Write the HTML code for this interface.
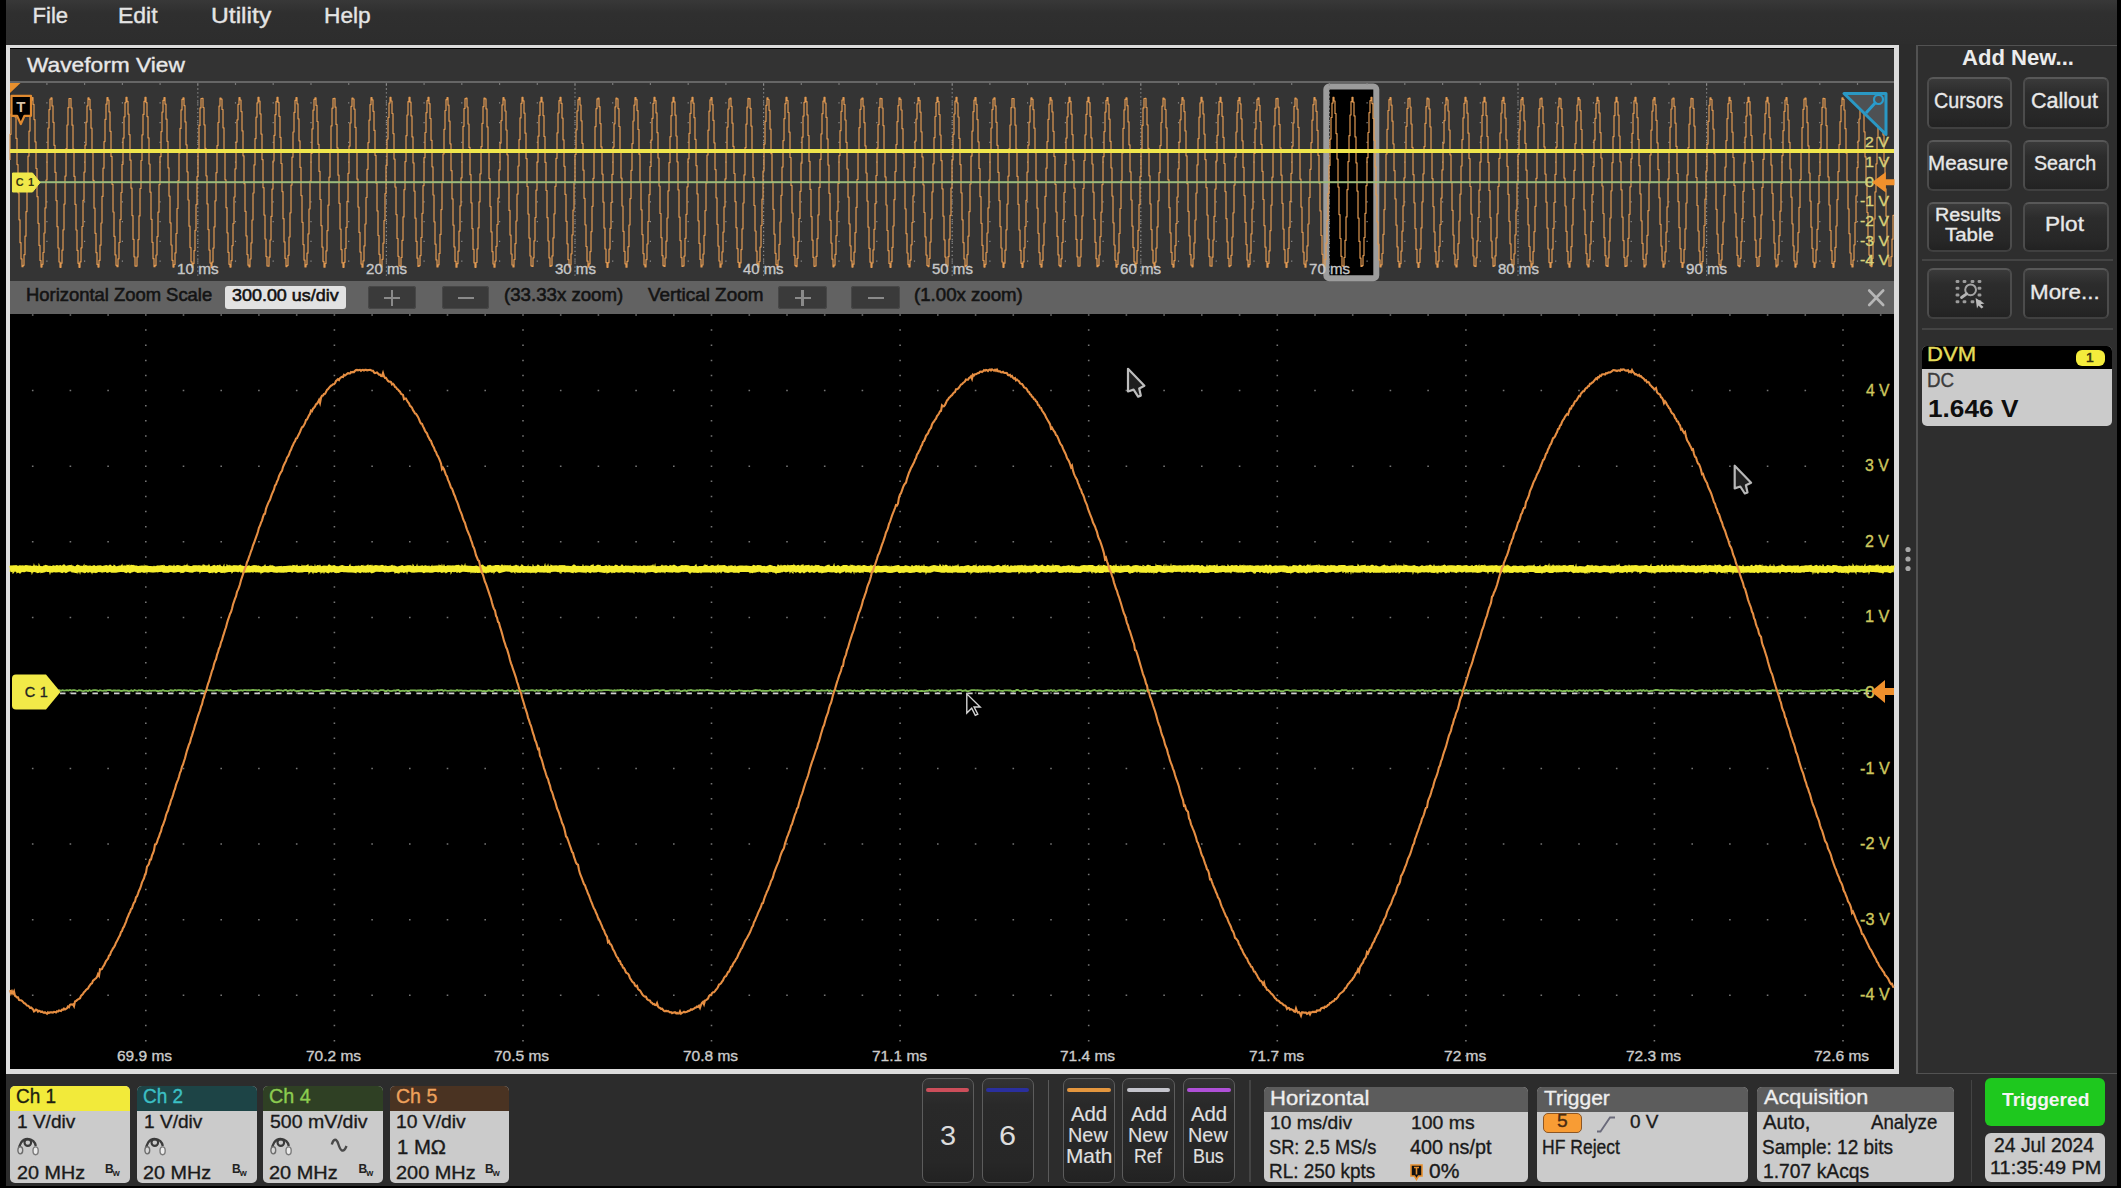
<!DOCTYPE html><html><head><meta charset="utf-8"><style>html,body{margin:0;padding:0;width:2121px;height:1188px;overflow:hidden;background:#000;font-family:'Liberation Sans', sans-serif;}.t{position:absolute;white-space:nowrap;line-height:1;transform-origin:0 0;}.b{position:absolute;box-sizing:border-box;}</style></head><body><div style="position:absolute;left:5.5px;top:0px;width:2111.5px;height:1185.5px;background:#2c2c2c"></div><div style="position:absolute;left:5.5px;top:0px;width:2111.5px;height:44px;background:linear-gradient(#383838,#2f2f2f 30%,#2d2d2d)"></div><div class="t" style="left:32.50px;top:4.59px;font-size:22.09px;color:#e4e4e4;font-weight:400;transform:scaleX(1.0000);-webkit-text-stroke:0.35px #e4e4e4;">File</div><div class="t" style="left:118.46px;top:4.59px;font-size:22.09px;color:#e4e4e4;font-weight:400;transform:scaleX(1.0405);-webkit-text-stroke:0.35px #e4e4e4;">Edit</div><div class="t" style="left:210.63px;top:4.59px;font-size:22.09px;color:#e4e4e4;font-weight:400;transform:scaleX(1.1162);-webkit-text-stroke:0.35px #e4e4e4;">Utility</div><div class="t" style="left:323.58px;top:4.59px;font-size:22.09px;color:#e4e4e4;font-weight:400;transform:scaleX(1.0296);-webkit-text-stroke:0.35px #e4e4e4;">Help</div><div style="position:absolute;left:6px;top:45px;width:1893px;height:1029px;box-sizing:border-box;border:solid #dcdcdc;border-width:3.5px 5px 5px 4px;background:#000"></div><div style="position:absolute;left:10px;top:48.5px;width:1884px;height:33px;background:#333333"></div><div style="position:absolute;left:10px;top:81px;width:1884px;height:2.5px;background:#666"></div><div style="position:absolute;left:10px;top:281px;width:1884px;height:33px;background:#626262"></div><div class="t" style="left:26.67px;top:56.31px;font-size:19.48px;color:#e8e8e8;font-weight:400;transform:scaleX(1.1667);-webkit-text-stroke:0.35px #e8e8e8;">Waveform View</div><svg width="2121" height="1188" style="position:absolute;left:0;top:0"><rect x="10" y="83" width="1884" height="198" fill="#343434"/><rect x="1326.3" y="86.5" width="50" height="191.7" rx="3" fill="#000" stroke="#9c9c9c" stroke-width="6"/><path d="M197.2 85.0h1.2M197.2 89.0h1.2M197.2 92.9h1.2M197.2 96.9h1.2M197.2 100.8h1.2M197.2 104.8h1.2M197.2 108.8h1.2M197.2 112.7h1.2M197.2 116.7h1.2M197.2 120.6h1.2M197.2 124.6h1.2M197.2 128.6h1.2M197.2 132.5h1.2M197.2 136.5h1.2M197.2 140.4h1.2M197.2 144.4h1.2M197.2 148.4h1.2M197.2 152.3h1.2M197.2 156.3h1.2M197.2 160.2h1.2M197.2 164.2h1.2M197.2 168.2h1.2M197.2 172.1h1.2M197.2 176.1h1.2M197.2 180.0h1.2M197.2 184.0h1.2M197.2 188.0h1.2M197.2 191.9h1.2M197.2 195.9h1.2M197.2 199.8h1.2M197.2 203.8h1.2M197.2 207.8h1.2M197.2 211.7h1.2M197.2 215.7h1.2M197.2 219.6h1.2M197.2 223.6h1.2M197.2 227.6h1.2M197.2 231.5h1.2M197.2 235.5h1.2M197.2 239.4h1.2M197.2 243.4h1.2M197.2 247.4h1.2M197.2 251.3h1.2M197.2 255.3h1.2M197.2 259.2h1.2M197.2 263.2h1.2M197.2 267.2h1.2M197.2 271.1h1.2M197.2 275.1h1.2M385.8 85.0h1.2M385.8 89.0h1.2M385.8 92.9h1.2M385.8 96.9h1.2M385.8 100.8h1.2M385.8 104.8h1.2M385.8 108.8h1.2M385.8 112.7h1.2M385.8 116.7h1.2M385.8 120.6h1.2M385.8 124.6h1.2M385.8 128.6h1.2M385.8 132.5h1.2M385.8 136.5h1.2M385.8 140.4h1.2M385.8 144.4h1.2M385.8 148.4h1.2M385.8 152.3h1.2M385.8 156.3h1.2M385.8 160.2h1.2M385.8 164.2h1.2M385.8 168.2h1.2M385.8 172.1h1.2M385.8 176.1h1.2M385.8 180.0h1.2M385.8 184.0h1.2M385.8 188.0h1.2M385.8 191.9h1.2M385.8 195.9h1.2M385.8 199.8h1.2M385.8 203.8h1.2M385.8 207.8h1.2M385.8 211.7h1.2M385.8 215.7h1.2M385.8 219.6h1.2M385.8 223.6h1.2M385.8 227.6h1.2M385.8 231.5h1.2M385.8 235.5h1.2M385.8 239.4h1.2M385.8 243.4h1.2M385.8 247.4h1.2M385.8 251.3h1.2M385.8 255.3h1.2M385.8 259.2h1.2M385.8 263.2h1.2M385.8 267.2h1.2M385.8 271.1h1.2M385.8 275.1h1.2M574.4 85.0h1.2M574.4 89.0h1.2M574.4 92.9h1.2M574.4 96.9h1.2M574.4 100.8h1.2M574.4 104.8h1.2M574.4 108.8h1.2M574.4 112.7h1.2M574.4 116.7h1.2M574.4 120.6h1.2M574.4 124.6h1.2M574.4 128.6h1.2M574.4 132.5h1.2M574.4 136.5h1.2M574.4 140.4h1.2M574.4 144.4h1.2M574.4 148.4h1.2M574.4 152.3h1.2M574.4 156.3h1.2M574.4 160.2h1.2M574.4 164.2h1.2M574.4 168.2h1.2M574.4 172.1h1.2M574.4 176.1h1.2M574.4 180.0h1.2M574.4 184.0h1.2M574.4 188.0h1.2M574.4 191.9h1.2M574.4 195.9h1.2M574.4 199.8h1.2M574.4 203.8h1.2M574.4 207.8h1.2M574.4 211.7h1.2M574.4 215.7h1.2M574.4 219.6h1.2M574.4 223.6h1.2M574.4 227.6h1.2M574.4 231.5h1.2M574.4 235.5h1.2M574.4 239.4h1.2M574.4 243.4h1.2M574.4 247.4h1.2M574.4 251.3h1.2M574.4 255.3h1.2M574.4 259.2h1.2M574.4 263.2h1.2M574.4 267.2h1.2M574.4 271.1h1.2M574.4 275.1h1.2M763.0 85.0h1.2M763.0 89.0h1.2M763.0 92.9h1.2M763.0 96.9h1.2M763.0 100.8h1.2M763.0 104.8h1.2M763.0 108.8h1.2M763.0 112.7h1.2M763.0 116.7h1.2M763.0 120.6h1.2M763.0 124.6h1.2M763.0 128.6h1.2M763.0 132.5h1.2M763.0 136.5h1.2M763.0 140.4h1.2M763.0 144.4h1.2M763.0 148.4h1.2M763.0 152.3h1.2M763.0 156.3h1.2M763.0 160.2h1.2M763.0 164.2h1.2M763.0 168.2h1.2M763.0 172.1h1.2M763.0 176.1h1.2M763.0 180.0h1.2M763.0 184.0h1.2M763.0 188.0h1.2M763.0 191.9h1.2M763.0 195.9h1.2M763.0 199.8h1.2M763.0 203.8h1.2M763.0 207.8h1.2M763.0 211.7h1.2M763.0 215.7h1.2M763.0 219.6h1.2M763.0 223.6h1.2M763.0 227.6h1.2M763.0 231.5h1.2M763.0 235.5h1.2M763.0 239.4h1.2M763.0 243.4h1.2M763.0 247.4h1.2M763.0 251.3h1.2M763.0 255.3h1.2M763.0 259.2h1.2M763.0 263.2h1.2M763.0 267.2h1.2M763.0 271.1h1.2M763.0 275.1h1.2M951.6 85.0h1.2M951.6 89.0h1.2M951.6 92.9h1.2M951.6 96.9h1.2M951.6 100.8h1.2M951.6 104.8h1.2M951.6 108.8h1.2M951.6 112.7h1.2M951.6 116.7h1.2M951.6 120.6h1.2M951.6 124.6h1.2M951.6 128.6h1.2M951.6 132.5h1.2M951.6 136.5h1.2M951.6 140.4h1.2M951.6 144.4h1.2M951.6 148.4h1.2M951.6 152.3h1.2M951.6 156.3h1.2M951.6 160.2h1.2M951.6 164.2h1.2M951.6 168.2h1.2M951.6 172.1h1.2M951.6 176.1h1.2M951.6 180.0h1.2M951.6 184.0h1.2M951.6 188.0h1.2M951.6 191.9h1.2M951.6 195.9h1.2M951.6 199.8h1.2M951.6 203.8h1.2M951.6 207.8h1.2M951.6 211.7h1.2M951.6 215.7h1.2M951.6 219.6h1.2M951.6 223.6h1.2M951.6 227.6h1.2M951.6 231.5h1.2M951.6 235.5h1.2M951.6 239.4h1.2M951.6 243.4h1.2M951.6 247.4h1.2M951.6 251.3h1.2M951.6 255.3h1.2M951.6 259.2h1.2M951.6 263.2h1.2M951.6 267.2h1.2M951.6 271.1h1.2M951.6 275.1h1.2M1140.2 85.0h1.2M1140.2 89.0h1.2M1140.2 92.9h1.2M1140.2 96.9h1.2M1140.2 100.8h1.2M1140.2 104.8h1.2M1140.2 108.8h1.2M1140.2 112.7h1.2M1140.2 116.7h1.2M1140.2 120.6h1.2M1140.2 124.6h1.2M1140.2 128.6h1.2M1140.2 132.5h1.2M1140.2 136.5h1.2M1140.2 140.4h1.2M1140.2 144.4h1.2M1140.2 148.4h1.2M1140.2 152.3h1.2M1140.2 156.3h1.2M1140.2 160.2h1.2M1140.2 164.2h1.2M1140.2 168.2h1.2M1140.2 172.1h1.2M1140.2 176.1h1.2M1140.2 180.0h1.2M1140.2 184.0h1.2M1140.2 188.0h1.2M1140.2 191.9h1.2M1140.2 195.9h1.2M1140.2 199.8h1.2M1140.2 203.8h1.2M1140.2 207.8h1.2M1140.2 211.7h1.2M1140.2 215.7h1.2M1140.2 219.6h1.2M1140.2 223.6h1.2M1140.2 227.6h1.2M1140.2 231.5h1.2M1140.2 235.5h1.2M1140.2 239.4h1.2M1140.2 243.4h1.2M1140.2 247.4h1.2M1140.2 251.3h1.2M1140.2 255.3h1.2M1140.2 259.2h1.2M1140.2 263.2h1.2M1140.2 267.2h1.2M1140.2 271.1h1.2M1140.2 275.1h1.2M1328.8 85.0h1.2M1328.8 89.0h1.2M1328.8 92.9h1.2M1328.8 96.9h1.2M1328.8 100.8h1.2M1328.8 104.8h1.2M1328.8 108.8h1.2M1328.8 112.7h1.2M1328.8 116.7h1.2M1328.8 120.6h1.2M1328.8 124.6h1.2M1328.8 128.6h1.2M1328.8 132.5h1.2M1328.8 136.5h1.2M1328.8 140.4h1.2M1328.8 144.4h1.2M1328.8 148.4h1.2M1328.8 152.3h1.2M1328.8 156.3h1.2M1328.8 160.2h1.2M1328.8 164.2h1.2M1328.8 168.2h1.2M1328.8 172.1h1.2M1328.8 176.1h1.2M1328.8 180.0h1.2M1328.8 184.0h1.2M1328.8 188.0h1.2M1328.8 191.9h1.2M1328.8 195.9h1.2M1328.8 199.8h1.2M1328.8 203.8h1.2M1328.8 207.8h1.2M1328.8 211.7h1.2M1328.8 215.7h1.2M1328.8 219.6h1.2M1328.8 223.6h1.2M1328.8 227.6h1.2M1328.8 231.5h1.2M1328.8 235.5h1.2M1328.8 239.4h1.2M1328.8 243.4h1.2M1328.8 247.4h1.2M1328.8 251.3h1.2M1328.8 255.3h1.2M1328.8 259.2h1.2M1328.8 263.2h1.2M1328.8 267.2h1.2M1328.8 271.1h1.2M1328.8 275.1h1.2M1517.4 85.0h1.2M1517.4 89.0h1.2M1517.4 92.9h1.2M1517.4 96.9h1.2M1517.4 100.8h1.2M1517.4 104.8h1.2M1517.4 108.8h1.2M1517.4 112.7h1.2M1517.4 116.7h1.2M1517.4 120.6h1.2M1517.4 124.6h1.2M1517.4 128.6h1.2M1517.4 132.5h1.2M1517.4 136.5h1.2M1517.4 140.4h1.2M1517.4 144.4h1.2M1517.4 148.4h1.2M1517.4 152.3h1.2M1517.4 156.3h1.2M1517.4 160.2h1.2M1517.4 164.2h1.2M1517.4 168.2h1.2M1517.4 172.1h1.2M1517.4 176.1h1.2M1517.4 180.0h1.2M1517.4 184.0h1.2M1517.4 188.0h1.2M1517.4 191.9h1.2M1517.4 195.9h1.2M1517.4 199.8h1.2M1517.4 203.8h1.2M1517.4 207.8h1.2M1517.4 211.7h1.2M1517.4 215.7h1.2M1517.4 219.6h1.2M1517.4 223.6h1.2M1517.4 227.6h1.2M1517.4 231.5h1.2M1517.4 235.5h1.2M1517.4 239.4h1.2M1517.4 243.4h1.2M1517.4 247.4h1.2M1517.4 251.3h1.2M1517.4 255.3h1.2M1517.4 259.2h1.2M1517.4 263.2h1.2M1517.4 267.2h1.2M1517.4 271.1h1.2M1517.4 275.1h1.2M1706.0 85.0h1.2M1706.0 89.0h1.2M1706.0 92.9h1.2M1706.0 96.9h1.2M1706.0 100.8h1.2M1706.0 104.8h1.2M1706.0 108.8h1.2M1706.0 112.7h1.2M1706.0 116.7h1.2M1706.0 120.6h1.2M1706.0 124.6h1.2M1706.0 128.6h1.2M1706.0 132.5h1.2M1706.0 136.5h1.2M1706.0 140.4h1.2M1706.0 144.4h1.2M1706.0 148.4h1.2M1706.0 152.3h1.2M1706.0 156.3h1.2M1706.0 160.2h1.2M1706.0 164.2h1.2M1706.0 168.2h1.2M1706.0 172.1h1.2M1706.0 176.1h1.2M1706.0 180.0h1.2M1706.0 184.0h1.2M1706.0 188.0h1.2M1706.0 191.9h1.2M1706.0 195.9h1.2M1706.0 199.8h1.2M1706.0 203.8h1.2M1706.0 207.8h1.2M1706.0 211.7h1.2M1706.0 215.7h1.2M1706.0 219.6h1.2M1706.0 223.6h1.2M1706.0 227.6h1.2M1706.0 231.5h1.2M1706.0 235.5h1.2M1706.0 239.4h1.2M1706.0 243.4h1.2M1706.0 247.4h1.2M1706.0 251.3h1.2M1706.0 255.3h1.2M1706.0 259.2h1.2M1706.0 263.2h1.2M1706.0 267.2h1.2M1706.0 271.1h1.2M1706.0 275.1h1.2M46.3 84.0h1.2M84.0 84.0h1.2M121.8 84.0h1.2M159.5 84.0h1.2M197.2 84.0h1.2M234.9 84.0h1.2M272.6 84.0h1.2M310.4 84.0h1.2M348.1 84.0h1.2M385.8 84.0h1.2M423.5 84.0h1.2M461.2 84.0h1.2M499.0 84.0h1.2M536.7 84.0h1.2M574.4 84.0h1.2M612.1 84.0h1.2M649.8 84.0h1.2M687.6 84.0h1.2M725.3 84.0h1.2M763.0 84.0h1.2M800.7 84.0h1.2M838.4 84.0h1.2M876.2 84.0h1.2M913.9 84.0h1.2M951.6 84.0h1.2M989.3 84.0h1.2M1027.0 84.0h1.2M1064.8 84.0h1.2M1102.5 84.0h1.2M1140.2 84.0h1.2M1177.9 84.0h1.2M1215.6 84.0h1.2M1253.4 84.0h1.2M1291.1 84.0h1.2M1328.8 84.0h1.2M1366.5 84.0h1.2M1404.2 84.0h1.2M1442.0 84.0h1.2M1479.7 84.0h1.2M1517.4 84.0h1.2M1555.1 84.0h1.2M1592.8 84.0h1.2M1630.6 84.0h1.2M1668.3 84.0h1.2M1706.0 84.0h1.2M1743.7 84.0h1.2M1781.4 84.0h1.2M1819.2 84.0h1.2M1856.9 84.0h1.2M46.3 102.8h1.2M84.0 102.8h1.2M121.8 102.8h1.2M159.5 102.8h1.2M197.2 102.8h1.2M234.9 102.8h1.2M272.6 102.8h1.2M310.4 102.8h1.2M348.1 102.8h1.2M385.8 102.8h1.2M423.5 102.8h1.2M461.2 102.8h1.2M499.0 102.8h1.2M536.7 102.8h1.2M574.4 102.8h1.2M612.1 102.8h1.2M649.8 102.8h1.2M687.6 102.8h1.2M725.3 102.8h1.2M763.0 102.8h1.2M800.7 102.8h1.2M838.4 102.8h1.2M876.2 102.8h1.2M913.9 102.8h1.2M951.6 102.8h1.2M989.3 102.8h1.2M1027.0 102.8h1.2M1064.8 102.8h1.2M1102.5 102.8h1.2M1140.2 102.8h1.2M1177.9 102.8h1.2M1215.6 102.8h1.2M1253.4 102.8h1.2M1291.1 102.8h1.2M1328.8 102.8h1.2M1366.5 102.8h1.2M1404.2 102.8h1.2M1442.0 102.8h1.2M1479.7 102.8h1.2M1517.4 102.8h1.2M1555.1 102.8h1.2M1592.8 102.8h1.2M1630.6 102.8h1.2M1668.3 102.8h1.2M1706.0 102.8h1.2M1743.7 102.8h1.2M1781.4 102.8h1.2M1819.2 102.8h1.2M1856.9 102.8h1.2M46.3 122.6h1.2M84.0 122.6h1.2M121.8 122.6h1.2M159.5 122.6h1.2M197.2 122.6h1.2M234.9 122.6h1.2M272.6 122.6h1.2M310.4 122.6h1.2M348.1 122.6h1.2M385.8 122.6h1.2M423.5 122.6h1.2M461.2 122.6h1.2M499.0 122.6h1.2M536.7 122.6h1.2M574.4 122.6h1.2M612.1 122.6h1.2M649.8 122.6h1.2M687.6 122.6h1.2M725.3 122.6h1.2M763.0 122.6h1.2M800.7 122.6h1.2M838.4 122.6h1.2M876.2 122.6h1.2M913.9 122.6h1.2M951.6 122.6h1.2M989.3 122.6h1.2M1027.0 122.6h1.2M1064.8 122.6h1.2M1102.5 122.6h1.2M1140.2 122.6h1.2M1177.9 122.6h1.2M1215.6 122.6h1.2M1253.4 122.6h1.2M1291.1 122.6h1.2M1328.8 122.6h1.2M1366.5 122.6h1.2M1404.2 122.6h1.2M1442.0 122.6h1.2M1479.7 122.6h1.2M1517.4 122.6h1.2M1555.1 122.6h1.2M1592.8 122.6h1.2M1630.6 122.6h1.2M1668.3 122.6h1.2M1706.0 122.6h1.2M1743.7 122.6h1.2M1781.4 122.6h1.2M1819.2 122.6h1.2M1856.9 122.6h1.2M46.3 142.4h1.2M84.0 142.4h1.2M121.8 142.4h1.2M159.5 142.4h1.2M197.2 142.4h1.2M234.9 142.4h1.2M272.6 142.4h1.2M310.4 142.4h1.2M348.1 142.4h1.2M385.8 142.4h1.2M423.5 142.4h1.2M461.2 142.4h1.2M499.0 142.4h1.2M536.7 142.4h1.2M574.4 142.4h1.2M612.1 142.4h1.2M649.8 142.4h1.2M687.6 142.4h1.2M725.3 142.4h1.2M763.0 142.4h1.2M800.7 142.4h1.2M838.4 142.4h1.2M876.2 142.4h1.2M913.9 142.4h1.2M951.6 142.4h1.2M989.3 142.4h1.2M1027.0 142.4h1.2M1064.8 142.4h1.2M1102.5 142.4h1.2M1140.2 142.4h1.2M1177.9 142.4h1.2M1215.6 142.4h1.2M1253.4 142.4h1.2M1291.1 142.4h1.2M1328.8 142.4h1.2M1366.5 142.4h1.2M1404.2 142.4h1.2M1442.0 142.4h1.2M1479.7 142.4h1.2M1517.4 142.4h1.2M1555.1 142.4h1.2M1592.8 142.4h1.2M1630.6 142.4h1.2M1668.3 142.4h1.2M1706.0 142.4h1.2M1743.7 142.4h1.2M1781.4 142.4h1.2M1819.2 142.4h1.2M1856.9 142.4h1.2M46.3 162.2h1.2M84.0 162.2h1.2M121.8 162.2h1.2M159.5 162.2h1.2M197.2 162.2h1.2M234.9 162.2h1.2M272.6 162.2h1.2M310.4 162.2h1.2M348.1 162.2h1.2M385.8 162.2h1.2M423.5 162.2h1.2M461.2 162.2h1.2M499.0 162.2h1.2M536.7 162.2h1.2M574.4 162.2h1.2M612.1 162.2h1.2M649.8 162.2h1.2M687.6 162.2h1.2M725.3 162.2h1.2M763.0 162.2h1.2M800.7 162.2h1.2M838.4 162.2h1.2M876.2 162.2h1.2M913.9 162.2h1.2M951.6 162.2h1.2M989.3 162.2h1.2M1027.0 162.2h1.2M1064.8 162.2h1.2M1102.5 162.2h1.2M1140.2 162.2h1.2M1177.9 162.2h1.2M1215.6 162.2h1.2M1253.4 162.2h1.2M1291.1 162.2h1.2M1328.8 162.2h1.2M1366.5 162.2h1.2M1404.2 162.2h1.2M1442.0 162.2h1.2M1479.7 162.2h1.2M1517.4 162.2h1.2M1555.1 162.2h1.2M1592.8 162.2h1.2M1630.6 162.2h1.2M1668.3 162.2h1.2M1706.0 162.2h1.2M1743.7 162.2h1.2M1781.4 162.2h1.2M1819.2 162.2h1.2M1856.9 162.2h1.2M46.3 182.0h1.2M84.0 182.0h1.2M121.8 182.0h1.2M159.5 182.0h1.2M197.2 182.0h1.2M234.9 182.0h1.2M272.6 182.0h1.2M310.4 182.0h1.2M348.1 182.0h1.2M385.8 182.0h1.2M423.5 182.0h1.2M461.2 182.0h1.2M499.0 182.0h1.2M536.7 182.0h1.2M574.4 182.0h1.2M612.1 182.0h1.2M649.8 182.0h1.2M687.6 182.0h1.2M725.3 182.0h1.2M763.0 182.0h1.2M800.7 182.0h1.2M838.4 182.0h1.2M876.2 182.0h1.2M913.9 182.0h1.2M951.6 182.0h1.2M989.3 182.0h1.2M1027.0 182.0h1.2M1064.8 182.0h1.2M1102.5 182.0h1.2M1140.2 182.0h1.2M1177.9 182.0h1.2M1215.6 182.0h1.2M1253.4 182.0h1.2M1291.1 182.0h1.2M1328.8 182.0h1.2M1366.5 182.0h1.2M1404.2 182.0h1.2M1442.0 182.0h1.2M1479.7 182.0h1.2M1517.4 182.0h1.2M1555.1 182.0h1.2M1592.8 182.0h1.2M1630.6 182.0h1.2M1668.3 182.0h1.2M1706.0 182.0h1.2M1743.7 182.0h1.2M1781.4 182.0h1.2M1819.2 182.0h1.2M1856.9 182.0h1.2M46.3 201.8h1.2M84.0 201.8h1.2M121.8 201.8h1.2M159.5 201.8h1.2M197.2 201.8h1.2M234.9 201.8h1.2M272.6 201.8h1.2M310.4 201.8h1.2M348.1 201.8h1.2M385.8 201.8h1.2M423.5 201.8h1.2M461.2 201.8h1.2M499.0 201.8h1.2M536.7 201.8h1.2M574.4 201.8h1.2M612.1 201.8h1.2M649.8 201.8h1.2M687.6 201.8h1.2M725.3 201.8h1.2M763.0 201.8h1.2M800.7 201.8h1.2M838.4 201.8h1.2M876.2 201.8h1.2M913.9 201.8h1.2M951.6 201.8h1.2M989.3 201.8h1.2M1027.0 201.8h1.2M1064.8 201.8h1.2M1102.5 201.8h1.2M1140.2 201.8h1.2M1177.9 201.8h1.2M1215.6 201.8h1.2M1253.4 201.8h1.2M1291.1 201.8h1.2M1328.8 201.8h1.2M1366.5 201.8h1.2M1404.2 201.8h1.2M1442.0 201.8h1.2M1479.7 201.8h1.2M1517.4 201.8h1.2M1555.1 201.8h1.2M1592.8 201.8h1.2M1630.6 201.8h1.2M1668.3 201.8h1.2M1706.0 201.8h1.2M1743.7 201.8h1.2M1781.4 201.8h1.2M1819.2 201.8h1.2M1856.9 201.8h1.2M46.3 221.6h1.2M84.0 221.6h1.2M121.8 221.6h1.2M159.5 221.6h1.2M197.2 221.6h1.2M234.9 221.6h1.2M272.6 221.6h1.2M310.4 221.6h1.2M348.1 221.6h1.2M385.8 221.6h1.2M423.5 221.6h1.2M461.2 221.6h1.2M499.0 221.6h1.2M536.7 221.6h1.2M574.4 221.6h1.2M612.1 221.6h1.2M649.8 221.6h1.2M687.6 221.6h1.2M725.3 221.6h1.2M763.0 221.6h1.2M800.7 221.6h1.2M838.4 221.6h1.2M876.2 221.6h1.2M913.9 221.6h1.2M951.6 221.6h1.2M989.3 221.6h1.2M1027.0 221.6h1.2M1064.8 221.6h1.2M1102.5 221.6h1.2M1140.2 221.6h1.2M1177.9 221.6h1.2M1215.6 221.6h1.2M1253.4 221.6h1.2M1291.1 221.6h1.2M1328.8 221.6h1.2M1366.5 221.6h1.2M1404.2 221.6h1.2M1442.0 221.6h1.2M1479.7 221.6h1.2M1517.4 221.6h1.2M1555.1 221.6h1.2M1592.8 221.6h1.2M1630.6 221.6h1.2M1668.3 221.6h1.2M1706.0 221.6h1.2M1743.7 221.6h1.2M1781.4 221.6h1.2M1819.2 221.6h1.2M1856.9 221.6h1.2M46.3 241.4h1.2M84.0 241.4h1.2M121.8 241.4h1.2M159.5 241.4h1.2M197.2 241.4h1.2M234.9 241.4h1.2M272.6 241.4h1.2M310.4 241.4h1.2M348.1 241.4h1.2M385.8 241.4h1.2M423.5 241.4h1.2M461.2 241.4h1.2M499.0 241.4h1.2M536.7 241.4h1.2M574.4 241.4h1.2M612.1 241.4h1.2M649.8 241.4h1.2M687.6 241.4h1.2M725.3 241.4h1.2M763.0 241.4h1.2M800.7 241.4h1.2M838.4 241.4h1.2M876.2 241.4h1.2M913.9 241.4h1.2M951.6 241.4h1.2M989.3 241.4h1.2M1027.0 241.4h1.2M1064.8 241.4h1.2M1102.5 241.4h1.2M1140.2 241.4h1.2M1177.9 241.4h1.2M1215.6 241.4h1.2M1253.4 241.4h1.2M1291.1 241.4h1.2M1328.8 241.4h1.2M1366.5 241.4h1.2M1404.2 241.4h1.2M1442.0 241.4h1.2M1479.7 241.4h1.2M1517.4 241.4h1.2M1555.1 241.4h1.2M1592.8 241.4h1.2M1630.6 241.4h1.2M1668.3 241.4h1.2M1706.0 241.4h1.2M1743.7 241.4h1.2M1781.4 241.4h1.2M1819.2 241.4h1.2M1856.9 241.4h1.2M46.3 261.2h1.2M84.0 261.2h1.2M121.8 261.2h1.2M159.5 261.2h1.2M197.2 261.2h1.2M234.9 261.2h1.2M272.6 261.2h1.2M310.4 261.2h1.2M348.1 261.2h1.2M385.8 261.2h1.2M423.5 261.2h1.2M461.2 261.2h1.2M499.0 261.2h1.2M536.7 261.2h1.2M574.4 261.2h1.2M612.1 261.2h1.2M649.8 261.2h1.2M687.6 261.2h1.2M725.3 261.2h1.2M763.0 261.2h1.2M800.7 261.2h1.2M838.4 261.2h1.2M876.2 261.2h1.2M913.9 261.2h1.2M951.6 261.2h1.2M989.3 261.2h1.2M1027.0 261.2h1.2M1064.8 261.2h1.2M1102.5 261.2h1.2M1140.2 261.2h1.2M1177.9 261.2h1.2M1215.6 261.2h1.2M1253.4 261.2h1.2M1291.1 261.2h1.2M1328.8 261.2h1.2M1366.5 261.2h1.2M1404.2 261.2h1.2M1442.0 261.2h1.2M1479.7 261.2h1.2M1517.4 261.2h1.2M1555.1 261.2h1.2M1592.8 261.2h1.2M1630.6 261.2h1.2M1668.3 261.2h1.2M1706.0 261.2h1.2M1743.7 261.2h1.2M1781.4 261.2h1.2M1819.2 261.2h1.2M1856.9 261.2h1.2" stroke="#8c8c8c" stroke-width="1.3" fill="none"/><path d="M10 159.9V134.3H11V114.0H12V101.2H13V97.3H14V102.8H15V117.0H16V138.4H17V164.6H18V192.8H19V219.8H20V242.7H21V258.9H22V266.7H23V265.3H24V254.7H25V236.2H26V211.7H27V184.0H28V156.1H29V131.1H30V111.7H31V100.1H32V97.5H33V104.3H34V119.6H35V141.8H36V168.5H37V196.7H38V223.3H39V245.4H40V260.5H41V267.1H42V264.3H43V252.5H44V233.0H45V207.9H46V180.0H47V152.4H48V128.0H49V109.6H50V99.2H51V97.9H52V105.9H53V122.3H54V145.3H55V172.4H56V200.6H57V226.7H58V248.0H59V262.0H60V267.3H61V263.2H62V250.2H63V229.8H64V204.1H65V176.1H66V148.7H67V125.0H68V107.6H69V98.5H70V98.5H71V107.8H72V125.2H73V149.0H74V176.4H75V204.4H76V230.0H77V250.4H78V263.3H79V267.3H80V261.9H81V247.8H82V226.5H83V200.3H84V172.1H85V145.1H86V122.1H87V105.8H88V97.9H89V99.3H90V109.7H91V128.2H92V152.6H93V180.3H94V208.2H95V233.3H96V252.7H97V264.4H98V267.1H99V260.4H100V245.2H101V223.0H102V196.4H103V168.2H104V141.6H105V119.4H106V104.2H107V97.5H108V100.2H109V111.9H110V131.3H111V156.4H112V184.3H113V212.0H114V236.4H115V254.9H116V265.3H117V266.7H118V258.8H119V242.5H120V219.5H121V192.5H122V164.3H123V138.1H124V116.8H125V102.7H126V97.3H127V101.3H128V114.2H129V134.6H130V160.2H131V188.2H132V215.6H133V239.4H134V256.8H135V266.1H136V266.1H137V257.0H138V239.6H139V215.9H140V188.5H141V160.5H142V134.8H143V114.4H144V101.4H145V97.3H146V102.6H147V116.6H148V137.9H149V164.0H150V192.2H151V219.3H152V242.3H153V258.7H154V266.7H155V265.4H156V255.0H157V236.6H158V212.2H159V184.6H160V156.7H161V131.6H162V112.1H163V100.3H164V97.5H165V104.1H166V119.2H167V141.3H168V167.9H169V196.1H170V222.8H171V245.0H172V260.3H173V267.1H174V264.5H175V252.9H176V233.5H177V208.5H178V180.6H179V152.9H180V128.4H181V109.9H182V99.3H183V97.9H184V105.7H185V121.9H186V144.8H187V171.8H188V200.0H189V226.2H190V247.6H191V261.8H192V267.3H193V263.4H194V250.6H195V230.3H196V204.7H197V176.6H198V149.2H199V125.4H200V107.9H201V98.5H202V98.4H203V107.5H204V124.8H205V148.4H206V175.8H207V203.9H208V229.6H209V250.1H210V263.1H211V267.3H212V262.1H213V248.1H214V226.9H215V200.8H216V172.7H217V145.6H218V122.5H219V106.1H220V98.0H221V99.1H222V109.5H223V127.8H224V152.1H225V179.8H226V207.7H227V232.8H228V252.4H229V264.3H230V267.1H231V260.7H232V245.6H233V223.5H234V197.0H235V168.8H236V142.1H237V119.8H238V104.4H239V97.6H240V100.0H241V111.6H242V130.9H243V155.8H244V183.7H245V211.4H246V235.9H247V254.6H248V265.2H249V266.8H250V259.0H251V242.9H252V220.0H253V193.0H254V164.9H255V138.6H256V117.2H257V102.9H258V97.3H259V101.1H260V113.9H261V134.1H262V159.6H263V187.7H264V215.1H265V239.0H266V256.6H267V266.0H268V266.2H269V257.2H270V240.0H271V216.4H272V189.1H273V161.0H274V135.3H275V114.7H276V101.6H277V97.3H278V102.4H279V116.3H280V137.4H281V163.5H282V191.6H283V218.7H284V241.9H285V258.4H286V266.6H287V265.5H288V255.3H289V237.0H290V212.8H291V185.1H292V157.2H293V132.0H294V112.4H295V100.4H296V97.5H297V103.8H298V118.8H299V140.8H300V167.4H301V195.6H302V222.3H303V244.6H304V260.1H305V267.0H306V264.6H307V253.2H308V233.9H309V209.0H310V181.2H311V153.4H312V128.9H313V110.2H314V99.4H315V97.8H316V105.4H317V121.5H318V144.3H319V171.3H320V199.5H321V225.7H322V247.2H323V261.6H324V267.2H325V263.5H326V250.9H327V230.7H328V205.2H329V177.2H330V149.7H331V125.9H332V108.2H333V98.6H334V98.3H335V107.2H336V124.4H337V147.9H338V175.2H339V203.3H340V229.1H341V249.7H342V262.9H343V267.3H344V262.3H345V248.5H346V227.4H347V201.4H348V173.3H349V146.1H350V123.0H351V106.3H352V98.0H353V99.0H354V109.2H355V127.4H356V151.6H357V179.2H358V207.1H359V232.4H360V252.1H361V264.1H362V267.2H363V260.9H364V245.9H365V224.0H366V197.5H367V169.3H368V142.6H369V120.2H370V104.6H371V97.6H372V99.9H373V111.3H374V130.4H375V155.3H376V183.1H377V210.9H378V235.5H379V254.3H380V265.1H381V266.8H382V259.3H383V243.2H384V220.5H385V193.6H386V165.4H387V139.1H388V117.5H389V103.1H390V97.4H391V101.0H392V113.5H393V133.6H394V159.1H395V187.1H396V214.6H397V238.5H398V256.3H399V265.9H400V266.3H401V257.5H402V240.4H403V216.9H404V189.7H405V161.6H406V135.7H407V115.0H408V101.7H409V97.3H410V102.2H411V115.9H412V136.9H413V162.9H414V191.1H415V218.2H416V241.4H417V258.2H418V266.5H419V265.6H420V255.6H421V237.5H422V213.3H423V185.7H424V157.7H425V132.5H426V112.7H427V100.6H428V97.4H429V103.6H430V118.5H431V140.3H432V166.8H433V195.0H434V221.8H435V244.2H436V259.9H437V267.0H438V264.8H439V253.5H440V234.4H441V209.6H442V181.7H443V154.0H444V129.3H445V110.5H446V99.6H447V97.7H448V105.2H449V121.2H450V143.8H451V170.7H452V198.9H453V225.2H454V246.9H455V261.4H456V267.2H457V263.7H458V251.2H459V231.2H460V205.8H461V177.8H462V150.3H463V126.3H464V108.5H465V98.7H466V98.2H467V107.0H468V124.0H469V147.4H470V174.7H471V202.8H472V228.6H473V249.4H474V262.8H475V267.3H476V262.5H477V248.9H478V227.9H479V201.9H480V173.8H481V146.6H482V123.4H483V106.6H484V98.1H485V98.9H486V108.9H487V126.9H488V151.1H489V178.6H490V206.6H491V231.9H492V251.7H493V264.0H494V267.2H495V261.1H496V246.3H497V224.5H498V198.1H499V169.9H500V143.1H501V120.6H502V104.9H503V97.7H504V99.8H505V111.0H506V130.0H507V154.8H508V182.6H509V210.4H510V235.1H511V254.0H512V265.0H513V266.9H514V259.5H515V243.6H516V221.0H517V194.2H518V166.0H519V139.6H520V117.9H521V103.3H522V97.4H523V100.8H524V113.2H525V133.2H526V158.6H527V186.5H528V214.1H529V238.1H530V256.0H531V265.8H532V266.4H533V257.8H534V240.8H535V217.5H536V190.2H537V162.1H538V136.2H539V115.4H540V101.9H541V97.3H542V102.0H543V115.6H544V136.5H545V162.4H546V190.5H547V217.7H548V241.0H549V257.9H550V266.4H551V265.7H552V255.9H553V237.9H554V213.8H555V186.3H556V158.3H557V132.9H558V113.0H559V100.7H560V97.4H561V103.4H562V118.1H563V139.8H564V166.3H565V194.4H566V221.3H567V243.8H568V259.6H569V266.9H570V264.9H571V253.8H572V234.8H573V210.1H574V182.3H575V154.5H576V129.8H577V110.8H578V99.7H579V97.7H580V105.0H581V120.8H582V143.3H583V170.2H584V198.3H585V224.8H586V246.5H587V261.2H588V267.2H589V263.9H590V251.6H591V231.7H592V206.3H593V178.3H594V150.8H595V126.7H596V108.7H597V98.9H598V98.2H599V106.7H600V123.6H601V146.9H602V174.1H603V202.2H604V228.1H605V249.0H606V262.6H607V267.3H608V262.7H609V249.2H610V228.4H611V202.5H612V174.4H613V147.1H614V123.8H615V106.8H616V98.2H617V98.8H618V108.6H619V126.5H620V150.5H621V178.1H622V206.0H623V231.4H624V251.4H625V263.8H626V267.2H627V261.3H628V246.7H629V225.0H630V198.6H631V170.4H632V143.6H633V121.0H634V105.1H635V97.7H636V99.6H637V110.6H638V129.5H639V154.2H640V182.0H641V209.8H642V234.6H643V253.6H644V264.8H645V266.9H646V259.7H647V244.0H648V221.5H649V194.7H650V166.5H651V140.1H652V118.3H653V103.5H654V97.4H655V100.6H656V112.9H657V132.7H658V158.0H659V186.0H660V213.5H661V237.7H662V255.7H663V265.7H664V266.5H665V258.0H666V241.2H667V218.0H668V190.8H669V162.7H670V136.7H671V115.7H672V102.1H673V97.3H674V101.8H675V115.2H676V136.0H677V161.8H678V189.9H679V217.2H680V240.6H681V257.6H682V266.4H683V265.9H684V256.1H685V238.3H686V214.3H687V186.8H688V158.8H689V133.4H690V113.4H691V100.9H692V97.4H693V103.2H694V117.7H695V139.4H696V165.7H697V193.9H698V220.8H699V243.4H700V259.4H701V266.9H702V265.0H703V254.1H704V235.3H705V210.6H706V182.9H707V155.0H708V130.2H709V111.1H710V99.8H711V97.6H712V104.7H713V120.4H714V142.8H715V169.6H716V197.8H717V224.3H718V246.1H719V261.0H720V267.2H721V264.0H722V251.9H723V232.1H724V206.9H725V178.9H726V151.3H727V127.1H728V109.0H729V99.0H730V98.1H731V106.4H732V123.2H733V146.4H734V173.5H735V201.7H736V227.7H737V248.7H738V262.4H739V267.3H740V262.9H741V249.6H742V228.9H743V203.0H744V174.9H745V147.7H746V124.2H747V107.1H748V98.3H749V98.7H750V108.3H751V126.1H752V150.0H753V177.5H754V205.5H755V231.0H756V251.1H757V263.6H758V267.2H759V261.5H760V247.1H761V225.5H762V199.2H763V171.0H764V144.1H765V121.4H766V105.3H767V97.8H768V99.5H769V110.3H770V129.1H771V153.7H772V181.5H773V209.3H774V234.2H775V253.3H776V264.7H777V267.0H778V260.0H779V244.4H780V222.0H781V195.3H782V167.1H783V140.6H784V118.7H785V103.7H786V97.4H787V100.5H788V112.5H789V132.2H790V157.5H791V185.4H792V213.0H793V237.2H794V255.4H795V265.6H796V266.6H797V258.3H798V241.6H799V218.5H800V191.3H801V163.2H802V137.2H803V116.1H804V102.3H805V97.3H806V101.7H807V114.9H808V135.5H809V161.3H810V189.4H811V216.7H812V240.2H813V257.4H814V266.3H815V266.0H816V256.4H817V238.7H818V214.9H819V187.4H820V159.4H821V133.9H822V113.7H823V101.1H824V97.4H825V103.0H826V117.4H827V138.9H828V165.1H829V193.3H830V220.3H831V243.1H832V259.2H833V266.8H834V265.2H835V254.4H836V235.7H837V211.2H838V183.4H839V155.6H840V130.7H841V111.4H842V100.0H843V97.6H844V104.5H845V120.0H846V142.3H847V169.0H848V197.2H849V223.8H850V245.8H851V260.8H852V267.1H853V264.2H854V252.2H855V232.6H856V207.4H857V179.5H858V151.8H859V127.6H860V109.3H861V99.1H862V98.0H863V106.2H864V122.7H865V145.9H866V173.0H867V201.1H868V227.2H869V248.3H870V262.2H871V267.3H872V263.0H873V249.9H874V229.3H875V203.6H876V175.5H877V148.2H878V124.6H879V107.4H880V98.4H881V98.6H882V108.0H883V125.6H884V149.5H885V176.9H886V205.0H887V230.5H888V250.7H889V263.5H890V267.3H891V261.7H892V247.4H893V226.0H894V199.7H895V171.6H896V144.6H897V121.7H898V105.6H899V97.8H900V99.4H901V110.0H902V128.7H903V153.2H904V180.9H905V208.8H906V233.7H907V253.0H908V264.6H909V267.0H910V260.2H911V244.8H912V222.5H913V195.8H914V167.6H915V141.1H916V119.0H917V103.9H918V97.5H919V100.3H920V112.2H921V131.8H922V156.9H923V184.8H924V212.5H925V236.8H926V255.1H927V265.5H928V266.6H929V258.5H930V242.1H931V219.0H932V191.9H933V163.8H934V137.7H935V116.5H936V102.5H937V97.3H938V101.5H939V114.5H940V135.0H941V160.7H942V188.8H943V216.2H944V239.8H945V257.1H946V266.2H947V266.1H948V256.7H949V239.2H950V215.4H951V188.0H952V159.9H953V134.3H954V114.0H955V101.2H956V97.3H957V102.8H958V117.0H959V138.4H960V164.6H961V192.8H962V219.8H963V242.7H964V258.9H965V266.7H966V265.3H967V254.7H968V236.2H969V211.7H970V184.0H971V156.1H972V131.1H973V111.7H974V100.1H975V97.5H976V104.3H977V119.6H978V141.8H979V168.5H980V196.7H981V223.3H982V245.4H983V260.5H984V267.1H985V264.3H986V252.5H987V233.0H988V207.9H989V180.0H990V152.4H991V128.0H992V109.6H993V99.2H994V97.9H995V105.9H996V122.3H997V145.3H998V172.4H999V200.6H1000V226.7H1001V248.0H1002V262.0H1003V267.3H1004V263.2H1005V250.2H1006V229.8H1007V204.1H1008V176.1H1009V148.7H1010V125.0H1011V107.6H1012V98.5H1013V98.5H1014V107.8H1015V125.2H1016V149.0H1017V176.4H1018V204.4H1019V230.0H1020V250.4H1021V263.3H1022V267.3H1023V261.9H1024V247.8H1025V226.5H1026V200.3H1027V172.1H1028V145.1H1029V122.1H1030V105.8H1031V97.9H1032V99.3H1033V109.7H1034V128.2H1035V152.6H1036V180.3H1037V208.2H1038V233.3H1039V252.7H1040V264.4H1041V267.1H1042V260.4H1043V245.2H1044V223.0H1045V196.4H1046V168.2H1047V141.6H1048V119.4H1049V104.2H1050V97.5H1051V100.2H1052V111.9H1053V131.3H1054V156.4H1055V184.3H1056V212.0H1057V236.4H1058V254.9H1059V265.3H1060V266.7H1061V258.8H1062V242.5H1063V219.5H1064V192.5H1065V164.3H1066V138.1H1067V116.8H1068V102.7H1069V97.3H1070V101.3H1071V114.2H1072V134.6H1073V160.2H1074V188.2H1075V215.6H1076V239.4H1077V256.8H1078V266.1H1079V266.1H1080V257.0H1081V239.6H1082V215.9H1083V188.5H1084V160.5H1085V134.8H1086V114.4H1087V101.4H1088V97.3H1089V102.6H1090V116.6H1091V137.9H1092V164.0H1093V192.2H1094V219.3H1095V242.3H1096V258.7H1097V266.7H1098V265.4H1099V255.0H1100V236.6H1101V212.2H1102V184.6H1103V156.7H1104V131.6H1105V112.1H1106V100.3H1107V97.5H1108V104.1H1109V119.2H1110V141.3H1111V167.9H1112V196.1H1113V222.8H1114V245.0H1115V260.3H1116V267.1H1117V264.5H1118V252.9H1119V233.5H1120V208.5H1121V180.6H1122V152.9H1123V128.4H1124V109.9H1125V99.3H1126V97.9H1127V105.7H1128V121.9H1129V144.8H1130V171.8H1131V200.0H1132V226.2H1133V247.6H1134V261.8H1135V267.3H1136V263.4H1137V250.6H1138V230.3H1139V204.7H1140V176.6H1141V149.2H1142V125.4H1143V107.9H1144V98.5H1145V98.4H1146V107.5H1147V124.8H1148V148.4H1149V175.8H1150V203.9H1151V229.6H1152V250.1H1153V263.1H1154V267.3H1155V262.1H1156V248.1H1157V226.9H1158V200.8H1159V172.7H1160V145.6H1161V122.5H1162V106.1H1163V98.0H1164V99.1H1165V109.5H1166V127.8H1167V152.1H1168V179.8H1169V207.7H1170V232.8H1171V252.4H1172V264.3H1173V267.1H1174V260.7H1175V245.6H1176V223.5H1177V197.0H1178V168.8H1179V142.1H1180V119.8H1181V104.4H1182V97.6H1183V100.0H1184V111.6H1185V130.9H1186V155.8H1187V183.7H1188V211.4H1189V235.9H1190V254.6H1191V265.2H1192V266.8H1193V259.0H1194V242.9H1195V220.0H1196V193.0H1197V164.9H1198V138.6H1199V117.2H1200V102.9H1201V97.3H1202V101.1H1203V113.9H1204V134.1H1205V159.6H1206V187.7H1207V215.1H1208V239.0H1209V256.6H1210V266.0H1211V266.2H1212V257.2H1213V240.0H1214V216.4H1215V189.1H1216V161.0H1217V135.3H1218V114.7H1219V101.6H1220V97.3H1221V102.4H1222V116.3H1223V137.4H1224V163.5H1225V191.6H1226V218.7H1227V241.9H1228V258.4H1229V266.6H1230V265.5H1231V255.3H1232V237.0H1233V212.8H1234V185.1H1235V157.2H1236V132.0H1237V112.4H1238V100.4H1239V97.5H1240V103.8H1241V118.8H1242V140.8H1243V167.4H1244V195.6H1245V222.3H1246V244.6H1247V260.1H1248V267.0H1249V264.6H1250V253.2H1251V233.9H1252V209.0H1253V181.2H1254V153.4H1255V128.9H1256V110.2H1257V99.4H1258V97.8H1259V105.4H1260V121.5H1261V144.3H1262V171.3H1263V199.5H1264V225.7H1265V247.2H1266V261.6H1267V267.2H1268V263.5H1269V250.9H1270V230.7H1271V205.2H1272V177.2H1273V149.7H1274V125.9H1275V108.2H1276V98.6H1277V98.3H1278V107.2H1279V124.4H1280V147.9H1281V175.2H1282V203.3H1283V229.1H1284V249.7H1285V262.9H1286V267.3H1287V262.3H1288V248.5H1289V227.4H1290V201.4H1291V173.3H1292V146.1H1293V123.0H1294V106.3H1295V98.0H1296V99.0H1297V109.2H1298V127.4H1299V151.6H1300V179.2H1301V207.1H1302V232.4H1303V252.1H1304V264.1H1305V267.2H1306V260.9H1307V245.9H1308V224.0H1309V197.5H1310V169.3H1311V142.6H1312V120.2H1313V104.6H1314V97.6H1315V99.9H1316V111.3H1317V130.4H1318V155.3H1319V183.1H1320V210.9H1321V235.5H1322V254.3H1323V265.1H1324V266.8H1325V259.3H1326V243.2H1327V220.5H1328V193.6H1329V165.4H1330V139.1H1331V117.5H1332V103.1H1333V97.4H1334V101.0H1335V113.5H1336V133.6H1337V159.1H1338V187.1H1339V214.6H1340V238.5H1341V256.3H1342V265.9H1343V266.3H1344V257.5H1345V240.4H1346V216.9H1347V189.7H1348V161.6H1349V135.7H1350V115.0H1351V101.7H1352V97.3H1353V102.2H1354V115.9H1355V136.9H1356V162.9H1357V191.1H1358V218.2H1359V241.4H1360V258.2H1361V266.5H1362V265.6H1363V255.6H1364V237.5H1365V213.3H1366V185.7H1367V157.7H1368V132.5H1369V112.7H1370V100.6H1371V97.4H1372V103.6H1373V118.5H1374V140.3H1375V166.8H1376V195.0H1377V221.8H1378V244.2H1379V259.9H1380V267.0H1381V264.8H1382V253.5H1383V234.4H1384V209.6H1385V181.7H1386V154.0H1387V129.3H1388V110.5H1389V99.6H1390V97.7H1391V105.2H1392V121.2H1393V143.8H1394V170.7H1395V198.9H1396V225.2H1397V246.9H1398V261.4H1399V267.2H1400V263.7H1401V251.2H1402V231.2H1403V205.8H1404V177.8H1405V150.3H1406V126.3H1407V108.5H1408V98.7H1409V98.2H1410V107.0H1411V124.0H1412V147.4H1413V174.7H1414V202.8H1415V228.6H1416V249.4H1417V262.8H1418V267.3H1419V262.5H1420V248.9H1421V227.9H1422V201.9H1423V173.8H1424V146.6H1425V123.4H1426V106.6H1427V98.1H1428V98.9H1429V108.9H1430V126.9H1431V151.1H1432V178.6H1433V206.6H1434V231.9H1435V251.7H1436V264.0H1437V267.2H1438V261.1H1439V246.3H1440V224.5H1441V198.1H1442V169.9H1443V143.1H1444V120.6H1445V104.9H1446V97.7H1447V99.8H1448V111.0H1449V130.0H1450V154.8H1451V182.6H1452V210.4H1453V235.1H1454V254.0H1455V265.0H1456V266.9H1457V259.5H1458V243.6H1459V221.0H1460V194.2H1461V166.0H1462V139.6H1463V117.9H1464V103.3H1465V97.4H1466V100.8H1467V113.2H1468V133.2H1469V158.6H1470V186.5H1471V214.1H1472V238.1H1473V256.0H1474V265.8H1475V266.4H1476V257.8H1477V240.8H1478V217.5H1479V190.2H1480V162.1H1481V136.2H1482V115.4H1483V101.9H1484V97.3H1485V102.0H1486V115.6H1487V136.5H1488V162.4H1489V190.5H1490V217.7H1491V241.0H1492V257.9H1493V266.4H1494V265.7H1495V255.9H1496V237.9H1497V213.8H1498V186.3H1499V158.3H1500V132.9H1501V113.0H1502V100.7H1503V97.4H1504V103.4H1505V118.1H1506V139.8H1507V166.3H1508V194.4H1509V221.3H1510V243.8H1511V259.6H1512V266.9H1513V264.9H1514V253.8H1515V234.8H1516V210.1H1517V182.3H1518V154.5H1519V129.8H1520V110.8H1521V99.7H1522V97.7H1523V105.0H1524V120.8H1525V143.3H1526V170.2H1527V198.3H1528V224.8H1529V246.5H1530V261.2H1531V267.2H1532V263.9H1533V251.6H1534V231.7H1535V206.3H1536V178.3H1537V150.8H1538V126.7H1539V108.7H1540V98.9H1541V98.2H1542V106.7H1543V123.6H1544V146.9H1545V174.1H1546V202.2H1547V228.1H1548V249.0H1549V262.6H1550V267.3H1551V262.7H1552V249.2H1553V228.4H1554V202.5H1555V174.4H1556V147.1H1557V123.8H1558V106.8H1559V98.2H1560V98.8H1561V108.6H1562V126.5H1563V150.5H1564V178.1H1565V206.0H1566V231.4H1567V251.4H1568V263.8H1569V267.2H1570V261.3H1571V246.7H1572V225.0H1573V198.6H1574V170.4H1575V143.6H1576V121.0H1577V105.1H1578V97.7H1579V99.6H1580V110.6H1581V129.5H1582V154.2H1583V182.0H1584V209.8H1585V234.6H1586V253.6H1587V264.8H1588V266.9H1589V259.7H1590V244.0H1591V221.5H1592V194.7H1593V166.5H1594V140.1H1595V118.3H1596V103.5H1597V97.4H1598V100.6H1599V112.9H1600V132.7H1601V158.0H1602V186.0H1603V213.5H1604V237.7H1605V255.7H1606V265.7H1607V266.5H1608V258.0H1609V241.2H1610V218.0H1611V190.8H1612V162.7H1613V136.7H1614V115.7H1615V102.1H1616V97.3H1617V101.8H1618V115.2H1619V136.0H1620V161.8H1621V189.9H1622V217.2H1623V240.6H1624V257.6H1625V266.4H1626V265.9H1627V256.1H1628V238.3H1629V214.3H1630V186.8H1631V158.8H1632V133.4H1633V113.4H1634V100.9H1635V97.4H1636V103.2H1637V117.7H1638V139.4H1639V165.7H1640V193.9H1641V220.8H1642V243.4H1643V259.4H1644V266.9H1645V265.0H1646V254.1H1647V235.3H1648V210.6H1649V182.9H1650V155.0H1651V130.2H1652V111.1H1653V99.8H1654V97.6H1655V104.7H1656V120.4H1657V142.8H1658V169.6H1659V197.8H1660V224.3H1661V246.1H1662V261.0H1663V267.2H1664V264.0H1665V251.9H1666V232.1H1667V206.9H1668V178.9H1669V151.3H1670V127.1H1671V109.0H1672V99.0H1673V98.1H1674V106.4H1675V123.2H1676V146.4H1677V173.5H1678V201.7H1679V227.7H1680V248.7H1681V262.4H1682V267.3H1683V262.9H1684V249.6H1685V228.9H1686V203.0H1687V174.9H1688V147.7H1689V124.2H1690V107.1H1691V98.3H1692V98.7H1693V108.3H1694V126.1H1695V150.0H1696V177.5H1697V205.5H1698V231.0H1699V251.1H1700V263.6H1701V267.2H1702V261.5H1703V247.1H1704V225.5H1705V199.2H1706V171.0H1707V144.1H1708V121.4H1709V105.3H1710V97.8H1711V99.5H1712V110.3H1713V129.1H1714V153.7H1715V181.5H1716V209.3H1717V234.2H1718V253.3H1719V264.7H1720V267.0H1721V260.0H1722V244.4H1723V222.0H1724V195.3H1725V167.1H1726V140.6H1727V118.7H1728V103.7H1729V97.4H1730V100.5H1731V112.5H1732V132.2H1733V157.5H1734V185.4H1735V213.0H1736V237.2H1737V255.4H1738V265.6H1739V266.6H1740V258.3H1741V241.6H1742V218.5H1743V191.3H1744V163.2H1745V137.2H1746V116.1H1747V102.3H1748V97.3H1749V101.7H1750V114.9H1751V135.5H1752V161.3H1753V189.4H1754V216.7H1755V240.2H1756V257.4H1757V266.3H1758V266.0H1759V256.4H1760V238.7H1761V214.9H1762V187.4H1763V159.4H1764V133.9H1765V113.7H1766V101.1H1767V97.4H1768V103.0H1769V117.4H1770V138.9H1771V165.1H1772V193.3H1773V220.3H1774V243.1H1775V259.2H1776V266.8H1777V265.2H1778V254.4H1779V235.7H1780V211.2H1781V183.4H1782V155.6H1783V130.7H1784V111.4H1785V100.0H1786V97.6H1787V104.5H1788V120.0H1789V142.3H1790V169.0H1791V197.2H1792V223.8H1793V245.8H1794V260.8H1795V267.1H1796V264.2H1797V252.2H1798V232.6H1799V207.4H1800V179.5H1801V151.8H1802V127.6H1803V109.3H1804V99.1H1805V98.0H1806V106.2H1807V122.7H1808V145.9H1809V173.0H1810V201.1H1811V227.2H1812V248.3H1813V262.2H1814V267.3H1815V263.0H1816V249.9H1817V229.3H1818V203.6H1819V175.5H1820V148.2H1821V124.6H1822V107.4H1823V98.4H1824V98.6H1825V108.0H1826V125.6H1827V149.5H1828V176.9H1829V205.0H1830V230.5H1831V250.7H1832V263.5H1833V267.3H1834V261.7H1835V247.4H1836V226.0H1837V199.7H1838V171.6H1839V144.6H1840V121.7H1841V105.6H1842V97.8H1843V99.4H1844V110.0H1845V128.7H1846V153.2H1847V180.9H1848V208.8H1849V233.7H1850V253.0H1851V264.6H1852V267.0H1853V260.2H1854V244.8H1855V222.5H1856V195.8H1857V167.6H1858V141.1H1859V119.0H1860V103.9H1861V97.5H1862V100.3H1863V112.2H1864V131.8H1865V156.9H1866V184.8H1867V212.5H1868V236.8H1869V255.1H1870V265.5H1871V266.6H1872V258.5H1873V242.1H1874V219.0H1875V191.9H1876V163.8H1877V137.7H1878V116.5H1879V102.5H1880V97.3H1881V101.5H1882V114.5H1883V135.0H1884V160.7H1885V188.8H1886V216.2H1887V239.8H1888V257.1H1889V266.2H1890V266.1H1891V256.7H1892V239.2H1893V215.4H1894" fill="none" stroke="#e29a52" stroke-width="1.2" stroke-linejoin="round"/><rect x="10" y="149" width="1884" height="4" fill="#efe54c"/><rect x="38" y="181.2" width="1834" height="2" fill="#9cbc7c"/><path d="M145.0 315.0h1.6M145.0 330.1h1.6M145.0 345.2h1.6M145.0 360.4h1.6M145.0 375.5h1.6M145.0 390.6h1.6M145.0 405.7h1.6M145.0 420.8h1.6M145.0 435.9h1.6M145.0 451.1h1.6M145.0 466.2h1.6M145.0 481.3h1.6M145.0 496.4h1.6M145.0 511.5h1.6M145.0 526.7h1.6M145.0 541.8h1.6M145.0 556.9h1.6M145.0 572.0h1.6M145.0 587.1h1.6M145.0 602.2h1.6M145.0 617.4h1.6M145.0 632.5h1.6M145.0 647.6h1.6M145.0 662.7h1.6M145.0 677.8h1.6M145.0 693.0h1.6M145.0 708.1h1.6M145.0 723.2h1.6M145.0 738.3h1.6M145.0 753.4h1.6M145.0 768.5h1.6M145.0 783.7h1.6M145.0 798.8h1.6M145.0 813.9h1.6M145.0 829.0h1.6M145.0 844.1h1.6M145.0 859.2h1.6M145.0 874.4h1.6M145.0 889.5h1.6M145.0 904.6h1.6M145.0 919.7h1.6M145.0 934.8h1.6M145.0 950.0h1.6M145.0 965.1h1.6M145.0 980.2h1.6M145.0 995.3h1.6M145.0 1010.4h1.6M145.0 1025.5h1.6M145.0 1040.7h1.6M145.0 1055.8h1.6M333.6 315.0h1.6M333.6 330.1h1.6M333.6 345.2h1.6M333.6 360.4h1.6M333.6 375.5h1.6M333.6 390.6h1.6M333.6 405.7h1.6M333.6 420.8h1.6M333.6 435.9h1.6M333.6 451.1h1.6M333.6 466.2h1.6M333.6 481.3h1.6M333.6 496.4h1.6M333.6 511.5h1.6M333.6 526.7h1.6M333.6 541.8h1.6M333.6 556.9h1.6M333.6 572.0h1.6M333.6 587.1h1.6M333.6 602.2h1.6M333.6 617.4h1.6M333.6 632.5h1.6M333.6 647.6h1.6M333.6 662.7h1.6M333.6 677.8h1.6M333.6 693.0h1.6M333.6 708.1h1.6M333.6 723.2h1.6M333.6 738.3h1.6M333.6 753.4h1.6M333.6 768.5h1.6M333.6 783.7h1.6M333.6 798.8h1.6M333.6 813.9h1.6M333.6 829.0h1.6M333.6 844.1h1.6M333.6 859.2h1.6M333.6 874.4h1.6M333.6 889.5h1.6M333.6 904.6h1.6M333.6 919.7h1.6M333.6 934.8h1.6M333.6 950.0h1.6M333.6 965.1h1.6M333.6 980.2h1.6M333.6 995.3h1.6M333.6 1010.4h1.6M333.6 1025.5h1.6M333.6 1040.7h1.6M333.6 1055.8h1.6M522.2 315.0h1.6M522.2 330.1h1.6M522.2 345.2h1.6M522.2 360.4h1.6M522.2 375.5h1.6M522.2 390.6h1.6M522.2 405.7h1.6M522.2 420.8h1.6M522.2 435.9h1.6M522.2 451.1h1.6M522.2 466.2h1.6M522.2 481.3h1.6M522.2 496.4h1.6M522.2 511.5h1.6M522.2 526.7h1.6M522.2 541.8h1.6M522.2 556.9h1.6M522.2 572.0h1.6M522.2 587.1h1.6M522.2 602.2h1.6M522.2 617.4h1.6M522.2 632.5h1.6M522.2 647.6h1.6M522.2 662.7h1.6M522.2 677.8h1.6M522.2 693.0h1.6M522.2 708.1h1.6M522.2 723.2h1.6M522.2 738.3h1.6M522.2 753.4h1.6M522.2 768.5h1.6M522.2 783.7h1.6M522.2 798.8h1.6M522.2 813.9h1.6M522.2 829.0h1.6M522.2 844.1h1.6M522.2 859.2h1.6M522.2 874.4h1.6M522.2 889.5h1.6M522.2 904.6h1.6M522.2 919.7h1.6M522.2 934.8h1.6M522.2 950.0h1.6M522.2 965.1h1.6M522.2 980.2h1.6M522.2 995.3h1.6M522.2 1010.4h1.6M522.2 1025.5h1.6M522.2 1040.7h1.6M522.2 1055.8h1.6M710.7 315.0h1.6M710.7 330.1h1.6M710.7 345.2h1.6M710.7 360.4h1.6M710.7 375.5h1.6M710.7 390.6h1.6M710.7 405.7h1.6M710.7 420.8h1.6M710.7 435.9h1.6M710.7 451.1h1.6M710.7 466.2h1.6M710.7 481.3h1.6M710.7 496.4h1.6M710.7 511.5h1.6M710.7 526.7h1.6M710.7 541.8h1.6M710.7 556.9h1.6M710.7 572.0h1.6M710.7 587.1h1.6M710.7 602.2h1.6M710.7 617.4h1.6M710.7 632.5h1.6M710.7 647.6h1.6M710.7 662.7h1.6M710.7 677.8h1.6M710.7 693.0h1.6M710.7 708.1h1.6M710.7 723.2h1.6M710.7 738.3h1.6M710.7 753.4h1.6M710.7 768.5h1.6M710.7 783.7h1.6M710.7 798.8h1.6M710.7 813.9h1.6M710.7 829.0h1.6M710.7 844.1h1.6M710.7 859.2h1.6M710.7 874.4h1.6M710.7 889.5h1.6M710.7 904.6h1.6M710.7 919.7h1.6M710.7 934.8h1.6M710.7 950.0h1.6M710.7 965.1h1.6M710.7 980.2h1.6M710.7 995.3h1.6M710.7 1010.4h1.6M710.7 1025.5h1.6M710.7 1040.7h1.6M710.7 1055.8h1.6M899.3 315.0h1.6M899.3 330.1h1.6M899.3 345.2h1.6M899.3 360.4h1.6M899.3 375.5h1.6M899.3 390.6h1.6M899.3 405.7h1.6M899.3 420.8h1.6M899.3 435.9h1.6M899.3 451.1h1.6M899.3 466.2h1.6M899.3 481.3h1.6M899.3 496.4h1.6M899.3 511.5h1.6M899.3 526.7h1.6M899.3 541.8h1.6M899.3 556.9h1.6M899.3 572.0h1.6M899.3 587.1h1.6M899.3 602.2h1.6M899.3 617.4h1.6M899.3 632.5h1.6M899.3 647.6h1.6M899.3 662.7h1.6M899.3 677.8h1.6M899.3 693.0h1.6M899.3 708.1h1.6M899.3 723.2h1.6M899.3 738.3h1.6M899.3 753.4h1.6M899.3 768.5h1.6M899.3 783.7h1.6M899.3 798.8h1.6M899.3 813.9h1.6M899.3 829.0h1.6M899.3 844.1h1.6M899.3 859.2h1.6M899.3 874.4h1.6M899.3 889.5h1.6M899.3 904.6h1.6M899.3 919.7h1.6M899.3 934.8h1.6M899.3 950.0h1.6M899.3 965.1h1.6M899.3 980.2h1.6M899.3 995.3h1.6M899.3 1010.4h1.6M899.3 1025.5h1.6M899.3 1040.7h1.6M899.3 1055.8h1.6M1087.9 315.0h1.6M1087.9 330.1h1.6M1087.9 345.2h1.6M1087.9 360.4h1.6M1087.9 375.5h1.6M1087.9 390.6h1.6M1087.9 405.7h1.6M1087.9 420.8h1.6M1087.9 435.9h1.6M1087.9 451.1h1.6M1087.9 466.2h1.6M1087.9 481.3h1.6M1087.9 496.4h1.6M1087.9 511.5h1.6M1087.9 526.7h1.6M1087.9 541.8h1.6M1087.9 556.9h1.6M1087.9 572.0h1.6M1087.9 587.1h1.6M1087.9 602.2h1.6M1087.9 617.4h1.6M1087.9 632.5h1.6M1087.9 647.6h1.6M1087.9 662.7h1.6M1087.9 677.8h1.6M1087.9 693.0h1.6M1087.9 708.1h1.6M1087.9 723.2h1.6M1087.9 738.3h1.6M1087.9 753.4h1.6M1087.9 768.5h1.6M1087.9 783.7h1.6M1087.9 798.8h1.6M1087.9 813.9h1.6M1087.9 829.0h1.6M1087.9 844.1h1.6M1087.9 859.2h1.6M1087.9 874.4h1.6M1087.9 889.5h1.6M1087.9 904.6h1.6M1087.9 919.7h1.6M1087.9 934.8h1.6M1087.9 950.0h1.6M1087.9 965.1h1.6M1087.9 980.2h1.6M1087.9 995.3h1.6M1087.9 1010.4h1.6M1087.9 1025.5h1.6M1087.9 1040.7h1.6M1087.9 1055.8h1.6M1276.5 315.0h1.6M1276.5 330.1h1.6M1276.5 345.2h1.6M1276.5 360.4h1.6M1276.5 375.5h1.6M1276.5 390.6h1.6M1276.5 405.7h1.6M1276.5 420.8h1.6M1276.5 435.9h1.6M1276.5 451.1h1.6M1276.5 466.2h1.6M1276.5 481.3h1.6M1276.5 496.4h1.6M1276.5 511.5h1.6M1276.5 526.7h1.6M1276.5 541.8h1.6M1276.5 556.9h1.6M1276.5 572.0h1.6M1276.5 587.1h1.6M1276.5 602.2h1.6M1276.5 617.4h1.6M1276.5 632.5h1.6M1276.5 647.6h1.6M1276.5 662.7h1.6M1276.5 677.8h1.6M1276.5 693.0h1.6M1276.5 708.1h1.6M1276.5 723.2h1.6M1276.5 738.3h1.6M1276.5 753.4h1.6M1276.5 768.5h1.6M1276.5 783.7h1.6M1276.5 798.8h1.6M1276.5 813.9h1.6M1276.5 829.0h1.6M1276.5 844.1h1.6M1276.5 859.2h1.6M1276.5 874.4h1.6M1276.5 889.5h1.6M1276.5 904.6h1.6M1276.5 919.7h1.6M1276.5 934.8h1.6M1276.5 950.0h1.6M1276.5 965.1h1.6M1276.5 980.2h1.6M1276.5 995.3h1.6M1276.5 1010.4h1.6M1276.5 1025.5h1.6M1276.5 1040.7h1.6M1276.5 1055.8h1.6M1465.1 315.0h1.6M1465.1 330.1h1.6M1465.1 345.2h1.6M1465.1 360.4h1.6M1465.1 375.5h1.6M1465.1 390.6h1.6M1465.1 405.7h1.6M1465.1 420.8h1.6M1465.1 435.9h1.6M1465.1 451.1h1.6M1465.1 466.2h1.6M1465.1 481.3h1.6M1465.1 496.4h1.6M1465.1 511.5h1.6M1465.1 526.7h1.6M1465.1 541.8h1.6M1465.1 556.9h1.6M1465.1 572.0h1.6M1465.1 587.1h1.6M1465.1 602.2h1.6M1465.1 617.4h1.6M1465.1 632.5h1.6M1465.1 647.6h1.6M1465.1 662.7h1.6M1465.1 677.8h1.6M1465.1 693.0h1.6M1465.1 708.1h1.6M1465.1 723.2h1.6M1465.1 738.3h1.6M1465.1 753.4h1.6M1465.1 768.5h1.6M1465.1 783.7h1.6M1465.1 798.8h1.6M1465.1 813.9h1.6M1465.1 829.0h1.6M1465.1 844.1h1.6M1465.1 859.2h1.6M1465.1 874.4h1.6M1465.1 889.5h1.6M1465.1 904.6h1.6M1465.1 919.7h1.6M1465.1 934.8h1.6M1465.1 950.0h1.6M1465.1 965.1h1.6M1465.1 980.2h1.6M1465.1 995.3h1.6M1465.1 1010.4h1.6M1465.1 1025.5h1.6M1465.1 1040.7h1.6M1465.1 1055.8h1.6M1653.6 315.0h1.6M1653.6 330.1h1.6M1653.6 345.2h1.6M1653.6 360.4h1.6M1653.6 375.5h1.6M1653.6 390.6h1.6M1653.6 405.7h1.6M1653.6 420.8h1.6M1653.6 435.9h1.6M1653.6 451.1h1.6M1653.6 466.2h1.6M1653.6 481.3h1.6M1653.6 496.4h1.6M1653.6 511.5h1.6M1653.6 526.7h1.6M1653.6 541.8h1.6M1653.6 556.9h1.6M1653.6 572.0h1.6M1653.6 587.1h1.6M1653.6 602.2h1.6M1653.6 617.4h1.6M1653.6 632.5h1.6M1653.6 647.6h1.6M1653.6 662.7h1.6M1653.6 677.8h1.6M1653.6 693.0h1.6M1653.6 708.1h1.6M1653.6 723.2h1.6M1653.6 738.3h1.6M1653.6 753.4h1.6M1653.6 768.5h1.6M1653.6 783.7h1.6M1653.6 798.8h1.6M1653.6 813.9h1.6M1653.6 829.0h1.6M1653.6 844.1h1.6M1653.6 859.2h1.6M1653.6 874.4h1.6M1653.6 889.5h1.6M1653.6 904.6h1.6M1653.6 919.7h1.6M1653.6 934.8h1.6M1653.6 950.0h1.6M1653.6 965.1h1.6M1653.6 980.2h1.6M1653.6 995.3h1.6M1653.6 1010.4h1.6M1653.6 1025.5h1.6M1653.6 1040.7h1.6M1653.6 1055.8h1.6M1842.2 315.0h1.6M1842.2 330.1h1.6M1842.2 345.2h1.6M1842.2 360.4h1.6M1842.2 375.5h1.6M1842.2 390.6h1.6M1842.2 405.7h1.6M1842.2 420.8h1.6M1842.2 435.9h1.6M1842.2 451.1h1.6M1842.2 466.2h1.6M1842.2 481.3h1.6M1842.2 496.4h1.6M1842.2 511.5h1.6M1842.2 526.7h1.6M1842.2 541.8h1.6M1842.2 556.9h1.6M1842.2 572.0h1.6M1842.2 587.1h1.6M1842.2 602.2h1.6M1842.2 617.4h1.6M1842.2 632.5h1.6M1842.2 647.6h1.6M1842.2 662.7h1.6M1842.2 677.8h1.6M1842.2 693.0h1.6M1842.2 708.1h1.6M1842.2 723.2h1.6M1842.2 738.3h1.6M1842.2 753.4h1.6M1842.2 768.5h1.6M1842.2 783.7h1.6M1842.2 798.8h1.6M1842.2 813.9h1.6M1842.2 829.0h1.6M1842.2 844.1h1.6M1842.2 859.2h1.6M1842.2 874.4h1.6M1842.2 889.5h1.6M1842.2 904.6h1.6M1842.2 919.7h1.6M1842.2 934.8h1.6M1842.2 950.0h1.6M1842.2 965.1h1.6M1842.2 980.2h1.6M1842.2 995.3h1.6M1842.2 1010.4h1.6M1842.2 1025.5h1.6M1842.2 1040.7h1.6M1842.2 1055.8h1.6M31.9 315.0h1.6M69.6 315.0h1.6M107.3 315.0h1.6M145.0 315.0h1.6M182.7 315.0h1.6M220.4 315.0h1.6M258.1 315.0h1.6M295.9 315.0h1.6M333.6 315.0h1.6M371.3 315.0h1.6M409.0 315.0h1.6M446.7 315.0h1.6M484.4 315.0h1.6M522.2 315.0h1.6M559.9 315.0h1.6M597.6 315.0h1.6M635.3 315.0h1.6M673.0 315.0h1.6M710.7 315.0h1.6M748.5 315.0h1.6M786.2 315.0h1.6M823.9 315.0h1.6M861.6 315.0h1.6M899.3 315.0h1.6M937.0 315.0h1.6M974.8 315.0h1.6M1012.5 315.0h1.6M1050.2 315.0h1.6M1087.9 315.0h1.6M1125.6 315.0h1.6M1163.3 315.0h1.6M1201.0 315.0h1.6M1238.8 315.0h1.6M1276.5 315.0h1.6M1314.2 315.0h1.6M1351.9 315.0h1.6M1389.6 315.0h1.6M1427.3 315.0h1.6M1465.1 315.0h1.6M1502.8 315.0h1.6M1540.5 315.0h1.6M1578.2 315.0h1.6M1615.9 315.0h1.6M1653.6 315.0h1.6M1691.4 315.0h1.6M1729.1 315.0h1.6M1766.8 315.0h1.6M1804.5 315.0h1.6M1842.2 315.0h1.6M1879.9 315.0h1.6M31.9 390.6h1.6M69.6 390.6h1.6M107.3 390.6h1.6M145.0 390.6h1.6M182.7 390.6h1.6M220.4 390.6h1.6M258.1 390.6h1.6M295.9 390.6h1.6M333.6 390.6h1.6M371.3 390.6h1.6M409.0 390.6h1.6M446.7 390.6h1.6M484.4 390.6h1.6M522.2 390.6h1.6M559.9 390.6h1.6M597.6 390.6h1.6M635.3 390.6h1.6M673.0 390.6h1.6M710.7 390.6h1.6M748.5 390.6h1.6M786.2 390.6h1.6M823.9 390.6h1.6M861.6 390.6h1.6M899.3 390.6h1.6M937.0 390.6h1.6M974.8 390.6h1.6M1012.5 390.6h1.6M1050.2 390.6h1.6M1087.9 390.6h1.6M1125.6 390.6h1.6M1163.3 390.6h1.6M1201.0 390.6h1.6M1238.8 390.6h1.6M1276.5 390.6h1.6M1314.2 390.6h1.6M1351.9 390.6h1.6M1389.6 390.6h1.6M1427.3 390.6h1.6M1465.1 390.6h1.6M1502.8 390.6h1.6M1540.5 390.6h1.6M1578.2 390.6h1.6M1615.9 390.6h1.6M1653.6 390.6h1.6M1691.4 390.6h1.6M1729.1 390.6h1.6M1766.8 390.6h1.6M1804.5 390.6h1.6M1842.2 390.6h1.6M1879.9 390.6h1.6M31.9 466.2h1.6M69.6 466.2h1.6M107.3 466.2h1.6M145.0 466.2h1.6M182.7 466.2h1.6M220.4 466.2h1.6M258.1 466.2h1.6M295.9 466.2h1.6M333.6 466.2h1.6M371.3 466.2h1.6M409.0 466.2h1.6M446.7 466.2h1.6M484.4 466.2h1.6M522.2 466.2h1.6M559.9 466.2h1.6M597.6 466.2h1.6M635.3 466.2h1.6M673.0 466.2h1.6M710.7 466.2h1.6M748.5 466.2h1.6M786.2 466.2h1.6M823.9 466.2h1.6M861.6 466.2h1.6M899.3 466.2h1.6M937.0 466.2h1.6M974.8 466.2h1.6M1012.5 466.2h1.6M1050.2 466.2h1.6M1087.9 466.2h1.6M1125.6 466.2h1.6M1163.3 466.2h1.6M1201.0 466.2h1.6M1238.8 466.2h1.6M1276.5 466.2h1.6M1314.2 466.2h1.6M1351.9 466.2h1.6M1389.6 466.2h1.6M1427.3 466.2h1.6M1465.1 466.2h1.6M1502.8 466.2h1.6M1540.5 466.2h1.6M1578.2 466.2h1.6M1615.9 466.2h1.6M1653.6 466.2h1.6M1691.4 466.2h1.6M1729.1 466.2h1.6M1766.8 466.2h1.6M1804.5 466.2h1.6M1842.2 466.2h1.6M1879.9 466.2h1.6M31.9 541.8h1.6M69.6 541.8h1.6M107.3 541.8h1.6M145.0 541.8h1.6M182.7 541.8h1.6M220.4 541.8h1.6M258.1 541.8h1.6M295.9 541.8h1.6M333.6 541.8h1.6M371.3 541.8h1.6M409.0 541.8h1.6M446.7 541.8h1.6M484.4 541.8h1.6M522.2 541.8h1.6M559.9 541.8h1.6M597.6 541.8h1.6M635.3 541.8h1.6M673.0 541.8h1.6M710.7 541.8h1.6M748.5 541.8h1.6M786.2 541.8h1.6M823.9 541.8h1.6M861.6 541.8h1.6M899.3 541.8h1.6M937.0 541.8h1.6M974.8 541.8h1.6M1012.5 541.8h1.6M1050.2 541.8h1.6M1087.9 541.8h1.6M1125.6 541.8h1.6M1163.3 541.8h1.6M1201.0 541.8h1.6M1238.8 541.8h1.6M1276.5 541.8h1.6M1314.2 541.8h1.6M1351.9 541.8h1.6M1389.6 541.8h1.6M1427.3 541.8h1.6M1465.1 541.8h1.6M1502.8 541.8h1.6M1540.5 541.8h1.6M1578.2 541.8h1.6M1615.9 541.8h1.6M1653.6 541.8h1.6M1691.4 541.8h1.6M1729.1 541.8h1.6M1766.8 541.8h1.6M1804.5 541.8h1.6M1842.2 541.8h1.6M1879.9 541.8h1.6M31.9 617.4h1.6M69.6 617.4h1.6M107.3 617.4h1.6M145.0 617.4h1.6M182.7 617.4h1.6M220.4 617.4h1.6M258.1 617.4h1.6M295.9 617.4h1.6M333.6 617.4h1.6M371.3 617.4h1.6M409.0 617.4h1.6M446.7 617.4h1.6M484.4 617.4h1.6M522.2 617.4h1.6M559.9 617.4h1.6M597.6 617.4h1.6M635.3 617.4h1.6M673.0 617.4h1.6M710.7 617.4h1.6M748.5 617.4h1.6M786.2 617.4h1.6M823.9 617.4h1.6M861.6 617.4h1.6M899.3 617.4h1.6M937.0 617.4h1.6M974.8 617.4h1.6M1012.5 617.4h1.6M1050.2 617.4h1.6M1087.9 617.4h1.6M1125.6 617.4h1.6M1163.3 617.4h1.6M1201.0 617.4h1.6M1238.8 617.4h1.6M1276.5 617.4h1.6M1314.2 617.4h1.6M1351.9 617.4h1.6M1389.6 617.4h1.6M1427.3 617.4h1.6M1465.1 617.4h1.6M1502.8 617.4h1.6M1540.5 617.4h1.6M1578.2 617.4h1.6M1615.9 617.4h1.6M1653.6 617.4h1.6M1691.4 617.4h1.6M1729.1 617.4h1.6M1766.8 617.4h1.6M1804.5 617.4h1.6M1842.2 617.4h1.6M1879.9 617.4h1.6M31.9 693.0h1.6M69.6 693.0h1.6M107.3 693.0h1.6M145.0 693.0h1.6M182.7 693.0h1.6M220.4 693.0h1.6M258.1 693.0h1.6M295.9 693.0h1.6M333.6 693.0h1.6M371.3 693.0h1.6M409.0 693.0h1.6M446.7 693.0h1.6M484.4 693.0h1.6M522.2 693.0h1.6M559.9 693.0h1.6M597.6 693.0h1.6M635.3 693.0h1.6M673.0 693.0h1.6M710.7 693.0h1.6M748.5 693.0h1.6M786.2 693.0h1.6M823.9 693.0h1.6M861.6 693.0h1.6M899.3 693.0h1.6M937.0 693.0h1.6M974.8 693.0h1.6M1012.5 693.0h1.6M1050.2 693.0h1.6M1087.9 693.0h1.6M1125.6 693.0h1.6M1163.3 693.0h1.6M1201.0 693.0h1.6M1238.8 693.0h1.6M1276.5 693.0h1.6M1314.2 693.0h1.6M1351.9 693.0h1.6M1389.6 693.0h1.6M1427.3 693.0h1.6M1465.1 693.0h1.6M1502.8 693.0h1.6M1540.5 693.0h1.6M1578.2 693.0h1.6M1615.9 693.0h1.6M1653.6 693.0h1.6M1691.4 693.0h1.6M1729.1 693.0h1.6M1766.8 693.0h1.6M1804.5 693.0h1.6M1842.2 693.0h1.6M1879.9 693.0h1.6M31.9 768.5h1.6M69.6 768.5h1.6M107.3 768.5h1.6M145.0 768.5h1.6M182.7 768.5h1.6M220.4 768.5h1.6M258.1 768.5h1.6M295.9 768.5h1.6M333.6 768.5h1.6M371.3 768.5h1.6M409.0 768.5h1.6M446.7 768.5h1.6M484.4 768.5h1.6M522.2 768.5h1.6M559.9 768.5h1.6M597.6 768.5h1.6M635.3 768.5h1.6M673.0 768.5h1.6M710.7 768.5h1.6M748.5 768.5h1.6M786.2 768.5h1.6M823.9 768.5h1.6M861.6 768.5h1.6M899.3 768.5h1.6M937.0 768.5h1.6M974.8 768.5h1.6M1012.5 768.5h1.6M1050.2 768.5h1.6M1087.9 768.5h1.6M1125.6 768.5h1.6M1163.3 768.5h1.6M1201.0 768.5h1.6M1238.8 768.5h1.6M1276.5 768.5h1.6M1314.2 768.5h1.6M1351.9 768.5h1.6M1389.6 768.5h1.6M1427.3 768.5h1.6M1465.1 768.5h1.6M1502.8 768.5h1.6M1540.5 768.5h1.6M1578.2 768.5h1.6M1615.9 768.5h1.6M1653.6 768.5h1.6M1691.4 768.5h1.6M1729.1 768.5h1.6M1766.8 768.5h1.6M1804.5 768.5h1.6M1842.2 768.5h1.6M1879.9 768.5h1.6M31.9 844.1h1.6M69.6 844.1h1.6M107.3 844.1h1.6M145.0 844.1h1.6M182.7 844.1h1.6M220.4 844.1h1.6M258.1 844.1h1.6M295.9 844.1h1.6M333.6 844.1h1.6M371.3 844.1h1.6M409.0 844.1h1.6M446.7 844.1h1.6M484.4 844.1h1.6M522.2 844.1h1.6M559.9 844.1h1.6M597.6 844.1h1.6M635.3 844.1h1.6M673.0 844.1h1.6M710.7 844.1h1.6M748.5 844.1h1.6M786.2 844.1h1.6M823.9 844.1h1.6M861.6 844.1h1.6M899.3 844.1h1.6M937.0 844.1h1.6M974.8 844.1h1.6M1012.5 844.1h1.6M1050.2 844.1h1.6M1087.9 844.1h1.6M1125.6 844.1h1.6M1163.3 844.1h1.6M1201.0 844.1h1.6M1238.8 844.1h1.6M1276.5 844.1h1.6M1314.2 844.1h1.6M1351.9 844.1h1.6M1389.6 844.1h1.6M1427.3 844.1h1.6M1465.1 844.1h1.6M1502.8 844.1h1.6M1540.5 844.1h1.6M1578.2 844.1h1.6M1615.9 844.1h1.6M1653.6 844.1h1.6M1691.4 844.1h1.6M1729.1 844.1h1.6M1766.8 844.1h1.6M1804.5 844.1h1.6M1842.2 844.1h1.6M1879.9 844.1h1.6M31.9 919.7h1.6M69.6 919.7h1.6M107.3 919.7h1.6M145.0 919.7h1.6M182.7 919.7h1.6M220.4 919.7h1.6M258.1 919.7h1.6M295.9 919.7h1.6M333.6 919.7h1.6M371.3 919.7h1.6M409.0 919.7h1.6M446.7 919.7h1.6M484.4 919.7h1.6M522.2 919.7h1.6M559.9 919.7h1.6M597.6 919.7h1.6M635.3 919.7h1.6M673.0 919.7h1.6M710.7 919.7h1.6M748.5 919.7h1.6M786.2 919.7h1.6M823.9 919.7h1.6M861.6 919.7h1.6M899.3 919.7h1.6M937.0 919.7h1.6M974.8 919.7h1.6M1012.5 919.7h1.6M1050.2 919.7h1.6M1087.9 919.7h1.6M1125.6 919.7h1.6M1163.3 919.7h1.6M1201.0 919.7h1.6M1238.8 919.7h1.6M1276.5 919.7h1.6M1314.2 919.7h1.6M1351.9 919.7h1.6M1389.6 919.7h1.6M1427.3 919.7h1.6M1465.1 919.7h1.6M1502.8 919.7h1.6M1540.5 919.7h1.6M1578.2 919.7h1.6M1615.9 919.7h1.6M1653.6 919.7h1.6M1691.4 919.7h1.6M1729.1 919.7h1.6M1766.8 919.7h1.6M1804.5 919.7h1.6M1842.2 919.7h1.6M1879.9 919.7h1.6M31.9 995.3h1.6M69.6 995.3h1.6M107.3 995.3h1.6M145.0 995.3h1.6M182.7 995.3h1.6M220.4 995.3h1.6M258.1 995.3h1.6M295.9 995.3h1.6M333.6 995.3h1.6M371.3 995.3h1.6M409.0 995.3h1.6M446.7 995.3h1.6M484.4 995.3h1.6M522.2 995.3h1.6M559.9 995.3h1.6M597.6 995.3h1.6M635.3 995.3h1.6M673.0 995.3h1.6M710.7 995.3h1.6M748.5 995.3h1.6M786.2 995.3h1.6M823.9 995.3h1.6M861.6 995.3h1.6M899.3 995.3h1.6M937.0 995.3h1.6M974.8 995.3h1.6M1012.5 995.3h1.6M1050.2 995.3h1.6M1087.9 995.3h1.6M1125.6 995.3h1.6M1163.3 995.3h1.6M1201.0 995.3h1.6M1238.8 995.3h1.6M1276.5 995.3h1.6M1314.2 995.3h1.6M1351.9 995.3h1.6M1389.6 995.3h1.6M1427.3 995.3h1.6M1465.1 995.3h1.6M1502.8 995.3h1.6M1540.5 995.3h1.6M1578.2 995.3h1.6M1615.9 995.3h1.6M1653.6 995.3h1.6M1691.4 995.3h1.6M1729.1 995.3h1.6M1766.8 995.3h1.6M1804.5 995.3h1.6M1842.2 995.3h1.6M1879.9 995.3h1.6" stroke="#747474" stroke-width="1.5" fill="none"/><line x1="60" y1="693.3" x2="1870" y2="693.3" stroke="#d0d0d0" stroke-width="1.8" stroke-dasharray="5.5 5.3"/><polyline points="58.0,690.4 59.5,690.2 61.0,690.8 62.5,690.1 64.0,690.6 65.5,690.4 67.0,690.1 68.5,690.6 70.0,690.0 71.5,690.5 73.0,690.1 74.5,690.1 76.0,690.5 77.5,691.0 79.0,690.1 80.5,690.3 82.0,690.8 83.5,691.1 85.0,690.7 86.5,690.5 88.0,691.2 89.5,690.1 91.0,691.0 92.5,690.3 94.0,690.2 95.5,690.1 97.0,690.4 98.5,691.0 100.0,690.2 101.5,690.7 103.0,690.8 104.5,690.4 106.0,690.7 107.5,690.1 109.0,690.1 110.5,690.2 112.0,690.8 113.5,690.5 115.0,690.4 116.5,690.7 118.0,690.5 119.5,690.4 121.0,691.0 122.5,690.8 124.0,690.3 125.5,690.7 127.0,690.6 128.5,691.1 130.0,690.9 131.5,690.3 133.0,691.2 134.5,690.1 136.0,690.5 137.5,690.9 139.0,690.2 140.5,690.6 142.0,690.0 143.5,690.8 145.0,690.9 146.5,690.7 148.0,691.1 149.5,690.4 151.0,690.8 152.5,690.7 154.0,690.7 155.5,690.5 157.0,691.0 158.5,691.1 160.0,690.6 161.5,690.8 163.0,690.1 164.5,690.8 166.0,690.8 167.5,691.2 169.0,691.0 170.5,690.3 172.0,690.5 173.5,690.8 175.0,690.0 176.5,690.6 178.0,690.2 179.5,690.1 181.0,690.1 182.5,690.9 184.0,690.2 185.5,690.3 187.0,690.5 188.5,691.0 190.0,690.1 191.5,690.5 193.0,690.7 194.5,691.1 196.0,691.0 197.5,691.0 199.0,690.3 200.5,690.5 202.0,690.4 203.5,691.1 205.0,691.1 206.5,690.2 208.0,690.2 209.5,690.3 211.0,690.3 212.5,690.6 214.0,690.7 215.5,690.3 217.0,690.0 218.5,690.5 220.0,690.4 221.5,690.7 223.0,691.1 224.5,690.8 226.0,690.6 227.5,690.7 229.0,690.8 230.5,690.1 232.0,691.1 233.5,690.9 235.0,691.0 236.5,691.0 238.0,690.5 239.5,690.5 241.0,690.1 242.5,690.8 244.0,690.1 245.5,690.1 247.0,690.3 248.5,690.2 250.0,690.4 251.5,690.1 253.0,690.0 254.5,690.2 256.0,690.1 257.5,690.4 259.0,690.0 260.5,691.0 262.0,690.7 263.5,690.2 265.0,690.3 266.5,690.4 268.0,690.4 269.5,690.1 271.0,691.0 272.5,691.2 274.0,690.6 275.5,690.6 277.0,690.1 278.5,690.1 280.0,690.4 281.5,690.3 283.0,691.0 284.5,690.2 286.0,690.0 287.5,691.1 289.0,690.6 290.5,690.2 292.0,690.7 293.5,690.0 295.0,690.6 296.5,691.2 298.0,691.0 299.5,690.8 301.0,690.3 302.5,690.4 304.0,690.2 305.5,690.9 307.0,690.6 308.5,690.9 310.0,690.4 311.5,690.3 313.0,691.0 314.5,691.2 316.0,691.0 317.5,691.0 319.0,691.0 320.5,690.9 322.0,690.3 323.5,690.6 325.0,690.4 326.5,690.0 328.0,690.0 329.5,690.3 331.0,690.3 332.5,690.8 334.0,691.1 335.5,690.5 337.0,691.1 338.5,691.2 340.0,691.1 341.5,690.4 343.0,690.3 344.5,690.3 346.0,690.2 347.5,690.2 349.0,690.7 350.5,691.1 352.0,691.0 353.5,690.6 355.0,690.8 356.5,691.0 358.0,690.1 359.5,690.8 361.0,691.1 362.5,690.9 364.0,690.9 365.5,690.6 367.0,690.2 368.5,690.9 370.0,690.4 371.5,691.0 373.0,691.2 374.5,690.5 376.0,690.5 377.5,691.1 379.0,690.9 380.5,690.2 382.0,690.2 383.5,690.2 385.0,691.1 386.5,691.0 388.0,690.2 389.5,691.0 391.0,691.2 392.5,690.8 394.0,690.4 395.5,690.7 397.0,690.2 398.5,690.0 400.0,691.2 401.5,690.8 403.0,690.6 404.5,691.1 406.0,690.5 407.5,691.0 409.0,691.0 410.5,690.3 412.0,690.3 413.5,690.4 415.0,690.3 416.5,690.7 418.0,690.3 419.5,690.5 421.0,690.2 422.5,691.1 424.0,690.4 425.5,690.5 427.0,690.7 428.5,691.1 430.0,690.5 431.5,691.1 433.0,690.6 434.5,690.6 436.0,690.6 437.5,690.0 439.0,690.5 440.5,690.2 442.0,690.0 443.5,691.0 445.0,690.2 446.5,690.6 448.0,690.9 449.5,690.7 451.0,690.4 452.5,690.6 454.0,690.7 455.5,690.9 457.0,690.1 458.5,690.7 460.0,690.3 461.5,690.3 463.0,690.9 464.5,690.6 466.0,690.7 467.5,690.9 469.0,691.1 470.5,690.5 472.0,690.7 473.5,690.6 475.0,690.6 476.5,690.8 478.0,690.5 479.5,690.6 481.0,690.6 482.5,691.1 484.0,690.8 485.5,691.1 487.0,691.1 488.5,690.3 490.0,690.7 491.5,691.1 493.0,691.0 494.5,690.2 496.0,690.1 497.5,690.5 499.0,690.1 500.5,690.3 502.0,690.1 503.5,690.8 505.0,690.9 506.5,691.1 508.0,690.2 509.5,690.9 511.0,690.8 512.5,690.2 514.0,691.1 515.5,691.2 517.0,690.3 518.5,691.1 520.0,690.5 521.5,690.6 523.0,691.2 524.5,691.0 526.0,690.2 527.5,690.5 529.0,690.6 530.5,690.4 532.0,690.2 533.5,690.4 535.0,690.9 536.5,690.0 538.0,690.7 539.5,690.5 541.0,690.0 542.5,690.4 544.0,690.7 545.5,690.6 547.0,690.1 548.5,691.2 550.0,690.9 551.5,691.2 553.0,690.1 554.5,690.3 556.0,690.0 557.5,690.9 559.0,690.3 560.5,690.2 562.0,690.5 563.5,691.1 565.0,691.0 566.5,690.3 568.0,690.2 569.5,691.1 571.0,690.7 572.5,690.8 574.0,690.1 575.5,690.1 577.0,690.8 578.5,690.5 580.0,690.1 581.5,691.1 583.0,690.8 584.5,691.0 586.0,690.1 587.5,691.0 589.0,690.1 590.5,691.0 592.0,690.5 593.5,690.4 595.0,690.7 596.5,691.1 598.0,690.3 599.5,690.2 601.0,690.6 602.5,690.3 604.0,690.1 605.5,690.2 607.0,690.1 608.5,690.2 610.0,690.4 611.5,690.4 613.0,690.9 614.5,690.3 616.0,690.6 617.5,690.2 619.0,690.4 620.5,690.0 622.0,690.3 623.5,690.0 625.0,690.9 626.5,690.7 628.0,690.2 629.5,690.6 631.0,691.1 632.5,690.1 634.0,691.0 635.5,690.5 637.0,690.6 638.5,691.0 640.0,690.5 641.5,690.6 643.0,690.8 644.5,691.2 646.0,690.4 647.5,691.0 649.0,690.8 650.5,690.8 652.0,690.5 653.5,690.4 655.0,690.1 656.5,690.2 658.0,690.1 659.5,690.9 661.0,690.3 662.5,690.2 664.0,690.1 665.5,691.0 667.0,691.0 668.5,690.8 670.0,690.3 671.5,690.3 673.0,690.4 674.5,690.6 676.0,690.2 677.5,690.5 679.0,690.3 680.5,691.2 682.0,691.2 683.5,690.7 685.0,690.3 686.5,691.2 688.0,690.4 689.5,690.4 691.0,690.0 692.5,690.5 694.0,690.6 695.5,690.6 697.0,690.2 698.5,690.6 700.0,690.0 701.5,690.3 703.0,690.1 704.5,690.5 706.0,690.1 707.5,690.0 709.0,690.4 710.5,690.3 712.0,690.7 713.5,690.6 715.0,690.9 716.5,690.8 718.0,690.9 719.5,691.1 721.0,690.5 722.5,690.4 724.0,691.2 725.5,690.2 727.0,690.9 728.5,690.8 730.0,690.1 731.5,691.0 733.0,691.1 734.5,690.8 736.0,690.9 737.5,691.0 739.0,690.2 740.5,690.6 742.0,690.6 743.5,691.0 745.0,691.0 746.5,691.0 748.0,690.7 749.5,691.1 751.0,690.8 752.5,690.8 754.0,690.3 755.5,690.0 757.0,690.2 758.5,690.4 760.0,690.1 761.5,691.0 763.0,690.7 764.5,690.8 766.0,690.8 767.5,690.8 769.0,690.6 770.5,690.0 772.0,691.0 773.5,690.9 775.0,690.6 776.5,690.6 778.0,690.8 779.5,690.1 781.0,690.9 782.5,690.3 784.0,690.1 785.5,690.3 787.0,690.9 788.5,690.2 790.0,690.9 791.5,691.2 793.0,690.6 794.5,690.5 796.0,690.6 797.5,690.8 799.0,690.9 800.5,690.7 802.0,690.8 803.5,690.1 805.0,690.2 806.5,690.3 808.0,690.9 809.5,690.4 811.0,690.7 812.5,690.0 814.0,690.1 815.5,690.3 817.0,690.8 818.5,690.8 820.0,690.8 821.5,690.3 823.0,690.6 824.5,690.6 826.0,690.6 827.5,690.1 829.0,691.1 830.5,690.2 832.0,691.2 833.5,691.1 835.0,690.0 836.5,690.6 838.0,691.0 839.5,691.2 841.0,690.5 842.5,690.3 844.0,690.3 845.5,691.1 847.0,690.3 848.5,690.7 850.0,690.2 851.5,690.6 853.0,691.1 854.5,690.2 856.0,691.0 857.5,690.6 859.0,691.1 860.5,690.8 862.0,690.3 863.5,691.1 865.0,690.6 866.5,690.0 868.0,690.0 869.5,690.6 871.0,690.5 872.5,690.4 874.0,690.2 875.5,690.4 877.0,690.4 878.5,691.0 880.0,690.0 881.5,690.9 883.0,691.0 884.5,690.1 886.0,691.1 887.5,690.9 889.0,691.1 890.5,690.3 892.0,690.4 893.5,690.5 895.0,691.2 896.5,690.7 898.0,690.4 899.5,690.5 901.0,690.3 902.5,690.1 904.0,690.1 905.5,691.0 907.0,690.3 908.5,691.1 910.0,690.3 911.5,690.3 913.0,690.6 914.5,690.2 916.0,690.4 917.5,691.1 919.0,691.1 920.5,691.0 922.0,690.8 923.5,691.1 925.0,691.1 926.5,690.7 928.0,690.9 929.5,690.1 931.0,690.9 932.5,690.5 934.0,690.9 935.5,690.8 937.0,690.3 938.5,690.1 940.0,691.1 941.5,690.2 943.0,690.6 944.5,690.4 946.0,690.4 947.5,690.9 949.0,691.2 950.5,690.3 952.0,690.8 953.5,690.4 955.0,690.7 956.5,690.5 958.0,690.2 959.5,690.2 961.0,690.2 962.5,691.1 964.0,690.6 965.5,690.3 967.0,691.1 968.5,691.2 970.0,690.5 971.5,690.2 973.0,690.2 974.5,690.1 976.0,690.4 977.5,690.1 979.0,690.3 980.5,690.3 982.0,690.7 983.5,691.1 985.0,690.9 986.5,690.5 988.0,690.5 989.5,690.6 991.0,690.5 992.5,690.4 994.0,690.1 995.5,690.3 997.0,691.2 998.5,690.2 1000.0,690.6 1001.5,690.8 1003.0,691.0 1004.5,690.3 1006.0,690.3 1007.5,690.3 1009.0,690.5 1010.5,690.5 1012.0,691.1 1013.5,691.0 1015.0,691.0 1016.5,690.0 1018.0,690.0 1019.5,690.9 1021.0,691.1 1022.5,690.6 1024.0,690.7 1025.5,690.0 1027.0,690.5 1028.5,691.1 1030.0,691.0 1031.5,691.0 1033.0,691.2 1034.5,690.3 1036.0,690.1 1037.5,690.2 1039.0,690.6 1040.5,690.8 1042.0,691.1 1043.5,690.9 1045.0,690.8 1046.5,690.9 1048.0,690.5 1049.5,690.7 1051.0,690.0 1052.5,690.9 1054.0,690.3 1055.5,691.1 1057.0,690.8 1058.5,690.4 1060.0,690.2 1061.5,690.3 1063.0,690.8 1064.5,690.8 1066.0,690.1 1067.5,690.1 1069.0,690.6 1070.5,690.7 1072.0,690.5 1073.5,690.3 1075.0,690.7 1076.5,690.0 1078.0,690.4 1079.5,690.6 1081.0,691.2 1082.5,690.8 1084.0,691.1 1085.5,690.6 1087.0,690.3 1088.5,690.3 1090.0,691.2 1091.5,690.8 1093.0,690.4 1094.5,690.0 1096.0,690.6 1097.5,690.8 1099.0,690.5 1100.5,690.3 1102.0,690.8 1103.5,691.1 1105.0,690.3 1106.5,690.0 1108.0,690.4 1109.5,690.5 1111.0,690.8 1112.5,690.2 1114.0,691.0 1115.5,690.9 1117.0,690.6 1118.5,690.2 1120.0,691.2 1121.5,690.4 1123.0,691.0 1124.5,690.3 1126.0,690.3 1127.5,690.9 1129.0,690.4 1130.5,691.1 1132.0,690.6 1133.5,690.2 1135.0,690.3 1136.5,690.5 1138.0,690.8 1139.5,691.1 1141.0,690.2 1142.5,690.5 1144.0,690.3 1145.5,691.2 1147.0,690.2 1148.5,690.1 1150.0,690.1 1151.5,690.5 1153.0,691.1 1154.5,691.1 1156.0,690.9 1157.5,691.2 1159.0,691.1 1160.5,690.4 1162.0,690.2 1163.5,691.1 1165.0,690.9 1166.5,690.0 1168.0,690.8 1169.5,690.5 1171.0,690.4 1172.5,690.4 1174.0,690.2 1175.5,690.0 1177.0,690.3 1178.5,690.4 1180.0,691.1 1181.5,690.1 1183.0,691.2 1184.5,690.2 1186.0,690.4 1187.5,691.0 1189.0,691.0 1190.5,690.5 1192.0,690.1 1193.5,690.6 1195.0,690.4 1196.5,691.1 1198.0,690.2 1199.5,690.4 1201.0,691.1 1202.5,690.0 1204.0,690.5 1205.5,691.0 1207.0,690.9 1208.5,690.0 1210.0,690.0 1211.5,690.1 1213.0,691.1 1214.5,690.3 1216.0,690.9 1217.5,691.1 1219.0,690.4 1220.5,690.3 1222.0,691.1 1223.5,690.7 1225.0,690.3 1226.5,690.9 1228.0,690.4 1229.5,690.3 1231.0,690.0 1232.5,690.9 1234.0,691.1 1235.5,690.8 1237.0,691.1 1238.5,690.0 1240.0,690.3 1241.5,690.6 1243.0,691.1 1244.5,691.1 1246.0,690.5 1247.5,690.3 1249.0,690.5 1250.5,690.6 1252.0,691.1 1253.5,690.2 1255.0,691.0 1256.5,690.9 1258.0,691.0 1259.5,690.9 1261.0,690.7 1262.5,690.4 1264.0,690.4 1265.5,690.4 1267.0,690.9 1268.5,690.1 1270.0,690.2 1271.5,690.9 1273.0,690.3 1274.5,690.1 1276.0,690.0 1277.5,690.7 1279.0,690.4 1280.5,691.2 1282.0,691.1 1283.5,691.2 1285.0,690.3 1286.5,690.1 1288.0,690.1 1289.5,690.6 1291.0,690.9 1292.5,690.5 1294.0,690.3 1295.5,690.5 1297.0,690.7 1298.5,690.8 1300.0,690.9 1301.5,691.0 1303.0,690.8 1304.5,690.1 1306.0,691.0 1307.5,690.4 1309.0,690.7 1310.5,690.4 1312.0,690.9 1313.5,690.2 1315.0,690.3 1316.5,690.3 1318.0,690.2 1319.5,691.1 1321.0,690.7 1322.5,690.4 1324.0,690.5 1325.5,691.2 1327.0,690.6 1328.5,690.3 1330.0,691.0 1331.5,690.8 1333.0,691.2 1334.5,690.1 1336.0,690.6 1337.5,691.0 1339.0,691.0 1340.5,691.1 1342.0,690.0 1343.5,690.4 1345.0,690.1 1346.5,690.2 1348.0,691.2 1349.5,690.7 1351.0,691.1 1352.5,690.4 1354.0,691.0 1355.5,690.5 1357.0,690.3 1358.5,690.9 1360.0,691.1 1361.5,690.1 1363.0,690.7 1364.5,690.7 1366.0,690.3 1367.5,690.4 1369.0,690.2 1370.5,690.2 1372.0,690.3 1373.5,690.7 1375.0,690.8 1376.5,690.2 1378.0,690.0 1379.5,690.4 1381.0,690.8 1382.5,690.2 1384.0,690.4 1385.5,690.2 1387.0,691.0 1388.5,690.7 1390.0,690.1 1391.5,690.1 1393.0,690.5 1394.5,690.7 1396.0,690.8 1397.5,690.1 1399.0,690.2 1400.5,690.8 1402.0,690.5 1403.5,690.3 1405.0,690.4 1406.5,691.1 1408.0,690.4 1409.5,690.7 1411.0,690.4 1412.5,690.5 1414.0,691.0 1415.5,691.2 1417.0,690.4 1418.5,690.2 1420.0,690.9 1421.5,690.2 1423.0,690.0 1424.5,691.1 1426.0,690.5 1427.5,691.0 1429.0,690.5 1430.5,691.1 1432.0,690.6 1433.5,690.2 1435.0,690.0 1436.5,690.7 1438.0,690.8 1439.5,691.1 1441.0,690.1 1442.5,690.7 1444.0,690.4 1445.5,690.6 1447.0,690.2 1448.5,690.3 1450.0,690.6 1451.5,691.1 1453.0,690.1 1454.5,690.6 1456.0,691.0 1457.5,691.2 1459.0,690.2 1460.5,690.2 1462.0,691.1 1463.5,691.2 1465.0,690.6 1466.5,690.1 1468.0,691.1 1469.5,690.5 1471.0,691.1 1472.5,690.7 1474.0,691.0 1475.5,690.2 1477.0,690.9 1478.5,690.3 1480.0,690.5 1481.5,691.0 1483.0,691.0 1484.5,690.2 1486.0,690.3 1487.5,690.5 1489.0,690.6 1490.5,690.5 1492.0,690.1 1493.5,690.3 1495.0,690.9 1496.5,691.1 1498.0,690.0 1499.5,690.7 1501.0,690.9 1502.5,690.0 1504.0,691.0 1505.5,690.1 1507.0,690.7 1508.5,690.7 1510.0,690.8 1511.5,690.4 1513.0,690.5 1514.5,690.7 1516.0,690.5 1517.5,690.8 1519.0,690.5 1520.5,690.5 1522.0,690.0 1523.5,690.7 1525.0,690.6 1526.5,690.3 1528.0,690.9 1529.5,690.9 1531.0,690.5 1532.5,690.2 1534.0,690.6 1535.5,690.1 1537.0,690.2 1538.5,690.5 1540.0,690.1 1541.5,690.5 1543.0,690.6 1544.5,690.0 1546.0,690.8 1547.5,690.1 1549.0,690.9 1550.5,690.9 1552.0,690.6 1553.5,690.1 1555.0,690.6 1556.5,690.5 1558.0,691.1 1559.5,690.2 1561.0,691.0 1562.5,691.2 1564.0,690.9 1565.5,691.0 1567.0,690.2 1568.5,691.2 1570.0,690.6 1571.5,691.1 1573.0,691.1 1574.5,690.2 1576.0,690.9 1577.5,691.1 1579.0,690.1 1580.5,690.4 1582.0,690.9 1583.5,690.2 1585.0,691.1 1586.5,690.3 1588.0,691.0 1589.5,690.2 1591.0,690.6 1592.5,691.1 1594.0,690.2 1595.5,690.3 1597.0,690.6 1598.5,690.4 1600.0,690.0 1601.5,690.2 1603.0,690.2 1604.5,691.1 1606.0,690.8 1607.5,691.1 1609.0,690.2 1610.5,690.9 1612.0,690.1 1613.5,690.6 1615.0,690.8 1616.5,690.4 1618.0,691.0 1619.5,690.7 1621.0,690.7 1622.5,691.1 1624.0,690.1 1625.5,691.2 1627.0,690.8 1628.5,690.5 1630.0,691.0 1631.5,690.3 1633.0,691.2 1634.5,690.7 1636.0,690.4 1637.5,690.9 1639.0,690.5 1640.5,690.2 1642.0,690.9 1643.5,690.1 1645.0,691.0 1646.5,690.3 1648.0,690.8 1649.5,691.2 1651.0,690.7 1652.5,690.8 1654.0,690.4 1655.5,690.0 1657.0,690.0 1658.5,690.2 1660.0,690.7 1661.5,690.5 1663.0,690.6 1664.5,691.1 1666.0,690.2 1667.5,690.3 1669.0,690.8 1670.5,690.0 1672.0,690.0 1673.5,690.4 1675.0,690.1 1676.5,690.4 1678.0,690.3 1679.5,690.7 1681.0,690.7 1682.5,690.2 1684.0,690.7 1685.5,690.6 1687.0,690.2 1688.5,691.1 1690.0,690.3 1691.5,690.2 1693.0,690.1 1694.5,690.8 1696.0,691.0 1697.5,690.9 1699.0,690.5 1700.5,690.3 1702.0,690.0 1703.5,690.8 1705.0,690.7 1706.5,690.4 1708.0,690.8 1709.5,690.5 1711.0,691.1 1712.5,690.9 1714.0,690.3 1715.5,691.1 1717.0,690.1 1718.5,690.6 1720.0,690.5 1721.5,690.3 1723.0,690.1 1724.5,690.9 1726.0,690.0 1727.5,690.7 1729.0,691.1 1730.5,690.2 1732.0,690.2 1733.5,690.7 1735.0,690.6 1736.5,690.8 1738.0,691.0 1739.5,690.2 1741.0,690.4 1742.5,690.4 1744.0,690.1 1745.5,691.1 1747.0,690.9 1748.5,690.9 1750.0,690.0 1751.5,691.0 1753.0,690.9 1754.5,690.6 1756.0,690.9 1757.5,690.5 1759.0,690.3 1760.5,690.1 1762.0,690.3 1763.5,690.0 1765.0,690.4 1766.5,690.9 1768.0,690.8 1769.5,691.0 1771.0,690.9 1772.5,690.3 1774.0,690.7 1775.5,690.5 1777.0,690.9 1778.5,690.6 1780.0,690.3 1781.5,690.8 1783.0,691.2 1784.5,690.3 1786.0,691.1 1787.5,690.0 1789.0,690.3 1790.5,690.3 1792.0,690.9 1793.5,691.1 1795.0,690.9 1796.5,690.4 1798.0,691.1 1799.5,690.4 1801.0,690.3 1802.5,691.1 1804.0,690.8 1805.5,690.8 1807.0,690.8 1808.5,691.2 1810.0,690.6 1811.5,691.0 1813.0,690.8 1814.5,691.0 1816.0,690.5 1817.5,690.9 1819.0,690.7 1820.5,690.4 1822.0,690.3 1823.5,690.7 1825.0,690.1 1826.5,691.1 1828.0,690.2 1829.5,690.0 1831.0,690.1 1832.5,691.1 1834.0,690.4 1835.5,690.2 1837.0,690.0 1838.5,690.0 1840.0,690.8 1841.5,690.8 1843.0,690.8 1844.5,690.9 1846.0,690.1 1847.5,690.7 1849.0,690.4 1850.5,691.0 1852.0,691.0 1853.5,691.1 1855.0,690.1 1856.5,691.0 1858.0,691.1 1859.5,691.1 1861.0,690.1 1862.5,690.2 1864.0,690.1 1865.5,690.0 1867.0,691.0 1868.5,691.0 1870.0,690.8 1871.5,691.0" fill="none" stroke="#7eba52" stroke-width="1.8"/><polyline points="10,569.2 12,568.7 14,568.4 16,568.4 18,569.4 20,568.5 22,568.7 24,568.9 26,568.2 28,568.6 30,568.7 32,569.3 34,568.8 36,568.7 38,569.7 40,569.0 42,569.6 44,569.2 46,568.2 48,568.9 50,568.9 52,569.4 54,568.8 56,569.3 58,569.1 60,568.5 62,569.6 64,568.3 66,569.5 68,568.5 70,568.2 72,568.5 74,569.4 76,569.8 78,568.2 80,569.0 82,569.0 84,569.5 86,568.5 88,569.0 90,568.8 92,569.5 94,568.6 96,569.7 98,568.7 100,568.5 102,569.3 104,569.0 106,568.4 108,569.2 110,568.3 112,569.5 114,569.3 116,569.5 118,569.2 120,568.8 122,568.8 124,568.8 126,569.6 128,568.3 130,569.6 132,568.2 134,568.5 136,568.6 138,569.6 140,569.0 142,568.8 144,569.6 146,568.6 148,568.9 150,569.1 152,569.4 154,569.4 156,569.2 158,568.8 160,568.7 162,568.4 164,569.5 166,569.3 168,569.4 170,568.5 172,568.9 174,569.4 176,569.1 178,568.4 180,568.9 182,569.6 184,568.6 186,568.5 188,568.7 190,569.3 192,569.5 194,568.4 196,568.4 198,568.6 200,568.7 202,569.0 204,568.5 206,568.7 208,568.5 210,569.8 212,569.4 214,568.4 216,569.7 218,568.4 220,568.8 222,569.8 224,569.5 226,569.4 228,568.9 230,568.5 232,569.2 234,568.4 236,568.5 238,568.8 240,568.3 242,568.8 244,569.5 246,569.3 248,569.0 250,569.2 252,568.9 254,568.4 256,569.2 258,568.8 260,569.4 262,569.7 264,568.9 266,569.1 268,569.4 270,568.9 272,568.6 274,569.4 276,569.6 278,569.4 280,569.3 282,569.6 284,569.3 286,569.2 288,568.9 290,568.7 292,569.2 294,568.4 296,568.9 298,569.5 300,569.3 302,569.2 304,568.6 306,568.9 308,568.9 310,569.2 312,568.9 314,569.3 316,569.7 318,568.5 320,569.2 322,569.4 324,568.8 326,569.0 328,569.8 330,568.3 332,569.1 334,568.5 336,569.5 338,569.7 340,569.0 342,568.4 344,569.1 346,569.1 348,569.3 350,569.0 352,569.2 354,569.5 356,569.0 358,568.9 360,569.7 362,568.5 364,569.3 366,568.8 368,569.4 370,568.4 372,569.8 374,568.8 376,568.3 378,568.6 380,568.8 382,568.2 384,568.9 386,568.9 388,569.3 390,568.8 392,568.6 394,568.6 396,569.4 398,569.7 400,569.0 402,568.6 404,569.5 406,568.8 408,568.5 410,568.4 412,569.4 414,569.5 416,569.2 418,569.0 420,569.1 422,568.6 424,569.7 426,568.8 428,569.2 430,569.5 432,569.5 434,568.9 436,568.7 438,569.1 440,568.4 442,569.5 444,568.8 446,569.6 448,568.6 450,568.8 452,568.6 454,568.9 456,568.5 458,568.2 460,569.4 462,568.6 464,568.6 466,568.7 468,569.0 470,568.9 472,569.2 474,569.3 476,568.8 478,569.7 480,569.6 482,568.3 484,569.5 486,569.6 488,569.5 490,568.4 492,569.5 494,569.2 496,568.2 498,568.2 500,569.7 502,569.2 504,568.6 506,568.4 508,568.4 510,568.6 512,569.4 514,568.8 516,568.4 518,569.6 520,569.5 522,568.5 524,569.6 526,569.2 528,569.5 530,569.3 532,569.6 534,569.5 536,569.5 538,568.5 540,569.3 542,569.0 544,569.4 546,568.9 548,569.6 550,569.1 552,568.6 554,568.6 556,568.4 558,569.0 560,568.3 562,568.9 564,568.4 566,569.0 568,569.0 570,569.1 572,569.6 574,568.2 576,569.5 578,568.9 580,569.1 582,569.3 584,569.5 586,568.8 588,568.9 590,569.7 592,568.3 594,569.2 596,569.2 598,568.2 600,569.2 602,569.3 604,569.7 606,568.7 608,569.8 610,569.0 612,569.0 614,569.6 616,568.3 618,569.3 620,569.2 622,568.7 624,569.6 626,568.8 628,569.0 630,569.0 632,569.4 634,568.5 636,568.9 638,568.9 640,569.1 642,569.5 644,568.7 646,569.5 648,568.8 650,569.0 652,568.6 654,569.0 656,569.8 658,569.2 660,569.5 662,568.7 664,568.7 666,568.7 668,569.1 670,569.2 672,569.5 674,568.3 676,569.4 678,569.6 680,569.1 682,568.3 684,568.7 686,568.2 688,568.5 690,569.7 692,569.2 694,569.3 696,569.5 698,569.7 700,569.2 702,569.2 704,569.2 706,569.3 708,569.2 710,569.3 712,568.5 714,569.3 716,568.9 718,569.4 720,568.4 722,568.5 724,568.3 726,569.4 728,569.7 730,569.2 732,568.8 734,569.5 736,569.5 738,569.1 740,568.6 742,568.7 744,568.9 746,568.7 748,568.9 750,569.2 752,569.7 754,568.3 756,569.1 758,568.3 760,568.4 762,569.5 764,569.1 766,569.7 768,568.9 770,568.2 772,568.8 774,569.1 776,569.7 778,569.8 780,569.0 782,568.9 784,568.4 786,569.2 788,568.5 790,568.4 792,568.2 794,568.2 796,569.3 798,568.4 800,569.7 802,568.3 804,569.6 806,568.4 808,568.2 810,569.4 812,568.6 814,569.4 816,568.5 818,568.3 820,569.4 822,569.3 824,569.6 826,569.4 828,568.3 830,569.2 832,569.3 834,568.9 836,569.7 838,568.6 840,569.7 842,569.3 844,568.2 846,568.2 848,569.2 850,569.5 852,568.3 854,568.7 856,569.4 858,568.5 860,569.6 862,569.0 864,568.3 866,568.8 868,569.1 870,568.9 872,569.3 874,568.4 876,569.5 878,568.8 880,569.2 882,569.2 884,568.9 886,568.8 888,569.5 890,569.7 892,569.5 894,569.1 896,568.7 898,568.3 900,569.8 902,569.3 904,569.5 906,568.7 908,569.2 910,569.8 912,569.5 914,569.2 916,568.7 918,568.9 920,569.6 922,568.8 924,569.3 926,569.2 928,569.6 930,569.5 932,568.7 934,568.2 936,568.6 938,568.9 940,569.1 942,569.5 944,569.6 946,568.3 948,569.5 950,569.5 952,569.6 954,569.1 956,568.6 958,569.6 960,569.5 962,569.3 964,569.7 966,568.8 968,568.3 970,569.1 972,569.5 974,568.5 976,569.4 978,569.7 980,568.6 982,569.2 984,569.3 986,568.9 988,568.5 990,568.6 992,569.4 994,569.5 996,568.9 998,568.3 1000,569.5 1002,569.4 1004,568.6 1006,569.1 1008,569.6 1010,569.6 1012,569.0 1014,569.0 1016,569.1 1018,568.5 1020,568.5 1022,568.5 1024,569.3 1026,568.8 1028,569.1 1030,568.8 1032,569.0 1034,568.4 1036,568.3 1038,569.8 1040,568.8 1042,568.4 1044,569.2 1046,569.5 1048,568.4 1050,569.2 1052,568.8 1054,569.0 1056,568.2 1058,568.3 1060,569.8 1062,569.6 1064,569.0 1066,569.1 1068,568.6 1070,569.4 1072,568.9 1074,569.7 1076,569.4 1078,569.5 1080,569.7 1082,568.6 1084,568.3 1086,568.5 1088,568.5 1090,568.3 1092,568.3 1094,569.1 1096,569.6 1098,568.9 1100,569.7 1102,569.7 1104,568.3 1106,569.2 1108,568.8 1110,568.4 1112,569.7 1114,568.6 1116,569.1 1118,569.2 1120,569.7 1122,569.3 1124,568.8 1126,568.9 1128,568.5 1130,569.7 1132,569.8 1134,568.6 1136,568.3 1138,568.6 1140,568.8 1142,569.6 1144,569.6 1146,569.5 1148,568.3 1150,569.5 1152,569.3 1154,569.2 1156,569.8 1158,568.3 1160,568.4 1162,569.4 1164,569.7 1166,569.3 1168,568.7 1170,569.1 1172,569.4 1174,568.4 1176,568.7 1178,568.6 1180,568.4 1182,569.0 1184,568.5 1186,568.6 1188,568.4 1190,569.3 1192,568.2 1194,569.3 1196,568.5 1198,568.3 1200,569.7 1202,568.6 1204,569.7 1206,569.6 1208,569.6 1210,568.4 1212,568.9 1214,568.4 1216,569.7 1218,569.5 1220,569.2 1222,568.9 1224,568.7 1226,569.5 1228,569.0 1230,569.2 1232,568.4 1234,568.6 1236,568.3 1238,569.3 1240,569.1 1242,568.4 1244,569.6 1246,568.6 1248,568.9 1250,568.4 1252,568.6 1254,569.5 1256,568.7 1258,568.5 1260,569.0 1262,568.7 1264,569.6 1266,568.4 1268,569.8 1270,568.3 1272,569.6 1274,569.3 1276,568.5 1278,569.0 1280,568.7 1282,568.6 1284,568.5 1286,568.8 1288,569.8 1290,569.8 1292,569.7 1294,568.4 1296,568.7 1298,569.6 1300,568.3 1302,569.4 1304,568.7 1306,569.8 1308,568.2 1310,569.5 1312,568.7 1314,568.4 1316,568.2 1318,569.5 1320,569.0 1322,568.5 1324,568.9 1326,569.7 1328,568.5 1330,569.1 1332,568.4 1334,568.5 1336,569.4 1338,569.3 1340,568.5 1342,568.3 1344,568.3 1346,569.2 1348,569.0 1350,568.6 1352,568.5 1354,569.2 1356,569.3 1358,569.5 1360,569.1 1362,568.5 1364,568.3 1366,569.4 1368,568.9 1370,569.4 1372,568.3 1374,569.5 1376,568.7 1378,569.5 1380,569.6 1382,569.0 1384,568.2 1386,569.7 1388,569.0 1390,569.6 1392,568.6 1394,568.5 1396,569.5 1398,568.8 1400,568.5 1402,568.8 1404,569.2 1406,568.2 1408,569.0 1410,568.9 1412,569.0 1414,568.4 1416,569.3 1418,569.5 1420,569.6 1422,568.7 1424,569.3 1426,568.8 1428,569.4 1430,568.3 1432,569.6 1434,569.7 1436,569.0 1438,569.0 1440,569.0 1442,569.1 1444,568.2 1446,569.7 1448,568.6 1450,568.5 1452,568.4 1454,568.6 1456,569.5 1458,568.2 1460,568.4 1462,569.3 1464,568.5 1466,568.2 1468,569.2 1470,569.1 1472,569.0 1474,569.3 1476,568.4 1478,569.6 1480,569.3 1482,568.3 1484,568.4 1486,569.0 1488,569.0 1490,568.6 1492,568.4 1494,568.8 1496,568.4 1498,569.1 1500,569.6 1502,568.4 1504,569.1 1506,569.4 1508,568.5 1510,569.5 1512,569.7 1514,568.8 1516,568.9 1518,569.5 1520,569.0 1522,568.8 1524,569.7 1526,569.4 1528,568.7 1530,568.6 1532,568.7 1534,568.9 1536,569.8 1538,569.5 1540,569.7 1542,569.5 1544,569.6 1546,568.3 1548,569.0 1550,569.7 1552,569.7 1554,568.6 1556,568.9 1558,569.2 1560,568.8 1562,569.0 1564,568.3 1566,568.9 1568,569.0 1570,568.2 1572,568.4 1574,569.8 1576,569.4 1578,569.7 1580,569.2 1582,569.5 1584,569.6 1586,569.6 1588,568.3 1590,569.2 1592,568.6 1594,569.3 1596,568.6 1598,569.1 1600,569.7 1602,569.2 1604,568.6 1606,569.0 1608,568.9 1610,569.7 1612,568.7 1614,568.7 1616,569.2 1618,568.4 1620,569.2 1622,569.7 1624,569.0 1626,568.6 1628,568.9 1630,569.1 1632,568.4 1634,568.4 1636,568.4 1638,568.7 1640,568.9 1642,568.7 1644,568.6 1646,568.3 1648,569.1 1650,569.5 1652,569.2 1654,569.1 1656,569.2 1658,568.5 1660,569.3 1662,568.9 1664,569.1 1666,569.2 1668,569.0 1670,568.7 1672,568.6 1674,568.6 1676,569.0 1678,568.8 1680,569.1 1682,568.2 1684,568.8 1686,569.6 1688,568.6 1690,569.1 1692,569.0 1694,568.7 1696,569.8 1698,568.7 1700,569.4 1702,568.5 1704,568.3 1706,569.6 1708,568.9 1710,568.3 1712,568.8 1714,568.9 1716,569.4 1718,568.4 1720,568.6 1722,569.7 1724,569.4 1726,568.4 1728,568.7 1730,568.8 1732,569.3 1734,569.2 1736,569.6 1738,569.5 1740,569.0 1742,569.4 1744,569.4 1746,569.4 1748,569.0 1750,569.5 1752,569.3 1754,569.7 1756,568.4 1758,569.6 1760,568.2 1762,569.4 1764,569.1 1766,569.0 1768,569.7 1770,569.1 1772,568.9 1774,569.5 1776,569.6 1778,569.2 1780,568.8 1782,568.9 1784,568.9 1786,569.4 1788,568.7 1790,568.8 1792,569.1 1794,568.8 1796,568.7 1798,569.5 1800,569.6 1802,569.0 1804,568.9 1806,568.5 1808,568.7 1810,568.4 1812,569.1 1814,569.1 1816,568.3 1818,569.7 1820,568.7 1822,569.5 1824,569.5 1826,569.7 1828,568.5 1830,568.9 1832,569.7 1834,568.2 1836,568.3 1838,569.1 1840,569.0 1842,569.7 1844,569.4 1846,569.1 1848,569.8 1850,569.0 1852,569.0 1854,569.3 1856,568.8 1858,568.8 1860,569.2 1862,568.8 1864,569.7 1866,569.3 1868,569.0 1870,568.4 1872,568.8 1874,568.8 1876,569.1 1878,569.1 1880,569.6 1882,569.7 1884,569.0 1886,568.9 1888,569.2 1890,569.8 1892,568.7 1894,569.0" fill="none" stroke="#f6ee2c" stroke-width="6.4"/><polyline points="10,571.7 11,566.2 12,567.5 13,573.0 14,571.7 15,569.1 16,565.7 17,572.3 18,570.6 19,571.7 20,573.1 21,572.3 22,568.3 23,566.1 24,567.2 25,569.1 26,569.0 27,566.4 28,566.3 29,570.1 30,569.9 31,567.8 32,573.1 33,570.1 34,565.2 35,568.3 36,571.4 37,567.4 38,570.6 39,564.8 40,567.4 41,571.9 42,569.7 43,570.4 44,566.5 45,569.0 46,569.4 47,567.0 48,570.2 49,569.3 50,573.2 51,569.6 52,568.3 53,565.8 54,566.1 55,571.2 56,565.7 57,565.6 58,566.2 59,569.2 60,571.7 61,569.9 62,571.6 63,565.3 64,564.9 65,571.3 66,567.5 67,570.8 68,567.8 69,566.2 70,567.0 71,565.6 72,572.4 73,569.7 74,567.7 75,568.6 76,568.0 77,565.3 78,572.3 79,569.7 80,572.9 81,568.5 82,570.0 83,566.9 84,565.2 85,572.6 86,572.0 87,567.4 88,572.4 89,571.7 90,567.4 91,569.9 92,572.9 93,569.0 94,572.8 95,566.8 96,568.1 97,570.8 98,566.7 99,567.4 100,572.2 101,568.9 102,571.5 103,566.8 104,566.3 105,567.8 106,566.4 107,573.0 108,567.2 109,569.5 110,565.8 111,569.3 112,568.0 113,568.2 114,565.3 115,565.8 116,571.7 117,567.8 118,566.9 119,566.4 120,567.2 121,566.8 122,565.1 123,570.4 124,567.7 125,566.1 126,570.7 127,565.6 128,567.1 129,571.8 130,565.9 131,568.5 132,571.8 133,571.6 134,566.1 135,567.8 136,570.9 137,568.0 138,572.9 139,566.5 140,572.8 141,569.0 142,566.7 143,568.6 144,565.9 145,570.7 146,567.0 147,572.4 148,569.7 149,567.9 150,566.9 151,569.9 152,566.6 153,572.1 154,565.8 155,569.1 156,569.4 157,567.1 158,571.3 159,568.0 160,570.3 161,569.6 162,567.4 163,568.1 164,565.5 165,566.3 166,571.9 167,567.5 168,570.4 169,565.7 170,569.5 171,567.8 172,569.0 173,567.3 174,565.4 175,567.4 176,566.7 177,565.9 178,570.8 179,567.2 180,568.2 181,572.4 182,571.3 183,572.2 184,572.0 185,565.9 186,567.1 187,565.0 188,570.5 189,570.4 190,567.8 191,568.3 192,570.3 193,570.7 194,566.9 195,571.9 196,567.8 197,570.1 198,566.3 199,565.8 200,572.5 201,571.0 202,570.8 203,565.1 204,565.1 205,566.2 206,566.5 207,567.3 208,568.0 209,565.1 210,567.4 211,570.2 212,566.3 213,571.9 214,569.6 215,570.8 216,566.9 217,568.5 218,570.5 219,567.7 220,564.8 221,571.8 222,571.3 223,567.2 224,565.2 225,572.0 226,569.9 227,565.2 228,566.9 229,565.7 230,571.4 231,566.6 232,572.5 233,571.1 234,565.5 235,570.6 236,568.1 237,571.1 238,571.8 239,567.2 240,565.6 241,572.7 242,568.4 243,572.6 244,570.6 245,571.0 246,571.8 247,570.1 248,568.6 249,565.3 250,570.7 251,568.4 252,569.1 253,572.6 254,565.9 255,571.2 256,565.2 257,570.7 258,571.6 259,567.0 260,569.4 261,572.9 262,570.2 263,569.4 264,566.9 265,565.3 266,567.8 267,568.3 268,566.5 269,567.4 270,565.9 271,570.7 272,570.4 273,566.8 274,566.8 275,569.1 276,568.5 277,572.7 278,567.8 279,567.3 280,572.2 281,566.0 282,569.5 283,567.6 284,571.6 285,569.4 286,571.2 287,566.2 288,570.4 289,569.8 290,568.7 291,571.2 292,571.8 293,565.8 294,567.2 295,567.8 296,566.5 297,565.3 298,567.2 299,566.5 300,570.7 301,568.6 302,565.7 303,567.5 304,568.7 305,567.8 306,566.2 307,565.4 308,564.9 309,573.1 310,571.1 311,565.5 312,570.8 313,573.0 314,569.5 315,565.7 316,568.9 317,568.4 318,566.4 319,569.4 320,564.9 321,572.5 322,570.2 323,570.1 324,572.7 325,570.3 326,566.9 327,566.9 328,566.0 329,565.0 330,571.3 331,571.9 332,567.3 333,566.4 334,570.2 335,571.9 336,572.6 337,566.2 338,571.4 339,571.8 340,571.0 341,567.5 342,566.4 343,571.7 344,567.5 345,567.9 346,569.4 347,567.9 348,571.8 349,566.8 350,565.1 351,569.6 352,570.1 353,571.7 354,570.7 355,572.4 356,572.7 357,569.0 358,569.0 359,566.1 360,567.3 361,569.7 362,565.5 363,570.6 364,566.2 365,568.5 366,572.9 367,565.6 368,565.1 369,568.5 370,566.4 371,570.9 372,564.8 373,571.9 374,572.0 375,571.4 376,568.4 377,567.2 378,570.4 379,569.1 380,568.3 381,567.6 382,568.5 383,570.4 384,571.7 385,572.4 386,566.2 387,567.3 388,568.5 389,569.5 390,567.7 391,566.4 392,565.5 393,567.5 394,568.7 395,573.0 396,572.4 397,572.1 398,573.0 399,572.9 400,570.0 401,571.6 402,565.3 403,570.5 404,569.9 405,567.3 406,569.6 407,572.8 408,568.8 409,570.2 410,567.3 411,567.7 412,572.2 413,565.0 414,566.4 415,570.5 416,568.6 417,565.5 418,570.3 419,567.9 420,569.7 421,568.3 422,569.3 423,569.5 424,568.1 425,565.8 426,566.3 427,572.3 428,569.4 429,565.7 430,572.0 431,566.9 432,565.6 433,569.3 434,566.9 435,568.9 436,569.5 437,566.7 438,569.6 439,565.7 440,569.1 441,569.7 442,565.5 443,568.2 444,565.4 445,568.5 446,572.1 447,569.4 448,570.8 449,571.2 450,565.8 451,573.1 452,570.9 453,565.7 454,571.8 455,568.1 456,566.2 457,572.9 458,569.5 459,571.3 460,565.9 461,571.3 462,565.3 463,566.8 464,567.9 465,564.9 466,569.8 467,566.6 468,567.3 469,570.7 470,568.4 471,572.3 472,570.0 473,572.1 474,569.5 475,572.5 476,572.1 477,566.2 478,571.1 479,567.7 480,571.2 481,570.5 482,571.7 483,565.8 484,567.9 485,571.0 486,572.8 487,570.9 488,565.2 489,569.9 490,565.6 491,569.4 492,571.5 493,565.7 494,572.6 495,570.5 496,566.9 497,566.4 498,568.6 499,571.8 500,569.7 501,565.8 502,565.0 503,565.7 504,571.5 505,566.4 506,569.5 507,567.2 508,570.6 509,568.0 510,566.0 511,572.2 512,569.3 513,570.6 514,571.6 515,572.8 516,564.9 517,567.7 518,566.1 519,569.0 520,572.1 521,571.5 522,565.1 523,566.3 524,571.7 525,570.5 526,568.1 527,568.8 528,566.1 529,571.9 530,568.1 531,572.1 532,569.9 533,565.4 534,567.6 535,566.6 536,572.3 537,569.7 538,565.2 539,566.2 540,567.8 541,568.7 542,569.6 543,568.1 544,567.8 545,564.9 546,569.7 547,567.6 548,565.0 549,568.7 550,573.1 551,565.2 552,566.0 553,570.4 554,567.1 555,567.1 556,569.0 557,567.0 558,569.6 559,569.2 560,572.8 561,573.1 562,565.1 563,569.5 564,571.3 565,572.1 566,571.3 567,570.1 568,570.1 569,567.8 570,567.2 571,571.5 572,572.1 573,572.7 574,570.5 575,567.4 576,571.2 577,571.0 578,569.1 579,570.1 580,567.7 581,569.4 582,568.2 583,565.3 584,567.6 585,567.5 586,573.1 587,568.8 588,567.9 589,566.8 590,566.8 591,567.7 592,565.9 593,564.9 594,572.1 595,568.6 596,568.5 597,569.6 598,567.3 599,566.2 600,565.4 601,567.3 602,567.4 603,570.9 604,569.4 605,572.7 606,567.7 607,572.5 608,569.7 609,565.5 610,566.3 611,569.7 612,573.1 613,567.8 614,571.3 615,568.4 616,572.1 617,565.4 618,568.9 619,572.4 620,567.1 621,567.0 622,565.0 623,566.2 624,567.1 625,570.7 626,566.6 627,568.2 628,566.5 629,569.9 630,572.1 631,570.2 632,566.5 633,571.0 634,572.9 635,569.8 636,565.5 637,571.6 638,572.2 639,567.7 640,565.9 641,566.4 642,569.3 643,572.2 644,570.2 645,572.6 646,566.6 647,567.5 648,571.1 649,570.3 650,568.2 651,570.5 652,567.6 653,565.3 654,568.3 655,565.2 656,570.1 657,567.6 658,569.0 659,569.8 660,567.0 661,568.7 662,564.9 663,572.6 664,569.5 665,573.1 666,565.3 667,570.0 668,570.9 669,567.6 670,565.6 671,566.1 672,566.0 673,571.2 674,565.6 675,571.6 676,568.4 677,569.3 678,569.7 679,569.5 680,570.3 681,569.9 682,567.6 683,571.0 684,567.0 685,570.8 686,571.2 687,571.3 688,567.4 689,571.3 690,573.0 691,568.6 692,567.1 693,569.2 694,572.7 695,565.9 696,564.9 697,568.8 698,570.3 699,571.3 700,567.8 701,573.1 702,566.7 703,571.2 704,565.6 705,565.0 706,565.9 707,565.3 708,569.0 709,569.5 710,566.3 711,572.7 712,567.9 713,566.1 714,566.3 715,571.0 716,572.5 717,566.2 718,565.0 719,571.3 720,566.8 721,573.1 722,569.0 723,570.1 724,567.7 725,571.5 726,568.7 727,567.5 728,572.4 729,565.7 730,571.0 731,565.3 732,570.2 733,568.2 734,572.1 735,565.3 736,569.5 737,568.2 738,572.5 739,572.7 740,570.1 741,566.7 742,566.9 743,567.0 744,568.4 745,566.7 746,566.5 747,571.2 748,570.2 749,567.3 750,573.2 751,566.6 752,569.6 753,566.1 754,572.0 755,572.1 756,567.0 757,571.1 758,571.7 759,567.2 760,567.6 761,568.9 762,572.3 763,566.2 764,570.5 765,569.8 766,568.6 767,569.7 768,572.2 769,566.6 770,572.2 771,567.8 772,571.4 773,572.1 774,566.3 775,572.1 776,573.2 777,567.3 778,565.0 779,565.7 780,573.0 781,564.9 782,572.5 783,566.1 784,571.0 785,565.6 786,566.2 787,570.5 788,565.6 789,567.7 790,572.5 791,570.8 792,572.2 793,573.0 794,565.1 795,566.8 796,571.5 797,570.6 798,565.1 799,569.0 800,566.7 801,568.4 802,565.7 803,565.0 804,573.1 805,567.5 806,572.2 807,565.8 808,568.9 809,565.9 810,568.4 811,566.3 812,570.6 813,566.0 814,571.0 815,569.0 816,565.7 817,567.8 818,569.0 819,572.5 820,567.7 821,566.6 822,572.9 823,572.2 824,570.9 825,567.1 826,566.3 827,567.0 828,565.4 829,565.2 830,569.1 831,568.2 832,569.5 833,567.8 834,564.9 835,570.6 836,570.3 837,569.4 838,569.4 839,570.6 840,573.1 841,572.1 842,570.8 843,568.2 844,567.5 845,568.3 846,573.0 847,568.1 848,568.0 849,568.2 850,566.0 851,573.2 852,564.8 853,569.9 854,572.6 855,566.9 856,569.9 857,568.0 858,566.8 859,566.5 860,565.8 861,571.9 862,571.4 863,572.4 864,565.2 865,570.6 866,567.5 867,570.2 868,569.4 869,567.5 870,573.0 871,564.8 872,571.1 873,572.0 874,569.1 875,569.8 876,573.2 877,566.8 878,570.1 879,571.0 880,568.0 881,570.8 882,568.1 883,569.2 884,569.9 885,570.5 886,567.5 887,570.1 888,569.4 889,566.7 890,569.9 891,567.0 892,572.4 893,568.8 894,570.9 895,569.2 896,568.8 897,566.7 898,566.0 899,572.6 900,569.2 901,569.2 902,569.2 903,571.6 904,566.8 905,566.2 906,571.7 907,568.7 908,570.2 909,571.8 910,572.3 911,572.1 912,565.2 913,568.0 914,571.8 915,571.7 916,565.8 917,566.1 918,566.9 919,565.7 920,567.8 921,571.5 922,569.2 923,568.6 924,565.5 925,568.1 926,573.2 927,570.6 928,568.6 929,568.8 930,571.5 931,571.2 932,566.1 933,570.5 934,567.9 935,569.2 936,566.8 937,567.9 938,567.7 939,568.0 940,564.9 941,566.5 942,569.6 943,565.3 944,566.3 945,570.8 946,567.1 947,567.5 948,566.8 949,571.8 950,565.6 951,570.1 952,572.0 953,566.5 954,568.4 955,571.5 956,570.0 957,567.9 958,565.2 959,568.5 960,567.9 961,570.8 962,567.3 963,568.2 964,570.2 965,571.6 966,567.8 967,568.0 968,569.7 969,572.6 970,566.4 971,573.0 972,570.8 973,567.9 974,570.4 975,567.6 976,565.4 977,571.2 978,568.0 979,569.2 980,569.0 981,572.4 982,571.2 983,565.0 984,569.8 985,568.7 986,568.7 987,571.9 988,568.3 989,568.8 990,572.3 991,568.5 992,568.9 993,569.1 994,571.7 995,570.4 996,571.0 997,568.2 998,565.1 999,570.5 1000,569.5 1001,571.3 1002,571.3 1003,565.8 1004,566.7 1005,565.4 1006,571.7 1007,565.7 1008,565.5 1009,571.1 1010,569.5 1011,565.3 1012,570.5 1013,570.8 1014,568.9 1015,565.3 1016,570.6 1017,568.3 1018,569.7 1019,573.2 1020,571.7 1021,572.1 1022,566.0 1023,567.6 1024,569.2 1025,564.9 1026,573.1 1027,567.1 1028,567.0 1029,567.4 1030,566.9 1031,572.0 1032,569.5 1033,569.1 1034,568.3 1035,565.2 1036,567.4 1037,572.1 1038,571.5 1039,572.0 1040,567.0 1041,566.5 1042,565.2 1043,569.3 1044,567.9 1045,568.7 1046,568.9 1047,569.7 1048,567.9 1049,571.5 1050,566.5 1051,572.5 1052,569.5 1053,565.2 1054,567.4 1055,569.3 1056,568.2 1057,569.5 1058,567.5 1059,567.1 1060,571.5 1061,567.2 1062,570.8 1063,571.5 1064,569.8 1065,568.6 1066,572.7 1067,568.5 1068,572.2 1069,565.3 1070,568.4 1071,570.2 1072,565.2 1073,572.0 1074,565.4 1075,569.8 1076,566.3 1077,572.5 1078,569.5 1079,571.5 1080,569.0 1081,570.5 1082,570.5 1083,567.3 1084,566.6 1085,571.8 1086,566.0 1087,572.5 1088,566.5 1089,565.6 1090,565.6 1091,571.4 1092,572.8 1093,568.3 1094,570.3 1095,567.0 1096,572.4 1097,570.6 1098,566.1 1099,565.3 1100,570.6 1101,565.2 1102,571.8 1103,567.3 1104,566.8 1105,569.7 1106,567.5 1107,569.5 1108,566.1 1109,572.5 1110,567.5 1111,571.9 1112,566.1 1113,571.5 1114,573.0 1115,568.1 1116,565.1 1117,568.0 1118,570.2 1119,566.7 1120,569.4 1121,565.6 1122,568.7 1123,570.9 1124,568.4 1125,570.5 1126,565.8 1127,571.8 1128,565.8 1129,572.6 1130,573.2 1131,572.7 1132,569.2 1133,567.2 1134,567.7 1135,571.1 1136,569.0 1137,572.6 1138,565.6 1139,568.9 1140,572.1 1141,569.8 1142,569.3 1143,565.5 1144,566.0 1145,567.1 1146,572.3 1147,571.9 1148,566.7 1149,572.6 1150,565.1 1151,569.8 1152,572.9 1153,567.7 1154,572.7 1155,570.3 1156,565.2 1157,567.6 1158,568.6 1159,566.9 1160,571.0 1161,566.3 1162,571.4 1163,567.3 1164,565.4 1165,569.5 1166,565.6 1167,569.4 1168,571.4 1169,569.8 1170,568.7 1171,565.1 1172,569.1 1173,565.6 1174,570.2 1175,565.9 1176,569.7 1177,567.8 1178,567.9 1179,570.4 1180,566.2 1181,566.2 1182,572.7 1183,567.6 1184,571.9 1185,572.1 1186,568.8 1187,566.1 1188,565.6 1189,572.2 1190,565.8 1191,569.0 1192,569.3 1193,565.8 1194,568.7 1195,566.2 1196,569.3 1197,569.1 1198,567.9 1199,566.5 1200,568.2 1201,566.5 1202,565.9 1203,566.8 1204,572.1 1205,569.0 1206,572.3 1207,564.9 1208,572.7 1209,568.9 1210,571.4 1211,569.6 1212,570.6 1213,566.7 1214,571.1 1215,566.1 1216,567.0 1217,565.1 1218,568.1 1219,569.2 1220,567.3 1221,572.3 1222,565.5 1223,569.7 1224,566.8 1225,569.8 1226,571.4 1227,570.8 1228,565.3 1229,566.9 1230,569.8 1231,573.1 1232,565.1 1233,570.0 1234,570.6 1235,571.6 1236,567.7 1237,571.6 1238,568.7 1239,572.5 1240,564.9 1241,572.7 1242,568.3 1243,568.2 1244,565.5 1245,566.9 1246,571.0 1247,570.5 1248,566.1 1249,567.7 1250,566.0 1251,566.5 1252,566.6 1253,567.6 1254,573.0 1255,573.2 1256,571.4 1257,568.8 1258,569.0 1259,571.3 1260,572.4 1261,571.1 1262,570.1 1263,566.5 1264,570.1 1265,571.9 1266,571.4 1267,565.6 1268,570.8 1269,567.7 1270,566.2 1271,572.9 1272,570.5 1273,571.1 1274,565.9 1275,571.8 1276,572.7 1277,572.4 1278,571.1 1279,571.8 1280,571.5 1281,569.8 1282,568.5 1283,571.7 1284,571.4 1285,572.1 1286,567.3 1287,572.9 1288,569.3 1289,572.7 1290,565.8 1291,572.9 1292,571.4 1293,566.9 1294,571.8 1295,566.7 1296,566.5 1297,568.6 1298,566.8 1299,568.9 1300,572.4 1301,570.6 1302,570.8 1303,568.1 1304,571.4 1305,571.5 1306,570.5 1307,572.7 1308,571.7 1309,568.2 1310,565.5 1311,570.3 1312,571.8 1313,567.7 1314,569.8 1315,571.8 1316,571.5 1317,564.8 1318,568.9 1319,564.9 1320,565.7 1321,571.6 1322,568.3 1323,569.9 1324,568.6 1325,567.6 1326,566.6 1327,567.8 1328,571.9 1329,570.0 1330,567.3 1331,565.5 1332,567.1 1333,570.7 1334,568.5 1335,570.4 1336,571.6 1337,565.8 1338,570.5 1339,565.1 1340,571.7 1341,566.3 1342,567.1 1343,572.8 1344,567.8 1345,566.7 1346,572.3 1347,569.9 1348,572.3 1349,568.1 1350,569.0 1351,572.8 1352,569.1 1353,573.1 1354,566.4 1355,571.8 1356,566.2 1357,569.2 1358,564.8 1359,566.3 1360,572.7 1361,568.6 1362,571.6 1363,566.9 1364,567.8 1365,565.6 1366,569.4 1367,572.0 1368,569.1 1369,568.0 1370,572.6 1371,572.3 1372,570.4 1373,565.4 1374,570.0 1375,568.5 1376,572.8 1377,567.8 1378,570.4 1379,570.1 1380,568.0 1381,569.2 1382,570.5 1383,572.4 1384,569.0 1385,567.9 1386,573.0 1387,565.3 1388,571.8 1389,570.5 1390,569.5 1391,568.6 1392,571.1 1393,572.3 1394,570.9 1395,571.1 1396,565.1 1397,567.5 1398,566.0 1399,572.8 1400,572.3 1401,566.0 1402,569.7 1403,569.6 1404,565.2 1405,568.1 1406,571.1 1407,570.2 1408,567.2 1409,571.2 1410,567.2 1411,569.4 1412,568.3 1413,573.0 1414,570.2 1415,571.6 1416,570.5 1417,568.0 1418,572.9 1419,570.8 1420,570.6 1421,567.1 1422,566.2 1423,569.6 1424,571.7 1425,571.5 1426,567.7 1427,566.0 1428,569.1 1429,572.2 1430,566.2 1431,571.0 1432,566.2 1433,567.4 1434,565.2 1435,567.3 1436,568.0 1437,572.9 1438,572.9 1439,566.4 1440,567.4 1441,572.7 1442,566.5 1443,567.5 1444,568.5 1445,565.7 1446,567.0 1447,568.1 1448,568.0 1449,572.9 1450,567.0 1451,566.5 1452,572.4 1453,568.6 1454,571.8 1455,570.2 1456,571.3 1457,567.4 1458,566.1 1459,571.2 1460,568.7 1461,569.5 1462,570.4 1463,571.1 1464,567.1 1465,567.8 1466,572.5 1467,569.2 1468,567.2 1469,570.1 1470,567.0 1471,571.3 1472,565.1 1473,571.7 1474,569.6 1475,567.8 1476,572.7 1477,567.0 1478,566.8 1479,565.4 1480,569.4 1481,571.1 1482,570.5 1483,568.3 1484,571.6 1485,565.7 1486,567.4 1487,570.2 1488,572.9 1489,570.1 1490,570.6 1491,571.3 1492,568.1 1493,572.7 1494,571.0 1495,567.7 1496,568.1 1497,571.6 1498,567.7 1499,566.4 1500,572.1 1501,569.3 1502,569.2 1503,570.4 1504,572.4 1505,565.9 1506,567.6 1507,565.4 1508,568.3 1509,569.0 1510,572.0 1511,570.4 1512,569.7 1513,568.2 1514,569.6 1515,567.1 1516,571.9 1517,571.4 1518,571.8 1519,566.1 1520,570.4 1521,571.1 1522,569.0 1523,572.3 1524,572.4 1525,571.0 1526,571.7 1527,570.3 1528,572.2 1529,565.9 1530,570.7 1531,570.7 1532,569.9 1533,567.1 1534,565.4 1535,569.9 1536,571.7 1537,567.1 1538,566.6 1539,566.7 1540,565.6 1541,570.5 1542,573.0 1543,571.5 1544,567.8 1545,570.7 1546,565.4 1547,571.8 1548,567.5 1549,564.8 1550,570.1 1551,566.0 1552,567.1 1553,565.3 1554,568.5 1555,569.5 1556,571.6 1557,565.1 1558,571.8 1559,565.7 1560,566.7 1561,570.1 1562,567.7 1563,567.6 1564,569.6 1565,566.6 1566,571.5 1567,566.6 1568,571.9 1569,571.6 1570,569.3 1571,565.1 1572,571.3 1573,565.0 1574,569.0 1575,568.4 1576,565.3 1577,570.1 1578,570.9 1579,569.7 1580,568.2 1581,569.1 1582,569.7 1583,566.7 1584,572.1 1585,573.2 1586,571.6 1587,572.9 1588,567.6 1589,573.1 1590,565.4 1591,568.8 1592,565.9 1593,568.6 1594,570.5 1595,570.8 1596,568.6 1597,567.7 1598,566.4 1599,568.2 1600,567.2 1601,566.4 1602,571.0 1603,569.1 1604,568.5 1605,566.5 1606,570.7 1607,566.5 1608,567.0 1609,569.5 1610,570.7 1611,573.0 1612,571.1 1613,572.8 1614,572.5 1615,570.9 1616,570.8 1617,565.3 1618,566.5 1619,564.9 1620,572.1 1621,570.9 1622,570.1 1623,567.0 1624,567.8 1625,566.2 1626,570.1 1627,573.1 1628,567.4 1629,565.2 1630,566.3 1631,567.8 1632,572.4 1633,571.6 1634,568.6 1635,565.7 1636,565.7 1637,566.1 1638,571.3 1639,568.8 1640,573.1 1641,572.5 1642,571.5 1643,568.8 1644,571.7 1645,565.9 1646,565.7 1647,569.5 1648,569.1 1649,566.6 1650,566.9 1651,565.0 1652,572.4 1653,570.8 1654,572.7 1655,573.0 1656,568.5 1657,571.0 1658,568.0 1659,571.6 1660,571.9 1661,565.9 1662,564.9 1663,566.6 1664,569.7 1665,568.0 1666,564.9 1667,571.8 1668,571.4 1669,568.7 1670,565.2 1671,572.3 1672,569.3 1673,565.4 1674,567.5 1675,570.0 1676,572.2 1677,568.9 1678,570.2 1679,566.5 1680,566.8 1681,572.4 1682,568.0 1683,565.7 1684,569.8 1685,565.9 1686,566.5 1687,568.6 1688,569.7 1689,570.1 1690,570.7 1691,568.5 1692,565.4 1693,570.9 1694,565.3 1695,568.8 1696,568.2 1697,570.5 1698,570.8 1699,566.8 1700,570.3 1701,570.6 1702,568.8 1703,566.0 1704,572.4 1705,569.8 1706,565.3 1707,566.8 1708,573.1 1709,566.7 1710,568.1 1711,571.4 1712,571.7 1713,570.1 1714,571.0 1715,565.1 1716,565.6 1717,573.0 1718,571.5 1719,565.1 1720,565.2 1721,566.8 1722,572.6 1723,566.6 1724,570.4 1725,572.6 1726,570.2 1727,572.5 1728,567.0 1729,566.1 1730,565.0 1731,571.2 1732,565.7 1733,573.0 1734,570.8 1735,566.4 1736,571.6 1737,566.2 1738,569.1 1739,565.7 1740,571.4 1741,572.3 1742,572.5 1743,564.8 1744,572.0 1745,569.5 1746,571.7 1747,569.0 1748,570.0 1749,569.8 1750,571.5 1751,565.5 1752,565.3 1753,569.4 1754,567.2 1755,568.1 1756,564.9 1757,571.1 1758,565.0 1759,571.8 1760,571.6 1761,568.6 1762,565.8 1763,570.3 1764,566.5 1765,568.4 1766,565.7 1767,573.0 1768,569.4 1769,567.8 1770,565.6 1771,570.9 1772,571.9 1773,571.9 1774,565.7 1775,567.9 1776,567.3 1777,571.2 1778,566.0 1779,569.9 1780,573.0 1781,571.3 1782,564.9 1783,565.4 1784,565.8 1785,570.6 1786,569.8 1787,569.2 1788,568.6 1789,568.2 1790,569.9 1791,570.2 1792,572.5 1793,571.0 1794,571.5 1795,572.5 1796,571.8 1797,570.8 1798,565.1 1799,570.5 1800,571.9 1801,568.4 1802,572.2 1803,566.3 1804,572.7 1805,568.5 1806,570.7 1807,566.9 1808,567.3 1809,567.7 1810,567.5 1811,565.6 1812,568.5 1813,573.0 1814,570.3 1815,572.6 1816,571.2 1817,571.8 1818,573.2 1819,571.1 1820,567.1 1821,566.9 1822,568.3 1823,565.0 1824,566.7 1825,572.2 1826,572.5 1827,567.6 1828,571.3 1829,571.3 1830,572.3 1831,571.5 1832,569.3 1833,565.7 1834,571.7 1835,567.4 1836,570.1 1837,567.9 1838,569.3 1839,572.9 1840,566.2 1841,569.3 1842,570.3 1843,569.3 1844,572.7 1845,568.2 1846,572.5 1847,570.6 1848,572.9 1849,565.6 1850,566.6 1851,567.2 1852,572.4 1853,564.9 1854,567.0 1855,570.8 1856,573.1 1857,566.3 1858,568.5 1859,570.6 1860,570.6 1861,571.1 1862,571.1 1863,566.9 1864,567.0 1865,565.0 1866,570.6 1867,566.6 1868,567.0 1869,572.9 1870,570.2 1871,569.8 1872,570.3 1873,569.8 1874,570.6 1875,567.4 1876,565.3 1877,565.4 1878,564.9 1879,567.8 1880,566.0 1881,565.7 1882,568.9 1883,572.9 1884,570.6 1885,567.1 1886,571.3 1887,566.3 1888,565.6 1889,567.3 1890,568.2 1891,570.6 1892,568.5 1893,570.9 1894,565.6" fill="none" stroke="#f4ec30" stroke-width="1.1"/><polyline points="10.0,990.1 11.0,993.4 12.0,991.2 13.0,993.4 14.0,991.4 15.0,995.8 16.0,996.4 17.0,997.4 18.0,997.4 19.0,999.9 20.0,1000.2 21.0,1000.3 22.0,1000.8 23.0,1001.9 24.0,1003.1 25.0,1003.4 26.0,1004.4 27.0,1005.6 28.0,1005.7 29.0,1006.5 30.0,1007.9 31.0,1007.5 32.0,1008.4 33.0,1009.3 34.0,1011.4 35.0,1010.6 36.0,1009.6 37.0,1010.1 38.0,1011.6 39.0,1010.8 40.0,1011.2 41.0,1012.0 42.0,1011.5 43.0,1012.4 44.0,1012.8 45.0,1012.3 46.0,1013.0 47.0,1013.8 48.0,1012.3 49.0,1013.0 50.0,1012.4 51.0,1012.4 52.0,1012.4 53.0,1012.6 54.0,1011.8 55.0,1012.0 56.0,1012.4 57.0,1011.2 58.0,1011.6 59.0,1010.4 60.0,1010.7 61.0,1011.0 62.0,1009.6 63.0,1009.9 64.0,1008.6 65.0,1009.5 66.0,1008.8 67.0,1008.3 68.0,1006.5 69.0,1007.1 70.0,1004.7 71.0,1004.3 72.0,1004.7 73.0,1004.3 74.0,1006.2 75.0,1001.4 76.0,1001.0 77.0,1000.1 78.0,999.4 79.0,998.9 80.0,998.2 81.0,995.8 82.0,994.9 83.0,993.9 84.0,992.2 85.0,991.4 86.0,989.9 87.0,989.2 88.0,988.5 89.0,986.5 90.0,985.2 91.0,983.9 92.0,983.3 93.0,980.7 94.0,979.9 95.0,979.0 96.0,978.3 97.0,976.8 98.0,974.2 99.0,975.8 100.0,969.3 101.0,969.5 102.0,969.0 103.0,966.7 104.0,965.5 105.0,963.3 106.0,961.1 107.0,959.9 108.0,958.7 109.0,955.6 110.0,955.1 111.0,951.9 112.0,950.2 113.0,948.4 114.0,947.1 115.0,945.2 116.0,942.7 117.0,941.1 118.0,939.0 119.0,936.9 120.0,935.4 121.0,932.0 122.0,931.1 123.0,928.0 124.0,926.7 125.0,924.2 126.0,921.8 127.0,918.6 128.0,916.5 129.0,913.8 130.0,912.2 131.0,909.2 132.0,908.4 133.0,905.0 134.0,902.7 135.0,901.6 136.0,897.3 137.0,896.3 138.0,893.6 139.0,890.7 140.0,888.8 141.0,885.9 142.0,882.4 143.0,880.4 144.0,878.3 145.0,874.7 146.0,872.7 147.0,866.6 148.0,865.4 149.0,863.8 150.0,859.7 151.0,859.6 152.0,855.4 153.0,853.3 154.0,850.4 155.0,844.4 156.0,844.3 157.0,842.3 158.0,838.8 159.0,836.8 160.0,833.5 161.0,831.4 162.0,826.9 163.0,825.1 164.0,822.2 165.0,819.4 166.0,815.2 167.0,812.4 168.0,810.5 169.0,806.5 170.0,804.3 171.0,800.3 172.0,798.1 173.0,795.1 174.0,791.4 175.0,788.9 176.0,784.9 177.0,782.2 178.0,779.8 179.0,776.7 180.0,772.8 181.0,770.6 182.0,766.5 183.0,764.5 184.0,761.3 185.0,758.3 186.0,754.3 187.0,750.6 188.0,747.6 189.0,744.5 190.0,742.6 191.0,738.2 192.0,735.6 193.0,732.1 194.0,729.3 195.0,725.3 196.0,722.6 197.0,719.2 198.0,715.9 199.0,713.2 200.0,710.5 201.0,706.7 202.0,704.4 203.0,699.7 204.0,697.4 205.0,693.1 206.0,691.5 207.0,687.5 208.0,683.9 209.0,681.5 210.0,677.8 211.0,674.5 212.0,670.8 213.0,668.7 214.0,664.3 215.0,661.2 216.0,659.3 217.0,654.9 218.0,652.1 219.0,648.4 220.0,646.7 221.0,642.3 222.0,640.2 223.0,636.3 224.0,633.4 225.0,630.0 226.0,627.3 227.0,623.2 228.0,619.9 229.0,617.2 230.0,613.9 231.0,612.1 232.0,608.8 233.0,604.5 234.0,601.7 235.0,598.7 236.0,596.4 237.0,591.9 238.0,589.9 239.0,587.4 240.0,584.2 241.0,580.2 242.0,577.3 243.0,574.4 244.0,571.1 245.0,568.4 246.0,566.3 247.0,562.2 248.0,560.3 249.0,557.2 250.0,554.5 251.0,551.3 252.0,548.8 253.0,545.3 254.0,543.0 255.0,540.2 256.0,537.4 257.0,534.7 258.0,531.5 259.0,527.6 260.0,525.7 261.0,522.6 262.0,520.6 263.0,516.9 264.0,514.3 265.0,513.8 266.0,508.9 267.0,506.0 268.0,503.6 269.0,501.4 270.0,499.8 271.0,496.6 272.0,493.8 273.0,491.7 274.0,489.5 275.0,485.6 276.0,484.5 277.0,481.4 278.0,479.7 279.0,476.1 280.0,474.0 281.0,472.2 282.0,470.9 283.0,467.1 284.0,464.8 285.0,462.7 286.0,460.9 287.0,457.7 288.0,456.5 289.0,454.5 290.0,451.5 291.0,449.9 292.0,446.9 293.0,445.0 294.0,442.7 295.0,441.3 296.0,438.6 297.0,438.2 298.0,435.9 299.0,434.1 300.0,432.0 301.0,429.4 302.0,427.3 303.0,426.7 304.0,425.0 305.0,423.2 306.0,420.0 307.0,419.5 308.0,417.4 309.0,415.2 310.0,413.9 311.0,410.5 312.0,411.1 313.0,408.7 314.0,407.7 315.0,406.4 316.0,404.2 317.0,403.7 318.0,402.2 319.0,400.1 320.0,403.0 321.0,397.7 322.0,395.7 323.0,395.6 324.0,393.9 325.0,393.7 326.0,392.1 327.0,389.9 328.0,389.2 329.0,387.9 330.0,386.7 331.0,385.7 332.0,385.2 333.0,384.2 334.0,384.2 335.0,383.2 336.0,381.0 337.0,380.1 338.0,379.1 339.0,380.0 340.0,378.1 341.0,377.4 342.0,376.8 343.0,377.0 344.0,374.8 345.0,375.5 346.0,374.8 347.0,373.9 348.0,373.2 349.0,373.4 350.0,373.5 351.0,372.0 352.0,372.4 353.0,371.9 354.0,372.1 355.0,370.8 356.0,370.1 357.0,369.9 358.0,370.4 359.0,370.0 360.0,369.9 361.0,370.8 362.0,370.0 363.0,369.8 364.0,370.5 365.0,369.8 366.0,369.9 367.0,370.3 368.0,370.1 369.0,370.0 370.0,369.9 371.0,370.3 372.0,370.7 373.0,370.8 374.0,372.4 375.0,373.1 376.0,372.8 377.0,372.4 378.0,373.5 379.0,374.6 380.0,374.5 381.0,375.9 382.0,376.0 383.0,373.0 384.0,376.3 385.0,378.0 386.0,377.9 387.0,379.5 388.0,380.9 389.0,381.7 390.0,381.5 391.0,382.1 392.0,384.4 393.0,383.8 394.0,384.8 395.0,387.0 396.0,387.3 397.0,389.0 398.0,389.5 399.0,390.9 400.0,391.7 401.0,393.7 402.0,394.3 403.0,394.9 404.0,399.2 405.0,398.6 406.0,398.5 407.0,400.6 408.0,402.2 409.0,403.4 410.0,405.8 411.0,406.6 412.0,407.7 413.0,410.2 414.0,411.5 415.0,413.5 416.0,413.9 417.0,415.4 418.0,416.9 419.0,419.2 420.0,421.7 421.0,423.5 422.0,423.8 423.0,426.4 424.0,428.3 425.0,430.7 426.0,432.3 427.0,433.3 428.0,436.3 429.0,438.0 430.0,440.0 431.0,440.9 432.0,444.1 433.0,446.0 434.0,447.6 435.0,450.7 436.0,451.9 437.0,454.8 438.0,456.3 439.0,458.4 440.0,460.8 441.0,463.5 442.0,469.1 443.0,467.7 444.0,469.3 445.0,472.1 446.0,475.1 447.0,476.3 448.0,479.9 449.0,481.8 450.0,484.7 451.0,487.6 452.0,488.6 453.0,491.1 454.0,494.3 455.0,496.2 456.0,499.4 457.0,501.6 458.0,504.1 459.0,507.4 460.0,510.4 461.0,512.6 462.0,515.1 463.0,518.7 464.0,521.0 465.0,522.9 466.0,526.7 467.0,529.6 468.0,532.0 469.0,534.3 470.0,536.6 471.0,540.1 472.0,542.7 473.0,546.3 474.0,548.0 475.0,551.3 476.0,555.3 477.0,557.5 478.0,560.1 479.0,560.8 480.0,565.5 481.0,569.4 482.0,572.9 483.0,574.9 484.0,578.4 485.0,581.8 486.0,583.9 487.0,586.8 488.0,589.8 489.0,592.9 490.0,595.8 491.0,598.7 492.0,602.8 493.0,606.4 494.0,609.0 495.0,610.4 496.0,615.8 497.0,617.6 498.0,621.9 499.0,622.8 500.0,626.9 501.0,629.9 502.0,633.4 503.0,637.0 504.0,641.0 505.0,643.6 506.0,647.1 507.0,648.9 508.0,652.4 509.0,655.8 510.0,660.0 511.0,663.3 512.0,665.9 513.0,669.2 514.0,671.8 515.0,674.8 516.0,677.8 517.0,681.8 518.0,684.3 519.0,688.2 520.0,691.2 521.0,693.1 522.0,697.3 523.0,700.5 524.0,703.7 525.0,707.3 526.0,710.3 527.0,713.3 528.0,717.6 529.0,720.2 530.0,723.6 531.0,725.8 532.0,729.5 533.0,733.2 534.0,735.8 535.0,740.1 536.0,741.9 537.0,745.4 538.0,749.2 539.0,748.8 540.0,755.8 541.0,757.7 542.0,760.6 543.0,764.3 544.0,768.1 545.0,770.8 546.0,774.2 547.0,777.3 548.0,778.9 549.0,783.0 550.0,785.5 551.0,790.2 552.0,792.0 553.0,795.0 554.0,798.8 555.0,800.9 556.0,804.6 557.0,808.3 558.0,810.5 559.0,812.9 560.0,816.5 561.0,819.0 562.0,822.9 563.0,824.6 564.0,827.5 565.0,831.5 566.0,836.4 567.0,837.4 568.0,840.0 569.0,843.0 570.0,845.8 571.0,848.6 572.0,851.9 573.0,852.9 574.0,857.0 575.0,859.6 576.0,862.7 577.0,864.1 578.0,864.6 579.0,869.9 580.0,873.7 581.0,876.2 582.0,878.7 583.0,881.5 584.0,884.1 585.0,885.3 586.0,888.4 587.0,890.7 588.0,893.6 589.0,895.5 590.0,898.4 591.0,901.1 592.0,903.3 593.0,906.2 594.0,908.6 595.0,910.0 596.0,912.8 597.0,914.7 598.0,917.8 599.0,919.6 600.0,921.4 601.0,923.9 602.0,926.1 603.0,929.0 604.0,930.2 605.0,933.1 606.0,935.2 607.0,936.6 608.0,942.1 609.0,941.2 610.0,944.0 611.0,944.6 612.0,946.4 613.0,949.5 614.0,950.7 615.0,952.8 616.0,955.4 617.0,957.2 618.0,958.2 619.0,961.0 620.0,961.2 621.0,964.3 622.0,965.0 623.0,967.6 624.0,968.0 625.0,970.0 626.0,972.5 627.0,973.2 628.0,973.7 629.0,975.3 630.0,978.3 631.0,979.6 632.0,981.4 633.0,982.3 634.0,982.9 635.0,985.5 636.0,986.3 637.0,985.8 638.0,988.9 639.0,989.9 640.0,990.5 641.0,992.0 642.0,994.0 643.0,995.3 644.0,996.1 645.0,996.6 646.0,996.7 647.0,999.0 648.0,999.9 649.0,1000.3 650.0,1000.7 651.0,1002.5 652.0,1002.9 653.0,1004.2 654.0,1004.0 655.0,1005.0 656.0,1005.1 657.0,1003.1 658.0,1006.4 659.0,1007.6 660.0,1007.9 661.0,1008.8 662.0,1008.7 663.0,1009.8 664.0,1010.9 665.0,1011.3 666.0,1010.7 667.0,1011.4 668.0,1010.9 669.0,1011.7 670.0,1012.4 671.0,1012.1 672.0,1013.2 673.0,1012.6 674.0,1012.6 675.0,1012.3 676.0,1013.3 677.0,1012.8 678.0,1013.5 679.0,1013.5 680.0,1011.3 681.0,1013.6 682.0,1012.9 683.0,1012.4 684.0,1011.7 685.0,1012.4 686.0,1012.0 687.0,1011.7 688.0,1011.1 689.0,1010.9 690.0,1010.3 691.0,1009.3 692.0,1009.8 693.0,1009.2 694.0,1008.6 695.0,1007.8 696.0,1007.5 697.0,1006.5 698.0,1006.9 699.0,1005.7 700.0,1007.9 701.0,1004.8 702.0,1002.8 703.0,1001.8 704.0,1004.3 705.0,1000.6 706.0,1000.1 707.0,999.5 708.0,998.6 709.0,996.1 710.0,995.1 711.0,995.1 712.0,993.1 713.0,992.2 714.0,992.2 715.0,991.2 716.0,989.7 717.0,988.7 718.0,987.1 719.0,984.6 720.0,984.1 721.0,983.3 722.0,981.7 723.0,980.4 724.0,977.9 725.0,976.6 726.0,976.1 727.0,974.4 728.0,972.0 729.0,971.7 730.0,969.3 731.0,966.8 732.0,966.4 733.0,964.0 734.0,962.3 735.0,961.1 736.0,959.1 737.0,958.0 738.0,955.5 739.0,953.1 740.0,951.5 741.0,949.1 742.0,948.1 743.0,945.7 744.0,943.5 745.0,941.1 746.0,939.5 747.0,938.0 748.0,936.0 749.0,934.2 750.0,932.2 751.0,929.8 752.0,927.2 753.0,925.9 754.0,922.1 755.0,920.6 756.0,917.8 757.0,915.9 758.0,913.2 759.0,910.9 760.0,909.1 761.0,906.7 762.0,903.4 763.0,903.2 764.0,899.5 765.0,896.5 766.0,894.1 767.0,891.5 768.0,889.7 769.0,886.9 770.0,884.6 771.0,881.1 772.0,879.6 773.0,877.2 774.0,873.1 775.0,870.5 776.0,867.8 777.0,865.4 778.0,863.1 779.0,861.0 780.0,857.0 781.0,854.1 782.0,851.5 783.0,849.9 784.0,847.9 785.0,843.6 786.0,840.7 787.0,837.3 788.0,835.2 789.0,832.2 790.0,830.0 791.0,825.9 792.0,824.3 793.0,820.9 794.0,817.6 795.0,814.3 796.0,812.4 797.0,808.6 798.0,807.5 799.0,803.0 800.0,799.7 801.0,796.4 802.0,794.1 803.0,790.9 804.0,787.4 805.0,784.2 806.0,781.1 807.0,778.6 808.0,775.8 809.0,772.2 810.0,768.3 811.0,765.1 812.0,761.9 813.0,759.4 814.0,756.3 815.0,753.2 816.0,750.2 817.0,747.8 818.0,743.7 819.0,741.5 820.0,737.8 821.0,734.1 822.0,730.7 823.0,727.1 824.0,725.4 825.0,721.4 826.0,717.9 827.0,715.2 828.0,712.7 829.0,708.2 830.0,705.0 831.0,703.0 832.0,699.2 833.0,695.1 834.0,692.0 835.0,689.0 836.0,685.6 837.0,682.1 838.0,679.3 839.0,675.9 840.0,673.4 841.0,670.8 842.0,666.5 843.0,666.1 844.0,659.8 845.0,657.2 846.0,654.8 847.0,650.2 848.0,648.0 849.0,644.2 850.0,640.9 851.0,637.9 852.0,634.7 853.0,632.2 854.0,629.3 855.0,625.2 856.0,622.5 857.0,619.8 858.0,616.1 859.0,612.7 860.0,610.7 861.0,607.7 862.0,604.4 863.0,600.2 864.0,597.9 865.0,594.7 866.0,592.2 867.0,588.0 868.0,584.9 869.0,582.8 870.0,579.7 871.0,576.3 872.0,571.5 873.0,571.2 874.0,567.3 875.0,564.8 876.0,561.8 877.0,558.7 878.0,555.1 879.0,553.6 880.0,550.8 881.0,547.6 882.0,544.6 883.0,542.1 884.0,539.1 885.0,536.1 886.0,532.5 887.0,530.6 888.0,527.9 889.0,523.9 890.0,521.9 891.0,518.8 892.0,515.7 893.0,513.2 894.0,510.7 895.0,508.0 896.0,505.1 897.0,505.4 898.0,503.5 899.0,497.4 900.0,494.5 901.0,493.2 902.0,490.3 903.0,487.4 904.0,485.1 905.0,483.6 906.0,482.6 907.0,478.6 908.0,475.7 909.0,472.7 910.0,470.5 911.0,468.0 912.0,466.4 913.0,464.2 914.0,462.5 915.0,459.6 916.0,458.1 917.0,454.4 918.0,453.3 919.0,451.1 920.0,449.5 921.0,446.5 922.0,445.0 923.0,441.8 924.0,441.0 925.0,438.8 926.0,435.8 927.0,434.5 928.0,433.4 929.0,430.6 930.0,429.1 931.0,427.9 932.0,424.5 933.0,422.6 934.0,421.5 935.0,419.8 936.0,418.7 937.0,416.1 938.0,414.9 939.0,413.5 940.0,411.4 941.0,411.0 942.0,405.4 943.0,406.3 944.0,406.2 945.0,405.0 946.0,402.8 947.0,400.4 948.0,399.5 949.0,397.8 950.0,397.1 951.0,395.8 952.0,395.2 953.0,393.7 954.0,392.5 955.0,392.0 956.0,389.2 957.0,389.2 958.0,388.6 959.0,387.5 960.0,386.0 961.0,384.5 962.0,384.1 963.0,383.0 964.0,382.2 965.0,381.3 966.0,379.5 967.0,379.7 968.0,379.7 969.0,378.1 970.0,377.5 971.0,376.3 972.0,378.8 973.0,374.6 974.0,375.5 975.0,374.2 976.0,374.2 977.0,373.6 978.0,373.1 979.0,373.0 980.0,371.7 981.0,371.6 982.0,372.0 983.0,371.3 984.0,370.1 985.0,370.7 986.0,369.9 987.0,370.1 988.0,371.0 989.0,369.8 990.0,369.4 991.0,370.4 992.0,369.3 993.0,370.0 994.0,370.7 995.0,369.7 996.0,370.9 997.0,369.6 998.0,371.3 999.0,371.4 1000.0,371.4 1001.0,372.3 1002.0,372.4 1003.0,371.8 1004.0,372.8 1005.0,373.0 1006.0,372.9 1007.0,373.2 1008.0,375.1 1009.0,375.3 1010.0,374.8 1011.0,376.6 1012.0,376.0 1013.0,377.9 1014.0,378.7 1015.0,378.1 1016.0,380.3 1017.0,379.6 1018.0,380.5 1019.0,381.3 1020.0,383.2 1021.0,383.7 1022.0,384.0 1023.0,385.3 1024.0,387.2 1025.0,387.9 1026.0,388.2 1027.0,389.6 1028.0,391.6 1029.0,392.0 1030.0,394.2 1031.0,394.7 1032.0,396.7 1033.0,397.2 1034.0,399.2 1035.0,399.5 1036.0,401.3 1037.0,402.0 1038.0,405.0 1039.0,405.3 1040.0,407.7 1041.0,407.9 1042.0,410.5 1043.0,411.9 1044.0,413.3 1045.0,414.8 1046.0,417.3 1047.0,419.0 1048.0,420.7 1049.0,422.4 1050.0,424.1 1051.0,428.5 1052.0,427.6 1053.0,429.4 1054.0,431.2 1055.0,432.4 1056.0,435.1 1057.0,435.7 1058.0,437.9 1059.0,440.3 1060.0,443.1 1061.0,444.7 1062.0,445.8 1063.0,448.7 1064.0,450.7 1065.0,452.8 1066.0,454.9 1067.0,458.1 1068.0,459.6 1069.0,461.3 1070.0,464.0 1071.0,467.1 1072.0,465.6 1073.0,470.6 1074.0,473.9 1075.0,476.1 1076.0,478.1 1077.0,479.6 1078.0,483.1 1079.0,485.1 1080.0,488.3 1081.0,489.5 1082.0,493.1 1083.0,494.5 1084.0,497.0 1085.0,500.7 1086.0,502.9 1087.0,505.1 1088.0,508.9 1089.0,511.3 1090.0,514.2 1091.0,516.6 1092.0,519.1 1093.0,522.6 1094.0,524.5 1095.0,526.5 1096.0,529.5 1097.0,531.9 1098.0,536.2 1099.0,538.8 1100.0,540.7 1101.0,543.7 1102.0,546.7 1103.0,549.9 1104.0,553.6 1105.0,559.1 1106.0,557.7 1107.0,561.3 1108.0,564.1 1109.0,567.9 1110.0,570.8 1111.0,572.5 1112.0,575.8 1113.0,578.4 1114.0,582.6 1115.0,585.6 1116.0,588.8 1117.0,590.9 1118.0,594.7 1119.0,597.0 1120.0,600.4 1121.0,603.5 1122.0,607.0 1123.0,610.4 1124.0,613.5 1125.0,615.4 1126.0,619.3 1127.0,623.1 1128.0,625.2 1129.0,629.1 1130.0,631.4 1131.0,634.7 1132.0,637.9 1133.0,641.3 1134.0,643.7 1135.0,650.2 1136.0,650.5 1137.0,653.4 1138.0,656.6 1139.0,660.1 1140.0,663.6 1141.0,667.0 1142.0,670.5 1143.0,674.1 1144.0,676.6 1145.0,679.4 1146.0,683.6 1147.0,685.4 1148.0,691.5 1149.0,692.1 1150.0,696.4 1151.0,699.0 1152.0,701.7 1153.0,705.3 1154.0,708.1 1155.0,711.0 1156.0,714.4 1157.0,718.3 1158.0,722.0 1159.0,724.9 1160.0,727.2 1161.0,731.5 1162.0,735.0 1163.0,737.2 1164.0,740.3 1165.0,744.5 1166.0,747.0 1167.0,749.4 1168.0,753.8 1169.0,756.6 1170.0,760.4 1171.0,763.2 1172.0,765.5 1173.0,768.8 1174.0,771.2 1175.0,775.0 1176.0,778.2 1177.0,781.0 1178.0,783.6 1179.0,786.8 1180.0,790.9 1181.0,794.5 1182.0,797.5 1183.0,800.1 1184.0,805.9 1185.0,805.6 1186.0,809.3 1187.0,810.9 1188.0,811.7 1189.0,818.5 1190.0,820.1 1191.0,824.3 1192.0,826.6 1193.0,829.2 1194.0,831.4 1195.0,834.4 1196.0,837.3 1197.0,841.5 1198.0,842.9 1199.0,846.5 1200.0,848.7 1201.0,852.7 1202.0,855.6 1203.0,857.2 1204.0,860.3 1205.0,863.3 1206.0,865.9 1207.0,869.4 1208.0,870.3 1209.0,873.5 1210.0,879.3 1211.0,879.1 1212.0,882.1 1213.0,884.8 1214.0,887.3 1215.0,889.5 1216.0,892.4 1217.0,894.1 1218.0,897.5 1219.0,898.7 1220.0,901.1 1221.0,904.7 1222.0,907.1 1223.0,909.1 1224.0,911.6 1225.0,913.9 1226.0,916.5 1227.0,917.6 1228.0,920.4 1229.0,922.9 1230.0,924.8 1231.0,927.0 1232.0,930.2 1233.0,931.4 1234.0,933.8 1235.0,937.9 1236.0,938.6 1237.0,939.8 1238.0,941.1 1239.0,944.5 1240.0,945.5 1241.0,948.4 1242.0,949.6 1243.0,952.2 1244.0,954.2 1245.0,955.6 1246.0,957.6 1247.0,958.4 1248.0,961.2 1249.0,963.1 1250.0,964.2 1251.0,966.7 1252.0,966.9 1253.0,969.1 1254.0,971.6 1255.0,971.7 1256.0,973.7 1257.0,975.2 1258.0,977.5 1259.0,978.8 1260.0,980.7 1261.0,981.0 1262.0,982.0 1263.0,984.2 1264.0,982.4 1265.0,986.7 1266.0,987.5 1267.0,989.8 1268.0,989.9 1269.0,991.1 1270.0,992.0 1271.0,993.6 1272.0,994.2 1273.0,995.2 1274.0,996.6 1275.0,998.3 1276.0,998.8 1277.0,1000.3 1278.0,1000.5 1279.0,1001.1 1280.0,1002.4 1281.0,1003.0 1282.0,1003.3 1283.0,1004.4 1284.0,1005.3 1285.0,1005.5 1286.0,1006.4 1287.0,1008.9 1288.0,1007.8 1289.0,1008.0 1290.0,1009.6 1291.0,1009.2 1292.0,1009.6 1293.0,1010.1 1294.0,1011.3 1295.0,1011.8 1296.0,1008.4 1297.0,1011.3 1298.0,1012.6 1299.0,1012.1 1300.0,1013.3 1301.0,1015.7 1302.0,1012.3 1303.0,1012.2 1304.0,1012.7 1305.0,1012.6 1306.0,1012.5 1307.0,1013.8 1308.0,1013.3 1309.0,1012.4 1310.0,1014.4 1311.0,1012.3 1312.0,1012.3 1313.0,1011.7 1314.0,1012.2 1315.0,1011.7 1316.0,1012.0 1317.0,1010.4 1318.0,1010.6 1319.0,1010.3 1320.0,1010.5 1321.0,1008.5 1322.0,1007.9 1323.0,1007.6 1324.0,1008.2 1325.0,1006.7 1326.0,1006.8 1327.0,1006.2 1328.0,1005.0 1329.0,1004.7 1330.0,1003.0 1331.0,1002.7 1332.0,1001.8 1333.0,1001.3 1334.0,1000.9 1335.0,999.1 1336.0,999.1 1337.0,998.0 1338.0,997.0 1339.0,994.8 1340.0,993.7 1341.0,993.0 1342.0,992.3 1343.0,991.4 1344.0,990.4 1345.0,988.3 1346.0,987.9 1347.0,985.9 1348.0,984.2 1349.0,983.4 1350.0,981.9 1351.0,980.8 1352.0,980.0 1353.0,978.2 1354.0,977.1 1355.0,975.0 1356.0,973.0 1357.0,972.4 1358.0,969.5 1359.0,971.6 1360.0,967.0 1361.0,965.4 1362.0,963.7 1363.0,962.6 1364.0,959.5 1365.0,958.6 1366.0,956.9 1367.0,952.1 1368.0,953.4 1369.0,951.0 1370.0,948.4 1371.0,947.8 1372.0,945.0 1373.0,942.8 1374.0,941.7 1375.0,938.8 1376.0,937.0 1377.0,934.7 1378.0,933.2 1379.0,930.8 1380.0,928.6 1381.0,925.5 1382.0,924.6 1383.0,922.6 1384.0,919.4 1385.0,918.0 1386.0,916.0 1387.0,912.0 1388.0,909.7 1389.0,907.8 1390.0,905.6 1391.0,904.1 1392.0,901.0 1393.0,898.1 1394.0,895.7 1395.0,894.3 1396.0,891.6 1397.0,887.8 1398.0,885.2 1399.0,884.2 1400.0,881.6 1401.0,876.0 1402.0,874.7 1403.0,872.5 1404.0,870.3 1405.0,867.2 1406.0,865.2 1407.0,862.0 1408.0,858.7 1409.0,856.8 1410.0,854.5 1411.0,851.7 1412.0,848.3 1413.0,845.0 1414.0,843.5 1415.0,838.9 1416.0,836.7 1417.0,833.4 1418.0,830.9 1419.0,828.0 1420.0,824.8 1421.0,822.6 1422.0,818.7 1423.0,816.9 1424.0,814.3 1425.0,810.4 1426.0,807.7 1427.0,807.3 1428.0,801.1 1429.0,798.3 1430.0,796.3 1431.0,793.1 1432.0,789.4 1433.0,787.1 1434.0,783.0 1435.0,779.7 1436.0,777.4 1437.0,774.7 1438.0,771.2 1439.0,767.1 1440.0,765.5 1441.0,761.4 1442.0,759.2 1443.0,755.3 1444.0,752.1 1445.0,749.3 1446.0,746.4 1447.0,742.7 1448.0,738.9 1449.0,735.4 1450.0,733.2 1451.0,730.6 1452.0,726.1 1453.0,723.6 1454.0,719.4 1455.0,717.4 1456.0,713.4 1457.0,711.3 1458.0,708.6 1459.0,704.4 1460.0,700.1 1461.0,697.3 1462.0,695.5 1463.0,690.6 1464.0,687.5 1465.0,684.8 1466.0,681.4 1467.0,678.5 1468.0,675.1 1469.0,671.8 1470.0,668.3 1471.0,665.9 1472.0,663.2 1473.0,659.7 1474.0,655.9 1475.0,653.1 1476.0,649.7 1477.0,646.9 1478.0,643.2 1479.0,640.1 1480.0,637.7 1481.0,633.9 1482.0,630.2 1483.0,628.0 1484.0,624.7 1485.0,621.0 1486.0,618.0 1487.0,615.6 1488.0,611.6 1489.0,608.0 1490.0,605.6 1491.0,602.8 1492.0,596.8 1493.0,595.6 1494.0,592.5 1495.0,590.5 1496.0,587.9 1497.0,585.0 1498.0,581.4 1499.0,577.7 1500.0,574.3 1501.0,571.9 1502.0,567.8 1503.0,566.4 1504.0,562.6 1505.0,560.1 1506.0,557.3 1507.0,555.4 1508.0,552.4 1509.0,549.1 1510.0,545.0 1511.0,543.3 1512.0,539.8 1513.0,538.1 1514.0,533.6 1515.0,531.4 1516.0,529.8 1517.0,526.2 1518.0,522.7 1519.0,521.2 1520.0,518.5 1521.0,514.4 1522.0,513.2 1523.0,510.0 1524.0,507.9 1525.0,507.7 1526.0,501.9 1527.0,500.0 1528.0,497.8 1529.0,495.1 1530.0,491.1 1531.0,488.8 1532.0,486.5 1533.0,483.6 1534.0,481.2 1535.0,479.5 1536.0,477.1 1537.0,474.4 1538.0,472.8 1539.0,470.7 1540.0,468.3 1541.0,465.5 1542.0,463.2 1543.0,460.1 1544.0,459.5 1545.0,456.8 1546.0,453.7 1547.0,452.7 1548.0,449.5 1549.0,447.7 1550.0,445.1 1551.0,443.9 1552.0,441.1 1553.0,438.3 1554.0,437.7 1555.0,436.5 1556.0,434.0 1557.0,432.4 1558.0,429.1 1559.0,428.7 1560.0,425.6 1561.0,424.8 1562.0,421.9 1563.0,420.1 1564.0,419.0 1565.0,416.7 1566.0,415.4 1567.0,414.1 1568.0,414.7 1569.0,411.5 1570.0,408.6 1571.0,408.7 1572.0,405.9 1573.0,405.7 1574.0,403.5 1575.0,401.4 1576.0,401.0 1577.0,399.6 1578.0,397.8 1579.0,395.9 1580.0,396.2 1581.0,393.5 1582.0,392.5 1583.0,391.3 1584.0,391.3 1585.0,389.4 1586.0,388.1 1587.0,387.8 1588.0,386.2 1589.0,386.0 1590.0,383.8 1591.0,383.8 1592.0,382.7 1593.0,382.2 1594.0,380.9 1595.0,379.6 1596.0,378.5 1597.0,379.2 1598.0,377.1 1599.0,377.3 1600.0,375.6 1601.0,376.0 1602.0,374.5 1603.0,374.2 1604.0,374.2 1605.0,374.5 1606.0,373.1 1607.0,373.4 1608.0,372.8 1609.0,372.4 1610.0,372.5 1611.0,371.8 1612.0,371.2 1613.0,370.3 1614.0,370.1 1615.0,370.4 1616.0,370.6 1617.0,371.0 1618.0,370.6 1619.0,370.3 1620.0,370.8 1621.0,369.5 1622.0,370.1 1623.0,369.4 1624.0,369.5 1625.0,370.3 1626.0,370.6 1627.0,370.6 1628.0,370.1 1629.0,372.1 1630.0,371.3 1631.0,372.3 1632.0,370.2 1633.0,372.1 1634.0,372.9 1635.0,374.4 1636.0,374.2 1637.0,374.8 1638.0,375.7 1639.0,374.9 1640.0,376.4 1641.0,376.2 1642.0,377.4 1643.0,378.0 1644.0,378.9 1645.0,380.6 1646.0,380.3 1647.0,382.4 1648.0,381.9 1649.0,382.5 1650.0,384.8 1651.0,385.7 1652.0,386.9 1653.0,387.8 1654.0,389.0 1655.0,388.9 1656.0,388.1 1657.0,392.3 1658.0,393.4 1659.0,394.0 1660.0,394.5 1661.0,397.2 1662.0,397.8 1663.0,399.7 1664.0,403.2 1665.0,401.2 1666.0,402.6 1667.0,404.8 1668.0,406.1 1669.0,408.0 1670.0,408.8 1671.0,411.5 1672.0,413.2 1673.0,413.7 1674.0,415.1 1675.0,417.9 1676.0,418.9 1677.0,421.3 1678.0,421.6 1679.0,424.1 1680.0,425.3 1681.0,429.4 1682.0,428.9 1683.0,431.3 1684.0,432.9 1685.0,431.9 1686.0,436.5 1687.0,440.1 1688.0,441.7 1689.0,443.3 1690.0,445.5 1691.0,447.1 1692.0,449.8 1693.0,449.3 1694.0,454.0 1695.0,456.8 1696.0,457.5 1697.0,460.8 1698.0,463.5 1699.0,464.2 1700.0,466.5 1701.0,469.7 1702.0,474.2 1703.0,473.8 1704.0,477.2 1705.0,479.5 1706.0,481.5 1707.0,482.9 1708.0,486.5 1709.0,488.8 1710.0,490.8 1711.0,493.0 1712.0,495.9 1713.0,499.0 1714.0,502.3 1715.0,503.6 1716.0,507.4 1717.0,509.2 1718.0,512.9 1719.0,514.1 1720.0,517.1 1721.0,520.5 1722.0,522.5 1723.0,526.1 1724.0,528.5 1725.0,530.7 1726.0,533.9 1727.0,537.2 1728.0,539.3 1729.0,543.0 1730.0,546.0 1731.0,547.3 1732.0,550.1 1733.0,554.2 1734.0,556.7 1735.0,559.1 1736.0,563.2 1737.0,565.7 1738.0,568.0 1739.0,570.7 1740.0,574.6 1741.0,577.6 1742.0,580.5 1743.0,583.1 1744.0,587.4 1745.0,588.7 1746.0,592.1 1747.0,595.8 1748.0,599.6 1749.0,602.5 1750.0,605.2 1751.0,607.7 1752.0,611.8 1753.0,613.5 1754.0,618.2 1755.0,620.0 1756.0,624.5 1757.0,627.1 1758.0,629.2 1759.0,633.7 1760.0,635.7 1761.0,636.8 1762.0,642.8 1763.0,646.0 1764.0,648.3 1765.0,651.6 1766.0,654.8 1767.0,657.8 1768.0,662.0 1769.0,665.5 1770.0,668.9 1771.0,672.2 1772.0,673.9 1773.0,677.2 1774.0,681.1 1775.0,684.2 1776.0,687.7 1777.0,690.6 1778.0,693.7 1779.0,696.6 1780.0,700.3 1781.0,702.7 1782.0,707.6 1783.0,710.4 1784.0,712.4 1785.0,717.0 1786.0,718.7 1787.0,723.0 1788.0,726.2 1789.0,728.6 1790.0,731.7 1791.0,736.1 1792.0,738.7 1793.0,741.9 1794.0,744.1 1795.0,747.4 1796.0,752.1 1797.0,753.9 1798.0,757.3 1799.0,761.1 1800.0,764.4 1801.0,767.7 1802.0,770.7 1803.0,772.9 1804.0,776.2 1805.0,780.2 1806.0,782.6 1807.0,786.4 1808.0,788.5 1809.0,791.9 1810.0,794.4 1811.0,798.2 1812.0,801.7 1813.0,804.8 1814.0,807.0 1815.0,809.7 1816.0,812.9 1817.0,816.3 1818.0,818.4 1819.0,821.0 1820.0,825.3 1821.0,828.4 1822.0,830.3 1823.0,833.6 1824.0,837.0 1825.0,840.8 1826.0,842.3 1827.0,844.1 1828.0,848.4 1829.0,850.4 1830.0,852.7 1831.0,855.2 1832.0,859.2 1833.0,862.0 1834.0,864.8 1835.0,867.7 1836.0,869.7 1837.0,872.8 1838.0,875.2 1839.0,877.3 1840.0,880.8 1841.0,882.4 1842.0,884.5 1843.0,887.6 1844.0,891.2 1845.0,892.7 1846.0,895.5 1847.0,897.8 1848.0,901.2 1849.0,902.8 1850.0,904.6 1851.0,907.6 1852.0,912.9 1853.0,911.6 1854.0,913.8 1855.0,916.3 1856.0,919.1 1857.0,921.3 1858.0,923.5 1859.0,925.5 1860.0,927.5 1861.0,930.4 1862.0,934.0 1863.0,934.3 1864.0,936.3 1865.0,938.3 1866.0,940.3 1867.0,942.6 1868.0,944.4 1869.0,946.8 1870.0,948.9 1871.0,949.8 1872.0,951.8 1873.0,953.7 1874.0,955.9 1875.0,957.5 1876.0,959.2 1877.0,961.8 1878.0,962.8 1879.0,965.3 1880.0,966.8 1881.0,968.2 1882.0,969.6 1883.0,971.3 1884.0,972.3 1885.0,975.2 1886.0,975.9 1887.0,977.1 1888.0,978.4 1889.0,980.5 1890.0,982.7 1891.0,984.0 1892.0,983.7 1893.0,986.7 1894.0,987.3" fill="none" stroke="#e68e42" stroke-width="2.1"/><path d="M10 83h10.5l-10.5 10z" fill="#e8902e"/><path d="M11.5 95.8h19.5v20h-6.5l-3.7 8.2l-3.7-8.2h-5.6z" fill="#000" stroke="#e08a30" stroke-width="2.2" stroke-linejoin="round"/><text x="20.8" y="111.8" font-family="Liberation Sans" font-weight="700" font-size="15" fill="#d8c4a8" text-anchor="middle">T</text><path d="M12.5 173h20l7.5 9.5l-7.5 9.5h-20z" fill="#f0e84a" stroke="#f0e84a" stroke-width="1" stroke-linejoin="round"/><text x="25.3" y="186.3" font-family="Liberation Sans" font-weight="700" font-size="11" fill="#3a3a12" text-anchor="middle" letter-spacing="0.6">C 1</text><path d="M1844 93.5h42v41z" fill="#4e5154" stroke="#2a98c4" stroke-width="3" stroke-linejoin="round"/><line x1="1866" y1="113" x2="1876" y2="102" stroke="#2a9ccc" stroke-width="3"/><circle cx="1878.5" cy="99.5" r="4.5" fill="none" stroke="#2a9ccc" stroke-width="2.2"/><path d="M16 674.5h30l14.5 17.5l-14.5 17.5h-30a4 4 0 0 1-4-4v-27a4 4 0 0 1 4-4z" fill="#f2ea48"/><text x="36.5" y="697.2" font-family="Liberation Sans" font-weight="400" font-size="14.5" fill="#222" stroke="#222" stroke-width="0.3" text-anchor="middle" letter-spacing="0.3">C 1</text><path d="M1128.0 368.8L1128.0 391.5L1133.6 389.6L1138.1 396.6L1140.8 395.6L1139.2 388.4L1144.4 385.8z" fill="#1e1e1e" stroke="#bdbdbd" stroke-width="2.2" stroke-linejoin="round"/><path d="M1734.7 465.7L1734.7 488.4L1740.3 486.5L1744.8 493.5L1747.5 492.5L1745.9 485.3L1751.1 482.7z" fill="#1e1e1e" stroke="#b8b8b8" stroke-width="2.2" stroke-linejoin="round"/><path d="M966.8 693.8L966.8 713.0L971.7 708.2L975.3 715.4L977.8 714.2L974.1 707.0L980.2 707.0z" fill="#000" stroke="#d4d4d4" stroke-width="1.4" stroke-linejoin="miter"/><path d="M1869.2 290.5l14 14.5M1883.2 290.5l-14 14.5" stroke="#b6b6b6" stroke-width="2.6" stroke-linecap="round"/><circle cx="1908" cy="549.5" r="2.6" fill="#a8a8a8"/><circle cx="1908" cy="559" r="2.6" fill="#a8a8a8"/><circle cx="1908" cy="568.5" r="2.6" fill="#a8a8a8"/></svg><div class="t" style="left:26.23px;top:287.23px;font-size:17.44px;color:#141414;font-weight:400;transform:scaleX(1.0554);-webkit-text-stroke:0.55px #141414;">Horizontal Zoom Scale</div><div style="position:absolute;left:225px;top:286px;width:121px;height:23px;background:#e2e2e2;border-radius:3px"></div><div class="t" style="left:231.68px;top:287.85px;font-size:16.72px;color:#111;font-weight:400;transform:scaleX(1.0728);-webkit-text-stroke:0.55px #111;">300.00 us/div</div><div style="position:absolute;left:368px;top:286px;width:48px;height:23px;background:#3a3a3a;border-radius:3px;box-shadow:inset 0 0 0 1px #474747"></div><div style="position:absolute;left:384.0px;top:296.5px;width:16px;height:2.5px;background:#8a8a8a"></div><div style="position:absolute;left:390.75px;top:289.5px;width:2.5px;height:16px;background:#8a8a8a"></div><div style="position:absolute;left:442px;top:286px;width:47px;height:23px;background:#3a3a3a;border-radius:3px;box-shadow:inset 0 0 0 1px #474747"></div><div style="position:absolute;left:457.5px;top:296.5px;width:16px;height:2.5px;background:#8a8a8a"></div><div style="position:absolute;left:778px;top:286px;width:49px;height:23px;background:#3a3a3a;border-radius:3px;box-shadow:inset 0 0 0 1px #474747"></div><div style="position:absolute;left:794.5px;top:296.5px;width:16px;height:2.5px;background:#8a8a8a"></div><div style="position:absolute;left:801.25px;top:289.5px;width:2.5px;height:16px;background:#8a8a8a"></div><div style="position:absolute;left:851px;top:286px;width:49px;height:23px;background:#3a3a3a;border-radius:3px;box-shadow:inset 0 0 0 1px #474747"></div><div style="position:absolute;left:867.5px;top:296.5px;width:16px;height:2.5px;background:#8a8a8a"></div><div class="t" style="left:503.68px;top:287.23px;font-size:17.44px;color:#141414;font-weight:400;transform:scaleX(1.0699);-webkit-text-stroke:0.55px #141414;">(33.33x zoom)</div><div class="t" style="left:647.81px;top:287.23px;font-size:17.44px;color:#141414;font-weight:400;transform:scaleX(1.0821);-webkit-text-stroke:0.55px #141414;">Vertical Zoom</div><div class="t" style="left:914.38px;top:287.23px;font-size:17.44px;color:#141414;font-weight:400;transform:scaleX(1.0694);-webkit-text-stroke:0.55px #141414;">(1.00x zoom)</div><div class="t" style="left:176.68px;top:260.50px;font-size:15.12px;color:#c8c8c8;font-weight:400;transform:scaleX(1.0088);-webkit-text-stroke:0.35px #c8c8c8;">10 ms</div><div class="t" style="left:365.75px;top:260.50px;font-size:15.12px;color:#c8c8c8;font-weight:400;transform:scaleX(0.9973);-webkit-text-stroke:0.35px #c8c8c8;">20 ms</div><div class="t" style="left:554.50px;top:260.50px;font-size:15.12px;color:#c8c8c8;font-weight:400;transform:scaleX(0.9936);-webkit-text-stroke:0.35px #c8c8c8;">30 ms</div><div class="t" style="left:743.40px;top:260.50px;font-size:15.12px;color:#c8c8c8;font-weight:400;transform:scaleX(0.9861);-webkit-text-stroke:0.35px #c8c8c8;">40 ms</div><div class="t" style="left:931.70px;top:260.50px;font-size:15.12px;color:#c8c8c8;font-weight:400;transform:scaleX(0.9936);-webkit-text-stroke:0.35px #c8c8c8;">50 ms</div><div class="t" style="left:1120.15px;top:260.50px;font-size:15.12px;color:#c8c8c8;font-weight:400;transform:scaleX(0.9973);-webkit-text-stroke:0.35px #c8c8c8;">60 ms</div><div class="t" style="left:1308.75px;top:260.50px;font-size:15.12px;color:#c8c8c8;font-weight:400;transform:scaleX(0.9973);-webkit-text-stroke:0.35px #c8c8c8;">70 ms</div><div class="t" style="left:1497.50px;top:260.50px;font-size:15.12px;color:#c8c8c8;font-weight:400;transform:scaleX(0.9936);-webkit-text-stroke:0.35px #c8c8c8;">80 ms</div><div class="t" style="left:1685.95px;top:260.50px;font-size:15.12px;color:#c8c8c8;font-weight:400;transform:scaleX(0.9973);-webkit-text-stroke:0.35px #c8c8c8;">90 ms</div><div class="t" style="left:1865.11px;top:135.39px;font-size:14.53px;color:#d8d27a;font-weight:400;transform:scaleX(1.0913);-webkit-text-stroke:0.35px #d8d27a;">2 V</div><div class="t" style="left:1864.60px;top:155.04px;font-size:14.53px;color:#d8d27a;font-weight:400;transform:scaleX(1.1144);-webkit-text-stroke:0.35px #d8d27a;">1 V</div><div class="t" style="left:1864.83px;top:174.69px;font-size:14.53px;color:#d8d27a;font-weight:400;transform:scaleX(1.1467);-webkit-text-stroke:0.35px #d8d27a;">0</div><div class="t" style="left:1859.97px;top:194.34px;font-size:14.53px;color:#d8d27a;font-weight:400;transform:scaleX(1.0877);-webkit-text-stroke:0.35px #d8d27a;">-1 V</div><div class="t" style="left:1859.97px;top:213.99px;font-size:14.53px;color:#d8d27a;font-weight:400;transform:scaleX(1.0877);-webkit-text-stroke:0.35px #d8d27a;">-2 V</div><div class="t" style="left:1859.97px;top:233.64px;font-size:14.53px;color:#d8d27a;font-weight:400;transform:scaleX(1.0877);-webkit-text-stroke:0.35px #d8d27a;">-3 V</div><div class="t" style="left:1859.97px;top:253.29px;font-size:14.53px;color:#d8d27a;font-weight:400;transform:scaleX(1.0877);-webkit-text-stroke:0.35px #d8d27a;">-4 V</div><div class="t" style="left:117.18px;top:1048.43px;font-size:15.55px;color:#cccccc;font-weight:400;transform:scaleX(0.9951);-webkit-text-stroke:0.35px #cccccc;">69.9 ms</div><div class="t" style="left:305.76px;top:1048.43px;font-size:15.55px;color:#cccccc;font-weight:400;transform:scaleX(0.9951);-webkit-text-stroke:0.35px #cccccc;">70.2 ms</div><div class="t" style="left:494.34px;top:1048.43px;font-size:15.55px;color:#cccccc;font-weight:400;transform:scaleX(0.9951);-webkit-text-stroke:0.35px #cccccc;">70.5 ms</div><div class="t" style="left:682.92px;top:1048.43px;font-size:15.55px;color:#cccccc;font-weight:400;transform:scaleX(0.9951);-webkit-text-stroke:0.35px #cccccc;">70.8 ms</div><div class="t" style="left:871.50px;top:1048.43px;font-size:15.55px;color:#cccccc;font-weight:400;transform:scaleX(0.9951);-webkit-text-stroke:0.35px #cccccc;">71.1 ms</div><div class="t" style="left:1060.08px;top:1048.43px;font-size:15.55px;color:#cccccc;font-weight:400;transform:scaleX(0.9951);-webkit-text-stroke:0.35px #cccccc;">71.4 ms</div><div class="t" style="left:1248.66px;top:1048.43px;font-size:15.55px;color:#cccccc;font-weight:400;transform:scaleX(0.9951);-webkit-text-stroke:0.35px #cccccc;">71.7 ms</div><div class="t" style="left:1443.58px;top:1048.43px;font-size:15.55px;color:#cccccc;font-weight:400;transform:scaleX(0.9986);-webkit-text-stroke:0.35px #cccccc;">72 ms</div><div class="t" style="left:1625.82px;top:1048.43px;font-size:15.55px;color:#cccccc;font-weight:400;transform:scaleX(0.9951);-webkit-text-stroke:0.35px #cccccc;">72.3 ms</div><div class="t" style="left:1814.40px;top:1048.43px;font-size:15.55px;color:#cccccc;font-weight:400;transform:scaleX(0.9951);-webkit-text-stroke:0.35px #cccccc;">72.6 ms</div><div class="t" style="left:1865.69px;top:382.59px;font-size:15.84px;color:#cdc75e;font-weight:400;transform:scaleX(0.9894);-webkit-text-stroke:0.35px #cdc75e;">4 V</div><div class="t" style="left:1865.36px;top:458.19px;font-size:15.84px;color:#cdc75e;font-weight:400;transform:scaleX(1.0030);-webkit-text-stroke:0.35px #cdc75e;">3 V</div><div class="t" style="left:1865.20px;top:533.79px;font-size:15.84px;color:#cdc75e;font-weight:400;transform:scaleX(1.0099);-webkit-text-stroke:0.35px #cdc75e;">2 V</div><div class="t" style="left:1864.69px;top:609.39px;font-size:15.84px;color:#cdc75e;font-weight:400;transform:scaleX(1.0312);-webkit-text-stroke:0.35px #cdc75e;">1 V</div><div class="t" style="left:1864.79px;top:684.99px;font-size:15.84px;color:#cdc75e;font-weight:400;transform:scaleX(1.1177);-webkit-text-stroke:0.35px #cdc75e;">0</div><div class="t" style="left:1859.55px;top:760.59px;font-size:15.84px;color:#cdc75e;font-weight:400;transform:scaleX(1.0226);-webkit-text-stroke:0.35px #cdc75e;">-1 V</div><div class="t" style="left:1859.55px;top:836.19px;font-size:15.84px;color:#cdc75e;font-weight:400;transform:scaleX(1.0226);-webkit-text-stroke:0.35px #cdc75e;">-2 V</div><div class="t" style="left:1859.55px;top:911.79px;font-size:15.84px;color:#cdc75e;font-weight:400;transform:scaleX(1.0226);-webkit-text-stroke:0.35px #cdc75e;">-3 V</div><div class="t" style="left:1859.55px;top:987.39px;font-size:15.84px;color:#cdc75e;font-weight:400;transform:scaleX(1.0226);-webkit-text-stroke:0.35px #cdc75e;">-4 V</div><svg style="position:absolute;left:0;top:0" width="2121" height="800"><path d="M1872 182.3l13.8-10.3v7.3h8.7v6h-8.7v7.3z" fill="#f0902c"/><path d="M1871 691.5l14-11.5v8h9v7h-9v8z" fill="#f0902c"/></svg><div style="position:absolute;left:1916px;top:45px;width:201px;height:1029px;box-sizing:border-box;border:solid #525252;border-width:1.5px 0 1.5px 2px;background:#2e2e2e"></div><div class="t" style="left:1961.54px;top:46.52px;font-size:21.95px;color:#ececec;font-weight:700;transform:scaleX(1.0055);">Add New...</div><div style="position:absolute;left:1926.6px;top:77.4px;width:85.40000000000009px;height:51.19999999999999px;box-sizing:border-box;border:2px solid #4c4c4c;border-top-color:#585858;border-bottom-color:#404040;border-radius:6px;background:linear-gradient(#3a3a3a,#2c2c2c 30%,#272727 80%,#222)"></div><div style="position:absolute;left:2023.3px;top:77.4px;width:85.29999999999995px;height:51.19999999999999px;box-sizing:border-box;border:2px solid #4c4c4c;border-top-color:#585858;border-bottom-color:#404040;border-radius:6px;background:linear-gradient(#3a3a3a,#2c2c2c 30%,#272727 80%,#222)"></div><div style="position:absolute;left:1926.6px;top:140px;width:85.40000000000009px;height:50.5px;box-sizing:border-box;border:2px solid #4c4c4c;border-top-color:#585858;border-bottom-color:#404040;border-radius:6px;background:linear-gradient(#3a3a3a,#2c2c2c 30%,#272727 80%,#222)"></div><div style="position:absolute;left:2023.3px;top:140px;width:85.29999999999995px;height:50.5px;box-sizing:border-box;border:2px solid #4c4c4c;border-top-color:#585858;border-bottom-color:#404040;border-radius:6px;background:linear-gradient(#3a3a3a,#2c2c2c 30%,#272727 80%,#222)"></div><div style="position:absolute;left:1926.6px;top:201.5px;width:85.40000000000009px;height:50.5px;box-sizing:border-box;border:2px solid #4c4c4c;border-top-color:#585858;border-bottom-color:#404040;border-radius:6px;background:linear-gradient(#3a3a3a,#2c2c2c 30%,#272727 80%,#222)"></div><div style="position:absolute;left:2023.3px;top:201.5px;width:85.29999999999995px;height:50.5px;box-sizing:border-box;border:2px solid #4c4c4c;border-top-color:#585858;border-bottom-color:#404040;border-radius:6px;background:linear-gradient(#3a3a3a,#2c2c2c 30%,#272727 80%,#222)"></div><div style="position:absolute;left:1926.6px;top:268.3px;width:85.40000000000009px;height:50.69999999999999px;box-sizing:border-box;border:2px solid #4c4c4c;border-top-color:#585858;border-bottom-color:#404040;border-radius:6px;background:linear-gradient(#3a3a3a,#2c2c2c 30%,#272727 80%,#222)"></div><div style="position:absolute;left:2023.3px;top:268.3px;width:85.29999999999995px;height:50.69999999999999px;box-sizing:border-box;border:2px solid #4c4c4c;border-top-color:#585858;border-bottom-color:#404040;border-radius:6px;background:linear-gradient(#3a3a3a,#2c2c2c 30%,#272727 80%,#222)"></div><div style="position:absolute;left:1922px;top:259px;width:191px;height:2px;background:#444"></div><div style="position:absolute;left:1922px;top:327.5px;width:191px;height:2px;background:#444"></div><div class="t" style="left:1934.21px;top:90.23px;font-size:21.22px;color:#e8e8e8;font-weight:400;transform:scaleX(0.9300);-webkit-text-stroke:0.35px #e8e8e8;">Cursors</div><div class="t" style="left:2031.22px;top:90.23px;font-size:21.22px;color:#e8e8e8;font-weight:400;transform:scaleX(1.0148);-webkit-text-stroke:0.35px #e8e8e8;">Callout</div><div class="t" style="left:1928.35px;top:153.49px;font-size:20.20px;color:#e8e8e8;font-weight:400;transform:scaleX(1.0201);-webkit-text-stroke:0.35px #e8e8e8;">Measure</div><div class="t" style="left:2034.02px;top:153.49px;font-size:20.20px;color:#e8e8e8;font-weight:400;transform:scaleX(0.9721);-webkit-text-stroke:0.35px #e8e8e8;">Search</div><div class="t" style="left:1935.32px;top:204.96px;font-size:19.19px;color:#e8e8e8;font-weight:400;transform:scaleX(1.0279);-webkit-text-stroke:0.35px #e8e8e8;">Results</div><div class="t" style="left:1944.99px;top:226.32px;font-size:18.75px;color:#e8e8e8;font-weight:400;transform:scaleX(1.0896);-webkit-text-stroke:0.35px #e8e8e8;">Table</div><div class="t" style="left:2044.99px;top:213.77px;font-size:20.35px;color:#e8e8e8;font-weight:400;transform:scaleX(1.1117);-webkit-text-stroke:0.35px #e8e8e8;">Plot</div><div class="t" style="left:2030.31px;top:282.19px;font-size:20.20px;color:#e8e8e8;font-weight:400;transform:scaleX(1.1095);-webkit-text-stroke:0.35px #e8e8e8;">More...</div><svg style="position:absolute;left:1950px;top:276px" width="40" height="36"><rect x="5.6" y="4.0" width="3.8" height="3" rx="1.2" fill="#9c9c9c"/><rect x="5.6" y="24.2" width="3.8" height="3" rx="1.2" fill="#9c9c9c"/><rect x="12.6" y="4.0" width="3.8" height="3" rx="1.2" fill="#9c9c9c"/><rect x="12.6" y="24.2" width="3.8" height="3" rx="1.2" fill="#9c9c9c"/><rect x="20.6" y="4.0" width="3.8" height="3" rx="1.2" fill="#9c9c9c"/><rect x="20.6" y="24.2" width="3.8" height="3" rx="1.2" fill="#9c9c9c"/><rect x="27.6" y="4.0" width="3.8" height="3" rx="1.2" fill="#9c9c9c"/><rect x="27.6" y="24.2" width="3.8" height="3" rx="1.2" fill="#9c9c9c"/><rect x="5.6" y="10.7" width="3.8" height="3" rx="1.2" fill="#9c9c9c"/><rect x="27.6" y="10.7" width="3.8" height="3" rx="1.2" fill="#9c9c9c"/><rect x="5.6" y="17.5" width="3.8" height="3" rx="1.2" fill="#9c9c9c"/><rect x="27.6" y="17.5" width="3.8" height="3" rx="1.2" fill="#9c9c9c"/><circle cx="20.6" cy="13.8" r="5.4" fill="none" stroke="#a4a4a4" stroke-width="2"/><line x1="16.6" y1="17.8" x2="11.5" y2="21.5" stroke="#b4b4b4" stroke-width="2.8" stroke-linecap="round"/><path d="M25.6 21.9L34.5 27.5L30.5 28.3L33.5 31L31.5 32.5L28.5 29.5L27 32.5z" fill="#bcbcbc"/></svg><div style="position:absolute;left:1922px;top:345.5px;width:190px;height:80px;background:#cbcbcb;border-radius:5px;overflow:hidden"></div><div style="position:absolute;left:1922px;top:345.5px;width:190px;height:23px;background:#000;border-radius:5px 5px 0 0"></div><div class="t" style="left:1926.73px;top:345.41px;font-size:19.48px;color:#e4dc5a;font-weight:400;transform:scaleX(1.1340);-webkit-text-stroke:0.35px #e4dc5a;">DVM</div><div style="position:absolute;left:2075.8px;top:349.8px;width:29.2px;height:15.8px;background:#f4ec3c;border-radius:6px"></div><div class="t" style="left:2085.68px;top:351.48px;font-size:13.37px;color:#3a3410;font-weight:400;transform:scaleX(1.0435);-webkit-text-stroke:0.6px #3a3410;">1</div><div class="t" style="left:1927.00px;top:370.71px;font-size:19.48px;color:#3c3c3c;font-weight:400;transform:scaleX(0.9646);-webkit-text-stroke:0.35px #3c3c3c;">DC</div><div class="t" style="left:1928.23px;top:397.19px;font-size:23.98px;color:#0e0e0e;font-weight:700;transform:scaleX(1.0942);">1.646 V</div><div style="position:absolute;left:10.2px;top:1085.5px;width:119.8px;height:97.5px;background:#cbcbcb;border-radius:5px"></div><div style="position:absolute;left:10.2px;top:1085.5px;width:119.8px;height:25px;background:#f2ea3a;border-radius:5px 5px 0 0"></div><div style="position:absolute;left:137px;top:1085.5px;width:120px;height:97.5px;background:#cbcbcb;border-radius:5px"></div><div style="position:absolute;left:137px;top:1085.5px;width:120px;height:25px;background:#1d4446;border-radius:5px 5px 0 0"></div><div style="position:absolute;left:263.3px;top:1085.5px;width:119.69999999999999px;height:97.5px;background:#cbcbcb;border-radius:5px"></div><div style="position:absolute;left:263.3px;top:1085.5px;width:119.69999999999999px;height:25px;background:#2f4024;border-radius:5px 5px 0 0"></div><div style="position:absolute;left:389.7px;top:1085.5px;width:119.60000000000002px;height:97.5px;background:#cbcbcb;border-radius:5px"></div><div style="position:absolute;left:389.7px;top:1085.5px;width:119.60000000000002px;height:25px;background:#4a3322;border-radius:5px 5px 0 0"></div><div class="t" style="left:16.25px;top:1086.07px;font-size:20.35px;color:#1e1e10;font-weight:400;transform:scaleX(0.9340);-webkit-text-stroke:0.35px #1e1e10;">Ch 1</div><div class="t" style="left:142.85px;top:1086.07px;font-size:20.35px;color:#3cc0c4;font-weight:400;transform:scaleX(0.9340);-webkit-text-stroke:0.35px #3cc0c4;">Ch 2</div><div class="t" style="left:269.31px;top:1086.07px;font-size:20.35px;color:#8ccc50;font-weight:400;transform:scaleX(0.9708);-webkit-text-stroke:0.35px #8ccc50;">Ch 4</div><div class="t" style="left:395.92px;top:1086.07px;font-size:20.35px;color:#eea25c;font-weight:400;transform:scaleX(0.9610);-webkit-text-stroke:0.35px #eea25c;">Ch 5</div><div class="t" style="left:16.98px;top:1112.46px;font-size:19.19px;color:#1a1a1a;font-weight:400;transform:scaleX(0.9933);-webkit-text-stroke:0.35px #1a1a1a;">1 V/div</div><div class="t" style="left:143.57px;top:1112.46px;font-size:19.19px;color:#1a1a1a;font-weight:400;transform:scaleX(0.9950);-webkit-text-stroke:0.35px #1a1a1a;">1 V/div</div><div class="t" style="left:269.52px;top:1112.46px;font-size:19.19px;color:#1a1a1a;font-weight:400;transform:scaleX(1.0162);-webkit-text-stroke:0.35px #1a1a1a;">500 mV/div</div><div class="t" style="left:396.06px;top:1112.46px;font-size:19.19px;color:#1a1a1a;font-weight:400;transform:scaleX(1.0055);-webkit-text-stroke:0.35px #1a1a1a;">10 V/div</div><div class="t" style="left:396.58px;top:1137.86px;font-size:19.77px;color:#1a1a1a;font-weight:400;transform:scaleX(1.0272);-webkit-text-stroke:0.35px #1a1a1a;">1 M&#937;</div><div class="t" style="left:16.81px;top:1162.58px;font-size:19.04px;color:#1a1a1a;font-weight:400;transform:scaleX(1.0378);-webkit-text-stroke:0.35px #1a1a1a;">20 MHz</div><div class="t" style="left:142.81px;top:1162.58px;font-size:19.04px;color:#1a1a1a;font-weight:400;transform:scaleX(1.0378);-webkit-text-stroke:0.35px #1a1a1a;">20 MHz</div><div class="t" style="left:269.30px;top:1162.58px;font-size:19.04px;color:#1a1a1a;font-weight:400;transform:scaleX(1.0472);-webkit-text-stroke:0.35px #1a1a1a;">20 MHz</div><div class="t" style="left:395.90px;top:1162.58px;font-size:19.04px;color:#1a1a1a;font-weight:400;transform:scaleX(1.0463);-webkit-text-stroke:0.35px #1a1a1a;">200 MHz</div><svg style="position:absolute;left:17px;top:1136.5px" width="24" height="20"><path d="M2.2 13C2 7 5 2.2 10.5 2C15.5 2 18.2 5.5 18.8 9" fill="none" stroke="#3c3c3c" stroke-width="2.3"/><circle cx="10.8" cy="5.6" r="3.3" fill="none" stroke="#3a3a3a" stroke-width="2.1"/><ellipse cx="3.3" cy="13.3" rx="2.4" ry="3.6" fill="#d8d8d8" stroke="#6c6c6c" stroke-width="1.4"/><ellipse cx="18.6" cy="13.8" rx="2.6" ry="3.9" fill="#ececec" stroke="#7a7a7a" stroke-width="1.4"/></svg><svg style="position:absolute;left:144px;top:1136.5px" width="24" height="20"><path d="M2.2 13C2 7 5 2.2 10.5 2C15.5 2 18.2 5.5 18.8 9" fill="none" stroke="#3c3c3c" stroke-width="2.3"/><circle cx="10.8" cy="5.6" r="3.3" fill="none" stroke="#3a3a3a" stroke-width="2.1"/><ellipse cx="3.3" cy="13.3" rx="2.4" ry="3.6" fill="#d8d8d8" stroke="#6c6c6c" stroke-width="1.4"/><ellipse cx="18.6" cy="13.8" rx="2.6" ry="3.9" fill="#ececec" stroke="#7a7a7a" stroke-width="1.4"/></svg><svg style="position:absolute;left:270px;top:1136.5px" width="24" height="20"><path d="M2.2 13C2 7 5 2.2 10.5 2C15.5 2 18.2 5.5 18.8 9" fill="none" stroke="#3c3c3c" stroke-width="2.3"/><circle cx="10.8" cy="5.6" r="3.3" fill="none" stroke="#3a3a3a" stroke-width="2.1"/><ellipse cx="3.3" cy="13.3" rx="2.4" ry="3.6" fill="#d8d8d8" stroke="#6c6c6c" stroke-width="1.4"/><ellipse cx="18.6" cy="13.8" rx="2.6" ry="3.9" fill="#ececec" stroke="#7a7a7a" stroke-width="1.4"/></svg><div class="t" style="left:105px;top:1162.5px;font-size:12px;font-weight:700;color:#222;letter-spacing:-1px">B<span style="font-size:9px;position:relative;top:3px">w</span></div><div class="t" style="left:232px;top:1162.5px;font-size:12px;font-weight:700;color:#222;letter-spacing:-1px">B<span style="font-size:9px;position:relative;top:3px">w</span></div><div class="t" style="left:358.5px;top:1162.5px;font-size:12px;font-weight:700;color:#222;letter-spacing:-1px">B<span style="font-size:9px;position:relative;top:3px">w</span></div><div class="t" style="left:485px;top:1162.5px;font-size:12px;font-weight:700;color:#222;letter-spacing:-1px">B<span style="font-size:9px;position:relative;top:3px">w</span></div><svg style="position:absolute;left:330px;top:1137px" width="20" height="18"><path d="M1.8 7.5C3.5 1.5 6.5 1 8.5 7.5C10.5 14 13.5 16.5 16.5 9" fill="none" stroke="#4a4a4a" stroke-width="2.4"/></svg><div style="position:absolute;left:921.7px;top:1078px;width:52.09999999999991px;height:104.5px;box-sizing:border-box;border:1.5px solid #5c5c5c;border-radius:7px;background:linear-gradient(#333333,#292929 25%,#272727 80%,#222)"></div><div style="position:absolute;left:926.2px;top:1088px;width:43.09999999999991px;height:4.2px;background:#cc4e5a;border-radius:2px"></div><div style="position:absolute;left:981.5px;top:1078px;width:52.200000000000045px;height:104.5px;box-sizing:border-box;border:1.5px solid #5c5c5c;border-radius:7px;background:linear-gradient(#333333,#292929 25%,#272727 80%,#222)"></div><div style="position:absolute;left:986.0px;top:1088px;width:43.200000000000045px;height:4.2px;background:#2a2f9e;border-radius:2px"></div><div style="position:absolute;left:1062.6px;top:1078px;width:52.600000000000136px;height:104.5px;box-sizing:border-box;border:1.5px solid #5c5c5c;border-radius:7px;background:linear-gradient(#333333,#292929 25%,#272727 80%,#222)"></div><div style="position:absolute;left:1067.1px;top:1088px;width:43.600000000000136px;height:4.2px;background:#e4963e;border-radius:2px"></div><div style="position:absolute;left:1122.3px;top:1078px;width:52.700000000000045px;height:104.5px;box-sizing:border-box;border:1.5px solid #5c5c5c;border-radius:7px;background:linear-gradient(#333333,#292929 25%,#272727 80%,#222)"></div><div style="position:absolute;left:1126.8px;top:1088px;width:43.700000000000045px;height:4.2px;background:#c4c4cc;border-radius:2px"></div><div style="position:absolute;left:1182.6px;top:1078px;width:52.600000000000136px;height:104.5px;box-sizing:border-box;border:1.5px solid #5c5c5c;border-radius:7px;background:linear-gradient(#333333,#292929 25%,#272727 80%,#222)"></div><div style="position:absolute;left:1187.1px;top:1088px;width:43.600000000000136px;height:4.2px;background:#b050d8;border-radius:2px"></div><div style="position:absolute;left:1047.5px;top:1080px;width:1.5px;height:102px;background:#5a5a5a"></div><div style="position:absolute;left:1249px;top:1080px;width:1.5px;height:102px;background:#444"></div><div style="position:absolute;left:1970.5px;top:1080px;width:1.5px;height:102px;background:#444"></div><div class="t" style="left:939.54px;top:1121.89px;font-size:27.18px;color:#dcdcdc;font-weight:400;transform:scaleX(1.0646);">3</div><div class="t" style="left:999.47px;top:1121.89px;font-size:27.18px;color:#dcdcdc;font-weight:400;transform:scaleX(1.1277);">6</div><div class="t" style="left:1071.40px;top:1104.02px;font-size:20.64px;color:#e0e0e0;font-weight:400;transform:scaleX(0.9860);-webkit-text-stroke:0.15px #e0e0e0;">Add</div><div class="t" style="left:1068.11px;top:1125.79px;font-size:19.62px;color:#e0e0e0;font-weight:400;transform:scaleX(1.0140);-webkit-text-stroke:0.15px #e0e0e0;">New</div><div class="t" style="left:1065.53px;top:1145.78px;font-size:20.93px;color:#e0e0e0;font-weight:400;transform:scaleX(0.9946);-webkit-text-stroke:0.15px #e0e0e0;">Math</div><div class="t" style="left:1131.10px;top:1104.02px;font-size:20.64px;color:#e0e0e0;font-weight:400;transform:scaleX(0.9860);-webkit-text-stroke:0.15px #e0e0e0;">Add</div><div class="t" style="left:1127.81px;top:1125.79px;font-size:19.62px;color:#e0e0e0;font-weight:400;transform:scaleX(1.0140);-webkit-text-stroke:0.15px #e0e0e0;">New</div><div class="t" style="left:1134.48px;top:1145.78px;font-size:20.93px;color:#e0e0e0;font-weight:400;transform:scaleX(0.8490);-webkit-text-stroke:0.15px #e0e0e0;">Ref</div><div class="t" style="left:1191.40px;top:1104.02px;font-size:20.64px;color:#e0e0e0;font-weight:400;transform:scaleX(0.9860);-webkit-text-stroke:0.15px #e0e0e0;">Add</div><div class="t" style="left:1188.11px;top:1125.79px;font-size:19.62px;color:#e0e0e0;font-weight:400;transform:scaleX(1.0140);-webkit-text-stroke:0.15px #e0e0e0;">New</div><div class="t" style="left:1193.07px;top:1145.78px;font-size:20.93px;color:#e0e0e0;font-weight:400;transform:scaleX(0.8547);-webkit-text-stroke:0.15px #e0e0e0;">Bus</div><div style="position:absolute;left:1264.4px;top:1087px;width:264.0px;height:95px;background:#cbcbcb;border-radius:5px"></div><div style="position:absolute;left:1264.4px;top:1087px;width:264.0px;height:24.5px;background:#5c5c5c;border-radius:5px 5px 0 0"></div><div style="position:absolute;left:1537.3px;top:1087px;width:210.4000000000001px;height:95px;background:#cbcbcb;border-radius:5px"></div><div style="position:absolute;left:1537.3px;top:1087px;width:210.4000000000001px;height:24.5px;background:#5c5c5c;border-radius:5px 5px 0 0"></div><div style="position:absolute;left:1757px;top:1087px;width:197px;height:95px;background:#cbcbcb;border-radius:5px"></div><div style="position:absolute;left:1757px;top:1087px;width:197px;height:24.5px;background:#5c5c5c;border-radius:5px 5px 0 0"></div><div class="t" style="left:1270.33px;top:1087.06px;font-size:21.08px;color:#eeeeee;font-weight:400;transform:scaleX(1.0469);-webkit-text-stroke:0.35px #eeeeee;">Horizontal</div><div class="t" style="left:1544.08px;top:1087.06px;font-size:21.08px;color:#eeeeee;font-weight:400;transform:scaleX(0.9981);-webkit-text-stroke:0.35px #eeeeee;">Trigger</div><div class="t" style="left:1764.30px;top:1087.18px;font-size:20.93px;color:#eeeeee;font-weight:400;transform:scaleX(1.0307);-webkit-text-stroke:0.35px #eeeeee;">Acquisition</div><div class="t" style="left:1269.67px;top:1112.66px;font-size:19.19px;color:#1a1a1a;font-weight:400;transform:scaleX(0.9989);-webkit-text-stroke:0.35px #1a1a1a;">10 ms/div</div><div class="t" style="left:1410.75px;top:1112.66px;font-size:19.19px;color:#1a1a1a;font-weight:400;transform:scaleX(1.0111);-webkit-text-stroke:0.35px #1a1a1a;">100 ms</div><div class="t" style="left:1269.49px;top:1136.97px;font-size:20.35px;color:#1a1a1a;font-weight:400;transform:scaleX(0.8964);-webkit-text-stroke:0.35px #1a1a1a;">SR: 2.5 MS/s</div><div class="t" style="left:1410.20px;top:1136.97px;font-size:20.35px;color:#1a1a1a;font-weight:400;transform:scaleX(0.9732);-webkit-text-stroke:0.35px #1a1a1a;">400 ns/pt</div><div class="t" style="left:1268.89px;top:1161.84px;font-size:19.91px;color:#1a1a1a;font-weight:400;transform:scaleX(0.9505);-webkit-text-stroke:0.35px #1a1a1a;">RL: 250 kpts</div><div class="t" style="left:1429.06px;top:1161.84px;font-size:19.91px;color:#1a1a1a;font-weight:400;transform:scaleX(1.0557);-webkit-text-stroke:0.35px #1a1a1a;">0%</div><svg style="position:absolute;left:1409px;top:1163px" width="16" height="18"><path d="M2 2h11v11h-3.5l-2 3.5l-2-3.5h-3.5z" fill="#111" stroke="#e8902e" stroke-width="1.6"/><path d="M5 4.5h5M7.5 4.5v7" stroke="#e8902e" stroke-width="1.6"/></svg><div style="position:absolute;left:1542.9px;top:1113.3px;width:39.4px;height:19.7px;box-sizing:border-box;background:#f89c34;border:1.5px solid #8c5624;border-radius:5px"></div><div class="t" style="left:1556.73px;top:1111.50px;font-size:18.90px;color:#4a2c12;font-weight:400;transform:scaleX(1.0134);-webkit-text-stroke:0.35px #4a2c12;">5</div><svg style="position:absolute;left:1594px;top:1114px" width="26" height="20"><path d="M3 17.5h3.5L16 3.5h5" fill="none" stroke="#6a6a7a" stroke-width="1.8"/></svg><div class="t" style="left:1630.34px;top:1113.00px;font-size:18.90px;color:#1a1a1a;font-weight:400;transform:scaleX(1.0041);-webkit-text-stroke:0.35px #1a1a1a;">0 V</div><div class="t" style="left:1542.40px;top:1136.97px;font-size:20.35px;color:#1a1a1a;font-weight:400;transform:scaleX(0.8623);-webkit-text-stroke:0.35px #1a1a1a;">HF Reject</div><div class="t" style="left:1763.40px;top:1112.59px;font-size:19.62px;color:#1a1a1a;font-weight:400;transform:scaleX(1.0374);-webkit-text-stroke:0.35px #1a1a1a;">Auto,</div><div class="t" style="left:1870.80px;top:1112.59px;font-size:19.62px;color:#1a1a1a;font-weight:400;transform:scaleX(0.9496);-webkit-text-stroke:0.35px #1a1a1a;">Analyze</div><div class="t" style="left:1762.45px;top:1137.69px;font-size:19.62px;color:#1a1a1a;font-weight:400;transform:scaleX(0.9699);-webkit-text-stroke:0.35px #1a1a1a;">Sample: 12 bits</div><div class="t" style="left:1762.75px;top:1161.99px;font-size:19.62px;color:#1a1a1a;font-weight:400;transform:scaleX(0.9843);-webkit-text-stroke:0.35px #1a1a1a;">1.707 kAcqs</div><div style="position:absolute;left:1985px;top:1078px;width:120px;height:48px;background:#1ec81e;border-radius:6px"></div><div class="t" style="left:2002.41px;top:1091.10px;font-size:18.90px;color:#f4f4f4;font-weight:700;transform:scaleX(1.0148);">Triggered</div><div style="position:absolute;left:1985px;top:1133px;width:120px;height:49px;background:#cbcbcb;border-radius:6px"></div><div class="t" style="left:1994.43px;top:1135.89px;font-size:19.62px;color:#1a1a1a;font-weight:400;transform:scaleX(0.9862);-webkit-text-stroke:0.35px #1a1a1a;">24 Jul 2024</div><div class="t" style="left:1989.51px;top:1158.48px;font-size:19.04px;color:#1a1a1a;font-weight:400;transform:scaleX(1.0465);-webkit-text-stroke:0.35px #1a1a1a;">11:35:49 PM</div></body></html>
